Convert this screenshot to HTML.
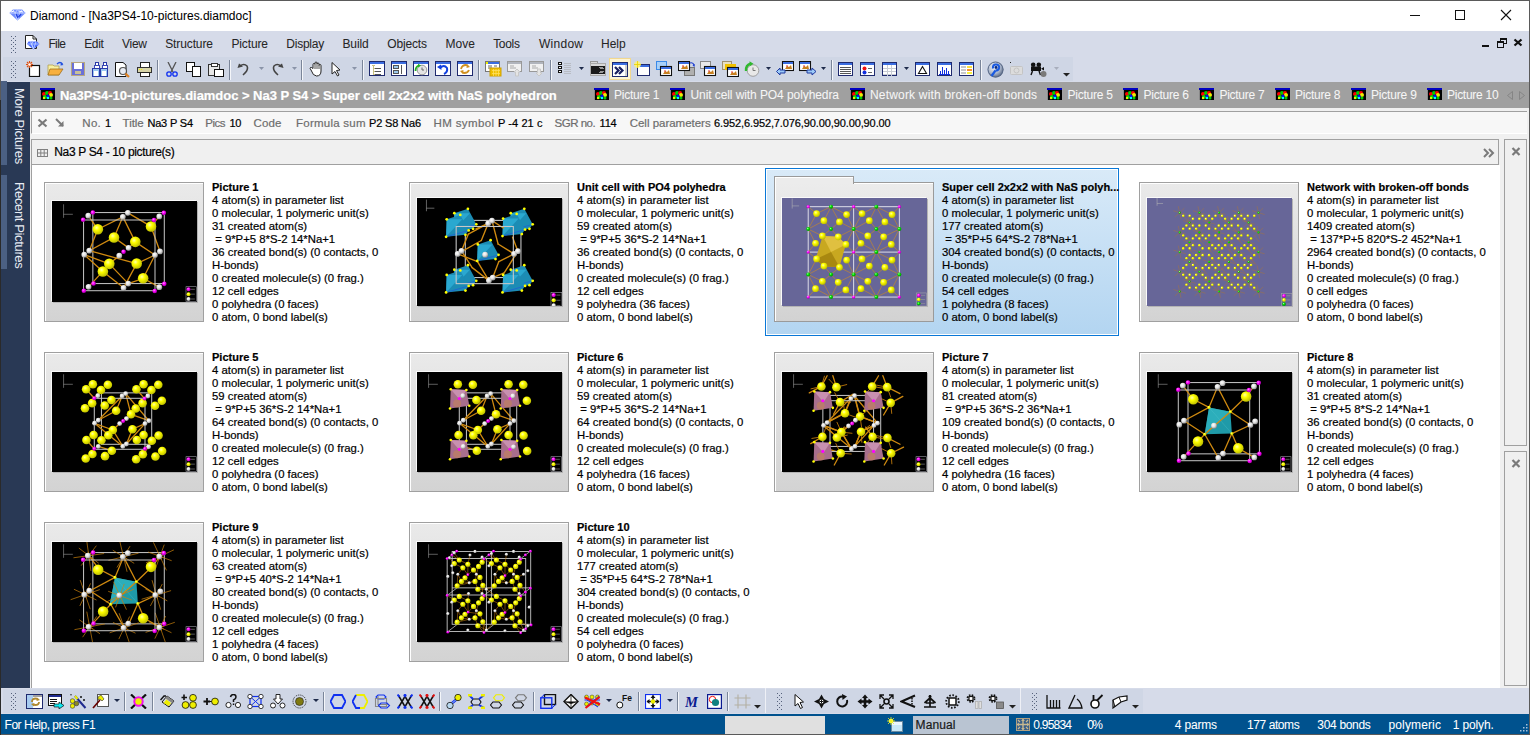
<!DOCTYPE html>
<html><head><meta charset="utf-8"><title>Diamond</title><style>*{margin:0;padding:0;box-sizing:border-box}
html,body{width:1530px;height:735px;overflow:hidden;background:#fff;font-family:"Liberation Sans",sans-serif;position:relative}
.a{position:absolute;display:block}
.t{position:absolute;white-space:pre;line-height:normal;font-family:"Liberation Sans",sans-serif;-webkit-text-stroke:0.2px currentColor}
</style></head><body>
<svg class="a" style="left:0px;top:0px;" width="1" height="1" viewBox="0 0 1 1"><defs>
<radialGradient id="gy" cx="0.38" cy="0.35" r="0.7"><stop offset="0" stop-color="#ffffb0"/><stop offset="0.35" stop-color="#ffff00"/><stop offset="1" stop-color="#b8b800"/></radialGradient>
<radialGradient id="gw" cx="0.38" cy="0.35" r="0.7"><stop offset="0" stop-color="#ffffff"/><stop offset="0.5" stop-color="#e0e0e0"/><stop offset="1" stop-color="#8a8a8a"/></radialGradient>
<radialGradient id="gm" cx="0.38" cy="0.35" r="0.7"><stop offset="0" stop-color="#ff9cff"/><stop offset="0.4" stop-color="#ff00ff"/><stop offset="1" stop-color="#a000a0"/></radialGradient>
<radialGradient id="gg" cx="0.38" cy="0.35" r="0.7"><stop offset="0" stop-color="#a0ffa0"/><stop offset="0.4" stop-color="#00e000"/><stop offset="1" stop-color="#008800"/></radialGradient>
</defs></svg>
<div class="a" style="left:0px;top:0px;width:1530px;height:31px;background:#fff"></div>
<div class="a" style="left:0px;top:31px;width:1530px;height:25px;background:#d6dbe9"></div>
<div class="a" style="left:0px;top:56px;width:1530px;height:26px;background:#d6dbe9"></div>
<div class="a" style="left:3px;top:57px;width:1070px;height:24px;background:#cfd6e5"></div>
<div class="a" style="left:30px;top:82px;width:1500px;height:26px;background:#a0a0a0"></div>
<div class="a" style="left:0px;top:82px;width:30px;height:606px;background:#293955"></div>
<div class="a" style="left:1px;top:81px;width:6px;height:84px;background:#4b6083"></div>
<div class="a" style="left:1px;top:175px;width:6px;height:94px;background:#4b6083"></div>
<div class="a" style="left:30px;top:108px;width:1500px;height:580px;background:#f0f0f0"></div>
<div class="a" style="left:0px;top:688px;width:1530px;height:26px;background:#d6dbe9"></div>
<div class="a" style="left:3px;top:689px;width:762px;height:24px;background:#cfd6e5"></div>
<div class="a" style="left:766px;top:689px;width:254px;height:24px;background:#cfd6e5"></div>
<div class="a" style="left:1021px;top:689px;width:122px;height:24px;background:#cfd6e5"></div>
<div class="a" style="left:0px;top:714px;width:1530px;height:21px;background:#00528e"></div>
<div class="t" style="left:30.00px;top:9.14px;font-size:12px;color:#000;letter-spacing:-0.016px;-webkit-text-stroke:0.05px #000;">Diamond - [Na3PS4-10-pictures.diamdoc]</div>
<svg class="a" style="left:9px;top:9px;" width="17" height="12" viewBox="0 0 17 12"><path d="M4 0.5 H13 L16.5 4 L8.5 11.5 L0.5 4 Z" fill="#6f8cff"/><path d="M4 0.5 L6 4 L8.5 0.5 L11 4 L13 0.5 M0.5 4 H16.5 M6 4 L8.5 11.5 L11 4" fill="none" stroke="#c8d6ff" stroke-width="0.9"/><path d="M2 3 L5 2 M10 2 L14 3" stroke="#fff" stroke-width="1"/><path d="M7 5 L9 9 M12 5 L9.5 8" stroke="#2040e0" stroke-width="1.3"/></svg>
<div class="a" style="left:1410px;top:15px;width:10px;height:1px;background:#111"></div>
<div class="a" style="left:1455px;top:10px;width:10px;height:10px;border:1px solid #111"></div>
<svg class="a" style="left:1500px;top:9px;" width="12" height="12" viewBox="0 0 12 12"><path d="M1 1 L11 11 M11 1 L1 11" stroke="#111" stroke-width="1.1"/></svg>
<div class="a" style="left:1482px;top:45px;width:7px;height:2px;background:#111"></div>
<svg class="a" style="left:1497px;top:38px;" width="10" height="10" viewBox="0 0 10 10"><rect x="3.5" y="0.5" width="6" height="5" fill="none" stroke="#111"/><rect x="3.5" y="0.5" width="6" height="1.5" fill="#111"/><rect x="0.5" y="3.5" width="6" height="6" fill="#d6dbe9" stroke="#111"/><rect x="0.5" y="3.5" width="6" height="1.5" fill="#111"/></svg>
<svg class="a" style="left:1513px;top:38px;" width="10" height="9" viewBox="0 0 10 9"><path d="M1.5 1.5 L8.5 7.5 M8.5 1.5 L1.5 7.5" stroke="#111" stroke-width="2.3"/></svg>
<div class="t" style="left:48.40px;top:37.14px;font-size:12px;color:#262626;letter-spacing:-0.612px;-webkit-text-stroke:0.05px #262626;">File</div>
<div class="t" style="left:84.20px;top:37.14px;font-size:12px;color:#262626;letter-spacing:-0.359px;-webkit-text-stroke:0.05px #262626;">Edit</div>
<div class="t" style="left:122.00px;top:37.14px;font-size:12px;color:#262626;letter-spacing:-0.264px;-webkit-text-stroke:0.05px #262626;">View</div>
<div class="t" style="left:165.20px;top:37.14px;font-size:12px;color:#262626;letter-spacing:-0.111px;-webkit-text-stroke:0.05px #262626;">Structure</div>
<div class="t" style="left:231.40px;top:37.14px;font-size:12px;color:#262626;letter-spacing:-0.125px;-webkit-text-stroke:0.05px #262626;">Picture</div>
<div class="t" style="left:286.30px;top:37.14px;font-size:12px;color:#262626;letter-spacing:-0.241px;-webkit-text-stroke:0.05px #262626;">Display</div>
<div class="t" style="left:342.50px;top:37.14px;font-size:12px;color:#262626;letter-spacing:-0.146px;-webkit-text-stroke:0.05px #262626;">Build</div>
<div class="t" style="left:387.30px;top:37.14px;font-size:12px;color:#262626;letter-spacing:-0.164px;-webkit-text-stroke:0.05px #262626;">Objects</div>
<div class="t" style="left:445.40px;top:37.14px;font-size:12px;color:#262626;letter-spacing:0.085px;-webkit-text-stroke:0.05px #262626;">Move</div>
<div class="t" style="left:493.20px;top:37.14px;font-size:12px;color:#262626;letter-spacing:-0.328px;-webkit-text-stroke:0.05px #262626;">Tools</div>
<div class="t" style="left:539.00px;top:37.14px;font-size:12px;color:#262626;letter-spacing:0.264px;-webkit-text-stroke:0.05px #262626;">Window</div>
<div class="t" style="left:601.00px;top:37.14px;font-size:12px;color:#262626;-webkit-text-stroke:0.05px #262626;">Help</div>
<div class="t" style="left:27px;top:88px;font-size:13px;color:#e8ecf4;transform-origin:0 0;transform:rotate(90deg);letter-spacing:-0.33px;-webkit-text-stroke:0">More Pictures</div>
<div class="t" style="left:27px;top:182px;font-size:13px;color:#e8ecf4;transform-origin:0 0;transform:rotate(90deg);letter-spacing:-0.36px;-webkit-text-stroke:0">Recent Pictures</div>
<div class="t" style="left:60.00px;top:87.73px;font-size:13px;color:#fff;font-weight:bold;letter-spacing:-0.030px;">Na3PS4-10-pictures.diamdoc &gt; Na3 P S4 &gt; Super cell 2x2x2 with NaS polyhedron</div>
<svg class="a" style="left:40px;top:88px;" width="15" height="12" viewBox="0 0 15 12"><rect x="0" y="0" width="15" height="2" fill="#0000c0"/><rect x="0" y="2" width="15" height="10" fill="#000"/><rect x="0" y="2" width="1" height="10" fill="#888"/><circle cx="4" cy="6" r="2" fill="#f00"/><circle cx="7" cy="5" r="2" fill="#0c0"/><circle cx="10" cy="5" r="2" fill="#f00"/><circle cx="11" cy="7" r="2" fill="#ee0"/><circle cx="5" cy="9" r="2" fill="#0d0"/><circle cx="8" cy="8" r="1.6" fill="#00f"/><circle cx="8" cy="10" r="1.3" fill="#0ff"/><circle cx="11" cy="10" r="1.5" fill="#0c0"/><circle cx="4" cy="10" r="1.2" fill="#ee0"/></svg>
<svg class="a" style="left:594px;top:88px;" width="15" height="12" viewBox="0 0 15 12"><rect x="0" y="0" width="15" height="2" fill="#0000c0"/><rect x="0" y="2" width="15" height="10" fill="#000"/><rect x="0" y="2" width="1" height="10" fill="#888"/><circle cx="4" cy="6" r="2" fill="#f00"/><circle cx="7" cy="5" r="2" fill="#0c0"/><circle cx="10" cy="5" r="2" fill="#f00"/><circle cx="11" cy="7" r="2" fill="#ee0"/><circle cx="5" cy="9" r="2" fill="#0d0"/><circle cx="8" cy="8" r="1.6" fill="#00f"/><circle cx="8" cy="10" r="1.3" fill="#0ff"/><circle cx="11" cy="10" r="1.5" fill="#0c0"/><circle cx="4" cy="10" r="1.2" fill="#ee0"/></svg>
<div class="t" style="left:614.00px;top:88.14px;font-size:12px;color:#f6f6f6;letter-spacing:-0.232px;-webkit-text-stroke:0.05px #f6f6f6;">Picture 1</div>
<svg class="a" style="left:670px;top:88px;" width="15" height="12" viewBox="0 0 15 12"><rect x="0" y="0" width="15" height="2" fill="#0000c0"/><rect x="0" y="2" width="15" height="10" fill="#000"/><rect x="0" y="2" width="1" height="10" fill="#888"/><circle cx="4" cy="6" r="2" fill="#f00"/><circle cx="7" cy="5" r="2" fill="#0c0"/><circle cx="10" cy="5" r="2" fill="#f00"/><circle cx="11" cy="7" r="2" fill="#ee0"/><circle cx="5" cy="9" r="2" fill="#0d0"/><circle cx="8" cy="8" r="1.6" fill="#00f"/><circle cx="8" cy="10" r="1.3" fill="#0ff"/><circle cx="11" cy="10" r="1.5" fill="#0c0"/><circle cx="4" cy="10" r="1.2" fill="#ee0"/></svg>
<div class="t" style="left:690.50px;top:88.14px;font-size:12px;color:#f6f6f6;letter-spacing:-0.083px;-webkit-text-stroke:0.05px #f6f6f6;">Unit cell with PO4 polyhedra</div>
<svg class="a" style="left:850px;top:88px;" width="15" height="12" viewBox="0 0 15 12"><rect x="0" y="0" width="15" height="2" fill="#0000c0"/><rect x="0" y="2" width="15" height="10" fill="#000"/><rect x="0" y="2" width="1" height="10" fill="#888"/><circle cx="4" cy="6" r="2" fill="#f00"/><circle cx="7" cy="5" r="2" fill="#0c0"/><circle cx="10" cy="5" r="2" fill="#f00"/><circle cx="11" cy="7" r="2" fill="#ee0"/><circle cx="5" cy="9" r="2" fill="#0d0"/><circle cx="8" cy="8" r="1.6" fill="#00f"/><circle cx="8" cy="10" r="1.3" fill="#0ff"/><circle cx="11" cy="10" r="1.5" fill="#0c0"/><circle cx="4" cy="10" r="1.2" fill="#ee0"/></svg>
<div class="t" style="left:870.00px;top:88.14px;font-size:12px;color:#f6f6f6;letter-spacing:0.184px;-webkit-text-stroke:0.05px #f6f6f6;">Network with broken-off bonds</div>
<svg class="a" style="left:1047px;top:88px;" width="15" height="12" viewBox="0 0 15 12"><rect x="0" y="0" width="15" height="2" fill="#0000c0"/><rect x="0" y="2" width="15" height="10" fill="#000"/><rect x="0" y="2" width="1" height="10" fill="#888"/><circle cx="4" cy="6" r="2" fill="#f00"/><circle cx="7" cy="5" r="2" fill="#0c0"/><circle cx="10" cy="5" r="2" fill="#f00"/><circle cx="11" cy="7" r="2" fill="#ee0"/><circle cx="5" cy="9" r="2" fill="#0d0"/><circle cx="8" cy="8" r="1.6" fill="#00f"/><circle cx="8" cy="10" r="1.3" fill="#0ff"/><circle cx="11" cy="10" r="1.5" fill="#0c0"/><circle cx="4" cy="10" r="1.2" fill="#ee0"/></svg>
<div class="t" style="left:1067.60px;top:88.14px;font-size:12px;color:#f6f6f6;letter-spacing:-0.244px;-webkit-text-stroke:0.05px #f6f6f6;">Picture 5</div>
<svg class="a" style="left:1123px;top:88px;" width="15" height="12" viewBox="0 0 15 12"><rect x="0" y="0" width="15" height="2" fill="#0000c0"/><rect x="0" y="2" width="15" height="10" fill="#000"/><rect x="0" y="2" width="1" height="10" fill="#888"/><circle cx="4" cy="6" r="2" fill="#f00"/><circle cx="7" cy="5" r="2" fill="#0c0"/><circle cx="10" cy="5" r="2" fill="#f00"/><circle cx="11" cy="7" r="2" fill="#ee0"/><circle cx="5" cy="9" r="2" fill="#0d0"/><circle cx="8" cy="8" r="1.6" fill="#00f"/><circle cx="8" cy="10" r="1.3" fill="#0ff"/><circle cx="11" cy="10" r="1.5" fill="#0c0"/><circle cx="4" cy="10" r="1.2" fill="#ee0"/></svg>
<div class="t" style="left:1143.50px;top:88.14px;font-size:12px;color:#f6f6f6;letter-spacing:-0.257px;-webkit-text-stroke:0.05px #f6f6f6;">Picture 6</div>
<svg class="a" style="left:1199px;top:88px;" width="15" height="12" viewBox="0 0 15 12"><rect x="0" y="0" width="15" height="2" fill="#0000c0"/><rect x="0" y="2" width="15" height="10" fill="#000"/><rect x="0" y="2" width="1" height="10" fill="#888"/><circle cx="4" cy="6" r="2" fill="#f00"/><circle cx="7" cy="5" r="2" fill="#0c0"/><circle cx="10" cy="5" r="2" fill="#f00"/><circle cx="11" cy="7" r="2" fill="#ee0"/><circle cx="5" cy="9" r="2" fill="#0d0"/><circle cx="8" cy="8" r="1.6" fill="#00f"/><circle cx="8" cy="10" r="1.3" fill="#0ff"/><circle cx="11" cy="10" r="1.5" fill="#0c0"/><circle cx="4" cy="10" r="1.2" fill="#ee0"/></svg>
<div class="t" style="left:1219.40px;top:88.14px;font-size:12px;color:#f6f6f6;letter-spacing:-0.269px;-webkit-text-stroke:0.05px #f6f6f6;">Picture 7</div>
<svg class="a" style="left:1275px;top:88px;" width="15" height="12" viewBox="0 0 15 12"><rect x="0" y="0" width="15" height="2" fill="#0000c0"/><rect x="0" y="2" width="15" height="10" fill="#000"/><rect x="0" y="2" width="1" height="10" fill="#888"/><circle cx="4" cy="6" r="2" fill="#f00"/><circle cx="7" cy="5" r="2" fill="#0c0"/><circle cx="10" cy="5" r="2" fill="#f00"/><circle cx="11" cy="7" r="2" fill="#ee0"/><circle cx="5" cy="9" r="2" fill="#0d0"/><circle cx="8" cy="8" r="1.6" fill="#00f"/><circle cx="8" cy="10" r="1.3" fill="#0ff"/><circle cx="11" cy="10" r="1.5" fill="#0c0"/><circle cx="4" cy="10" r="1.2" fill="#ee0"/></svg>
<div class="t" style="left:1295.00px;top:88.14px;font-size:12px;color:#f6f6f6;letter-spacing:-0.232px;-webkit-text-stroke:0.05px #f6f6f6;">Picture 8</div>
<svg class="a" style="left:1351px;top:88px;" width="15" height="12" viewBox="0 0 15 12"><rect x="0" y="0" width="15" height="2" fill="#0000c0"/><rect x="0" y="2" width="15" height="10" fill="#000"/><rect x="0" y="2" width="1" height="10" fill="#888"/><circle cx="4" cy="6" r="2" fill="#f00"/><circle cx="7" cy="5" r="2" fill="#0c0"/><circle cx="10" cy="5" r="2" fill="#f00"/><circle cx="11" cy="7" r="2" fill="#ee0"/><circle cx="5" cy="9" r="2" fill="#0d0"/><circle cx="8" cy="8" r="1.6" fill="#00f"/><circle cx="8" cy="10" r="1.3" fill="#0ff"/><circle cx="11" cy="10" r="1.5" fill="#0c0"/><circle cx="4" cy="10" r="1.2" fill="#ee0"/></svg>
<div class="t" style="left:1371.00px;top:88.14px;font-size:12px;color:#f6f6f6;letter-spacing:-0.194px;-webkit-text-stroke:0.05px #f6f6f6;">Picture 9</div>
<svg class="a" style="left:1427px;top:88px;" width="15" height="12" viewBox="0 0 15 12"><rect x="0" y="0" width="15" height="2" fill="#0000c0"/><rect x="0" y="2" width="15" height="10" fill="#000"/><rect x="0" y="2" width="1" height="10" fill="#888"/><circle cx="4" cy="6" r="2" fill="#f00"/><circle cx="7" cy="5" r="2" fill="#0c0"/><circle cx="10" cy="5" r="2" fill="#f00"/><circle cx="11" cy="7" r="2" fill="#ee0"/><circle cx="5" cy="9" r="2" fill="#0d0"/><circle cx="8" cy="8" r="1.6" fill="#00f"/><circle cx="8" cy="10" r="1.3" fill="#0ff"/><circle cx="11" cy="10" r="1.5" fill="#0c0"/><circle cx="4" cy="10" r="1.2" fill="#ee0"/></svg>
<div class="t" style="left:1447.00px;top:88.14px;font-size:12px;color:#f6f6f6;letter-spacing:-0.270px;-webkit-text-stroke:0.05px #f6f6f6;">Picture 10</div>
<svg class="a" style="left:1506px;top:91px;" width="20" height="10" viewBox="0 0 20 10"><path d="M6.5 0.5 L1.5 4.5 L6.5 8.5 Z" fill="none" stroke="#858585"/><path d="M13.5 0.5 L18.5 4.5 L13.5 8.5 Z" fill="none" stroke="#858585"/></svg>
<div class="a" style="left:31px;top:111px;width:1496px;height:23px;background:#f7f7f7;border-top:1px solid #a0a0a0;border-left:1px solid #a0a0a0;border-bottom:1px solid #fff"></div>
<svg class="a" style="left:37px;top:118px;" width="11" height="10" viewBox="0 0 11 10"><path d="M1.5 1.5 L9.5 8.5 M9.5 1.5 L1.5 8.5" stroke="#7a7a7a" stroke-width="2.2"/></svg>
<svg class="a" style="left:55px;top:118px;" width="10" height="10" viewBox="0 0 10 10"><path d="M1 1 L8 8" stroke="#7a7a7a" stroke-width="2"/><path d="M8.5 3 L8.5 8.5 L3 8.5 Z" fill="#7a7a7a"/></svg>
<div class="t" style="left:82.30px;top:116.59px;font-size:11.5px;color:#6d6d6d;letter-spacing:0.302px;">No.</div>
<div class="t" style="left:104.90px;top:117.05px;font-size:11px;color:#000;">1</div>
<div class="t" style="left:122.60px;top:116.59px;font-size:11.5px;color:#6d6d6d;letter-spacing:-0.050px;">Title</div>
<div class="t" style="left:147.40px;top:117.05px;font-size:11px;color:#000;letter-spacing:-0.169px;">Na3 P S4</div>
<div class="t" style="left:205.30px;top:116.59px;font-size:11.5px;color:#6d6d6d;letter-spacing:-0.475px;">Pics</div>
<div class="t" style="left:229.40px;top:117.05px;font-size:11px;color:#000;letter-spacing:-0.235px;">10</div>
<div class="t" style="left:253.50px;top:116.59px;font-size:11.5px;color:#6d6d6d;letter-spacing:0.103px;">Code</div>
<div class="t" style="left:296.00px;top:116.59px;font-size:11.5px;color:#6d6d6d;letter-spacing:0.240px;">Formula sum</div>
<div class="t" style="left:369.00px;top:117.05px;font-size:11px;color:#000;letter-spacing:-0.150px;">P2 S8 Na6</div>
<div class="t" style="left:433.60px;top:116.59px;font-size:11.5px;color:#6d6d6d;letter-spacing:0.362px;">HM symbol</div>
<div class="t" style="left:498.00px;top:117.05px;font-size:11px;color:#000;letter-spacing:0.072px;">P -4 21 c</div>
<div class="t" style="left:554.60px;top:116.59px;font-size:11.5px;color:#6d6d6d;letter-spacing:-0.500px;">SGR no.</div>
<div class="t" style="left:599.60px;top:117.05px;font-size:11px;color:#000;letter-spacing:-0.268px;">114</div>
<div class="t" style="left:629.70px;top:116.59px;font-size:11.5px;color:#6d6d6d;letter-spacing:-0.012px;">Cell parameters</div>
<div class="t" style="left:714.00px;top:117.05px;font-size:11px;color:#000;letter-spacing:-0.110px;">6.952,6.952,7.076,90.00,90.00,90.00</div>
<div class="a" style="left:31px;top:139px;width:1468px;height:26px;background:#f0f0f0;border:1px solid #a0a0a0"></div>
<div class="a" style="left:31px;top:165px;width:1469px;height:523px;background:#fff;border-left:1px solid #a0a0a0"></div>
<svg class="a" style="left:37px;top:149px;" width="11" height="8" viewBox="0 0 11 8"><rect x="0.5" y="0.5" width="10" height="7" fill="none" stroke="#808080"/><path d="M0 4 H11 M3.8 0 V8 M7.2 0 V8" stroke="#808080"/></svg>
<div class="t" style="left:54.30px;top:145.44px;font-size:12px;color:#000;letter-spacing:-0.349px;">Na3 P S4 - 10 picture(s)</div>
<svg class="a" style="left:1483px;top:148px;" width="13" height="10" viewBox="0 0 13 10"><path d="M1 1 L5 5 L1 9 M6 1 L10 5 L6 9" fill="none" stroke="#7a7a7a" stroke-width="2"/></svg>
<div class="a" style="left:1504px;top:139px;width:23px;height:307px;background:#f0f0f0;border:1px solid #a0a0a0"></div>
<div class="a" style="left:1504px;top:451px;width:23px;height:235px;background:#f0f0f0;border:1px solid #a0a0a0"></div>
<svg class="a" style="left:1511px;top:147px;" width="10" height="9" viewBox="0 0 10 9"><path d="M1.5 1 L8.5 8 M8.5 1 L1.5 8" stroke="#7a7a7a" stroke-width="2.2"/></svg>
<svg class="a" style="left:1511px;top:459px;" width="10" height="9" viewBox="0 0 10 9"><path d="M1.5 1 L8.5 8 M8.5 1 L1.5 8" stroke="#7a7a7a" stroke-width="2.2"/></svg>
<div class="t" style="left:4.60px;top:717.64px;font-size:12px;color:#fff;letter-spacing:-0.492px;-webkit-text-stroke:0.05px #fff;">For Help, press F1</div>
<div class="a" style="left:725px;top:716px;width:100px;height:18px;background:#e0e0e0"></div>
<div class="a" style="left:913px;top:716px;width:96px;height:18px;background:#b9c4d2"></div>
<div class="t" style="left:915.50px;top:717.64px;font-size:12px;color:#1a1a1a;letter-spacing:0.129px;">Manual</div>
<div class="t" style="left:1033.30px;top:717.64px;font-size:12px;color:#fff;letter-spacing:-0.779px;-webkit-text-stroke:0.05px #fff;">0.95834</div>
<div class="t" style="left:1087.30px;top:717.64px;font-size:12px;color:#fff;letter-spacing:-1.644px;-webkit-text-stroke:0.05px #fff;">0%</div>
<div class="t" style="left:1174.80px;top:717.64px;font-size:12px;color:#fff;letter-spacing:-0.191px;-webkit-text-stroke:0.05px #fff;">4 parms</div>
<div class="t" style="left:1247.00px;top:717.64px;font-size:12px;color:#fff;letter-spacing:-0.417px;-webkit-text-stroke:0.05px #fff;">177 atoms</div>
<div class="t" style="left:1317.30px;top:717.64px;font-size:12px;color:#fff;letter-spacing:-0.319px;-webkit-text-stroke:0.05px #fff;">304 bonds</div>
<div class="t" style="left:1388.50px;top:717.64px;font-size:12px;color:#fff;letter-spacing:0.132px;-webkit-text-stroke:0.05px #fff;">polymeric</div>
<div class="t" style="left:1452.70px;top:717.64px;font-size:12px;color:#fff;letter-spacing:-0.133px;-webkit-text-stroke:0.05px #fff;">1 polyh.</div>
<div class="a" style="left:0px;top:0px;width:1530px;height:735px;border:1px solid #5a5a5a;background:transparent"></div>
<div class="a" style="left:0px;top:100px;width:1px;height:635px;background:#2a2a2a"></div>
<div class="a" style="left:765px;top:168px;width:354px;height:168px;border:1px solid #0a78d7;box-shadow:inset 0 0 0 1px #fff;background:linear-gradient(#d9eaf8,#b3d5f1)"></div>
<div class="t" style="left:212.00px;top:180.74px;font-size:11px;color:#000;font-weight:bold;">Picture 1</div>
<div class="t" style="left:212.00px;top:193.74px;font-size:11px;color:#000;transform-origin:0 0;transform:scaleX(1.03);">4 atom(s) in parameter list</div>
<div class="t" style="left:212.00px;top:206.74px;font-size:11px;color:#000;transform-origin:0 0;transform:scaleX(1.03);">0 molecular, 1 polymeric unit(s)</div>
<div class="t" style="left:212.00px;top:219.74px;font-size:11px;color:#000;transform-origin:0 0;transform:scaleX(1.03);">31 created atom(s)</div>
<div class="t" style="left:212.00px;top:232.74px;font-size:11px;color:#000;transform-origin:0 0;transform:scaleX(1.03);"> = 9*P+5 8*S-2 14*Na+1</div>
<div class="t" style="left:212.00px;top:245.74px;font-size:11px;color:#000;transform-origin:0 0;transform:scaleX(1.03);">36 created bond(s) (0 contacts, 0</div>
<div class="t" style="left:212.00px;top:258.75px;font-size:11px;color:#000;transform-origin:0 0;transform:scaleX(1.03);">H-bonds)</div>
<div class="t" style="left:212.00px;top:271.75px;font-size:11px;color:#000;transform-origin:0 0;transform:scaleX(1.03);">0 created molecule(s) (0 frag.)</div>
<div class="t" style="left:212.00px;top:284.75px;font-size:11px;color:#000;transform-origin:0 0;transform:scaleX(1.03);">12 cell edges</div>
<div class="t" style="left:212.00px;top:297.75px;font-size:11px;color:#000;transform-origin:0 0;transform:scaleX(1.03);">0 polyhedra (0 faces)</div>
<div class="t" style="left:212.00px;top:310.75px;font-size:11px;color:#000;transform-origin:0 0;transform:scaleX(1.03);">0 atom, 0 bond label(s)</div>
<div class="t" style="left:577.00px;top:180.74px;font-size:11px;color:#000;font-weight:bold;">Unit cell with PO4 polyhedra</div>
<div class="t" style="left:577.00px;top:193.74px;font-size:11px;color:#000;transform-origin:0 0;transform:scaleX(1.03);">4 atom(s) in parameter list</div>
<div class="t" style="left:577.00px;top:206.74px;font-size:11px;color:#000;transform-origin:0 0;transform:scaleX(1.03);">0 molecular, 1 polymeric unit(s)</div>
<div class="t" style="left:577.00px;top:219.74px;font-size:11px;color:#000;transform-origin:0 0;transform:scaleX(1.03);">59 created atom(s)</div>
<div class="t" style="left:577.00px;top:232.74px;font-size:11px;color:#000;transform-origin:0 0;transform:scaleX(1.03);"> = 9*P+5 36*S-2 14*Na+1</div>
<div class="t" style="left:577.00px;top:245.74px;font-size:11px;color:#000;transform-origin:0 0;transform:scaleX(1.03);">36 created bond(s) (0 contacts, 0</div>
<div class="t" style="left:577.00px;top:258.75px;font-size:11px;color:#000;transform-origin:0 0;transform:scaleX(1.03);">H-bonds)</div>
<div class="t" style="left:577.00px;top:271.75px;font-size:11px;color:#000;transform-origin:0 0;transform:scaleX(1.03);">0 created molecule(s) (0 frag.)</div>
<div class="t" style="left:577.00px;top:284.75px;font-size:11px;color:#000;transform-origin:0 0;transform:scaleX(1.03);">12 cell edges</div>
<div class="t" style="left:577.00px;top:297.75px;font-size:11px;color:#000;transform-origin:0 0;transform:scaleX(1.03);">9 polyhedra (36 faces)</div>
<div class="t" style="left:577.00px;top:310.75px;font-size:11px;color:#000;transform-origin:0 0;transform:scaleX(1.03);">0 atom, 0 bond label(s)</div>
<div class="t" style="left:942.00px;top:180.74px;font-size:11px;color:#000;font-weight:bold;">Super cell 2x2x2 with NaS polyh...</div>
<div class="t" style="left:942.00px;top:193.74px;font-size:11px;color:#000;transform-origin:0 0;transform:scaleX(1.03);">4 atom(s) in parameter list</div>
<div class="t" style="left:942.00px;top:206.74px;font-size:11px;color:#000;transform-origin:0 0;transform:scaleX(1.03);">0 molecular, 1 polymeric unit(s)</div>
<div class="t" style="left:942.00px;top:219.74px;font-size:11px;color:#000;transform-origin:0 0;transform:scaleX(1.03);">177 created atom(s)</div>
<div class="t" style="left:942.00px;top:232.74px;font-size:11px;color:#000;transform-origin:0 0;transform:scaleX(1.03);"> = 35*P+5 64*S-2 78*Na+1</div>
<div class="t" style="left:942.00px;top:245.74px;font-size:11px;color:#000;transform-origin:0 0;transform:scaleX(1.03);">304 created bond(s) (0 contacts, 0</div>
<div class="t" style="left:942.00px;top:258.75px;font-size:11px;color:#000;transform-origin:0 0;transform:scaleX(1.03);">H-bonds)</div>
<div class="t" style="left:942.00px;top:271.75px;font-size:11px;color:#000;transform-origin:0 0;transform:scaleX(1.03);">0 created molecule(s) (0 frag.)</div>
<div class="t" style="left:942.00px;top:284.75px;font-size:11px;color:#000;transform-origin:0 0;transform:scaleX(1.03);">54 cell edges</div>
<div class="t" style="left:942.00px;top:297.75px;font-size:11px;color:#000;transform-origin:0 0;transform:scaleX(1.03);">1 polyhedra (8 faces)</div>
<div class="t" style="left:942.00px;top:310.75px;font-size:11px;color:#000;transform-origin:0 0;transform:scaleX(1.03);">0 atom, 0 bond label(s)</div>
<div class="t" style="left:1307.00px;top:180.74px;font-size:11px;color:#000;font-weight:bold;">Network with broken-off bonds</div>
<div class="t" style="left:1307.00px;top:193.74px;font-size:11px;color:#000;transform-origin:0 0;transform:scaleX(1.03);">4 atom(s) in parameter list</div>
<div class="t" style="left:1307.00px;top:206.74px;font-size:11px;color:#000;transform-origin:0 0;transform:scaleX(1.03);">0 molecular, 1 polymeric unit(s)</div>
<div class="t" style="left:1307.00px;top:219.74px;font-size:11px;color:#000;transform-origin:0 0;transform:scaleX(1.03);">1409 created atom(s)</div>
<div class="t" style="left:1307.00px;top:232.74px;font-size:11px;color:#000;transform-origin:0 0;transform:scaleX(1.03);"> = 137*P+5 820*S-2 452*Na+1</div>
<div class="t" style="left:1307.00px;top:245.74px;font-size:11px;color:#000;transform-origin:0 0;transform:scaleX(1.03);">2964 created bond(s) (0 contacts, 0</div>
<div class="t" style="left:1307.00px;top:258.75px;font-size:11px;color:#000;transform-origin:0 0;transform:scaleX(1.03);">H-bonds)</div>
<div class="t" style="left:1307.00px;top:271.75px;font-size:11px;color:#000;transform-origin:0 0;transform:scaleX(1.03);">0 created molecule(s) (0 frag.)</div>
<div class="t" style="left:1307.00px;top:284.75px;font-size:11px;color:#000;transform-origin:0 0;transform:scaleX(1.03);">0 cell edges</div>
<div class="t" style="left:1307.00px;top:297.75px;font-size:11px;color:#000;transform-origin:0 0;transform:scaleX(1.03);">0 polyhedra (0 faces)</div>
<div class="t" style="left:1307.00px;top:310.75px;font-size:11px;color:#000;transform-origin:0 0;transform:scaleX(1.03);">0 atom, 0 bond label(s)</div>
<div class="t" style="left:212.00px;top:350.75px;font-size:11px;color:#000;font-weight:bold;">Picture 5</div>
<div class="t" style="left:212.00px;top:363.75px;font-size:11px;color:#000;transform-origin:0 0;transform:scaleX(1.03);">4 atom(s) in parameter list</div>
<div class="t" style="left:212.00px;top:376.75px;font-size:11px;color:#000;transform-origin:0 0;transform:scaleX(1.03);">0 molecular, 1 polymeric unit(s)</div>
<div class="t" style="left:212.00px;top:389.75px;font-size:11px;color:#000;transform-origin:0 0;transform:scaleX(1.03);">59 created atom(s)</div>
<div class="t" style="left:212.00px;top:402.75px;font-size:11px;color:#000;transform-origin:0 0;transform:scaleX(1.03);"> = 9*P+5 36*S-2 14*Na+1</div>
<div class="t" style="left:212.00px;top:415.75px;font-size:11px;color:#000;transform-origin:0 0;transform:scaleX(1.03);">64 created bond(s) (0 contacts, 0</div>
<div class="t" style="left:212.00px;top:428.75px;font-size:11px;color:#000;transform-origin:0 0;transform:scaleX(1.03);">H-bonds)</div>
<div class="t" style="left:212.00px;top:441.75px;font-size:11px;color:#000;transform-origin:0 0;transform:scaleX(1.03);">0 created molecule(s) (0 frag.)</div>
<div class="t" style="left:212.00px;top:454.75px;font-size:11px;color:#000;transform-origin:0 0;transform:scaleX(1.03);">12 cell edges</div>
<div class="t" style="left:212.00px;top:467.75px;font-size:11px;color:#000;transform-origin:0 0;transform:scaleX(1.03);">0 polyhedra (0 faces)</div>
<div class="t" style="left:212.00px;top:480.75px;font-size:11px;color:#000;transform-origin:0 0;transform:scaleX(1.03);">0 atom, 0 bond label(s)</div>
<div class="t" style="left:577.00px;top:350.75px;font-size:11px;color:#000;font-weight:bold;">Picture 6</div>
<div class="t" style="left:577.00px;top:363.75px;font-size:11px;color:#000;transform-origin:0 0;transform:scaleX(1.03);">4 atom(s) in parameter list</div>
<div class="t" style="left:577.00px;top:376.75px;font-size:11px;color:#000;transform-origin:0 0;transform:scaleX(1.03);">0 molecular, 1 polymeric unit(s)</div>
<div class="t" style="left:577.00px;top:389.75px;font-size:11px;color:#000;transform-origin:0 0;transform:scaleX(1.03);">59 created atom(s)</div>
<div class="t" style="left:577.00px;top:402.75px;font-size:11px;color:#000;transform-origin:0 0;transform:scaleX(1.03);"> = 9*P+5 36*S-2 14*Na+1</div>
<div class="t" style="left:577.00px;top:415.75px;font-size:11px;color:#000;transform-origin:0 0;transform:scaleX(1.03);">64 created bond(s) (0 contacts, 0</div>
<div class="t" style="left:577.00px;top:428.75px;font-size:11px;color:#000;transform-origin:0 0;transform:scaleX(1.03);">H-bonds)</div>
<div class="t" style="left:577.00px;top:441.75px;font-size:11px;color:#000;transform-origin:0 0;transform:scaleX(1.03);">0 created molecule(s) (0 frag.)</div>
<div class="t" style="left:577.00px;top:454.75px;font-size:11px;color:#000;transform-origin:0 0;transform:scaleX(1.03);">12 cell edges</div>
<div class="t" style="left:577.00px;top:467.75px;font-size:11px;color:#000;transform-origin:0 0;transform:scaleX(1.03);">4 polyhedra (16 faces)</div>
<div class="t" style="left:577.00px;top:480.75px;font-size:11px;color:#000;transform-origin:0 0;transform:scaleX(1.03);">0 atom, 0 bond label(s)</div>
<div class="t" style="left:942.00px;top:350.75px;font-size:11px;color:#000;font-weight:bold;">Picture 7</div>
<div class="t" style="left:942.00px;top:363.75px;font-size:11px;color:#000;transform-origin:0 0;transform:scaleX(1.03);">4 atom(s) in parameter list</div>
<div class="t" style="left:942.00px;top:376.75px;font-size:11px;color:#000;transform-origin:0 0;transform:scaleX(1.03);">0 molecular, 1 polymeric unit(s)</div>
<div class="t" style="left:942.00px;top:389.75px;font-size:11px;color:#000;transform-origin:0 0;transform:scaleX(1.03);">81 created atom(s)</div>
<div class="t" style="left:942.00px;top:402.75px;font-size:11px;color:#000;transform-origin:0 0;transform:scaleX(1.03);"> = 9*P+5 36*S-2 36*Na+1</div>
<div class="t" style="left:942.00px;top:415.75px;font-size:11px;color:#000;transform-origin:0 0;transform:scaleX(1.03);">109 created bond(s) (0 contacts, 0</div>
<div class="t" style="left:942.00px;top:428.75px;font-size:11px;color:#000;transform-origin:0 0;transform:scaleX(1.03);">H-bonds)</div>
<div class="t" style="left:942.00px;top:441.75px;font-size:11px;color:#000;transform-origin:0 0;transform:scaleX(1.03);">0 created molecule(s) (0 frag.)</div>
<div class="t" style="left:942.00px;top:454.75px;font-size:11px;color:#000;transform-origin:0 0;transform:scaleX(1.03);">12 cell edges</div>
<div class="t" style="left:942.00px;top:467.75px;font-size:11px;color:#000;transform-origin:0 0;transform:scaleX(1.03);">4 polyhedra (16 faces)</div>
<div class="t" style="left:942.00px;top:480.75px;font-size:11px;color:#000;transform-origin:0 0;transform:scaleX(1.03);">0 atom, 0 bond label(s)</div>
<div class="t" style="left:1307.00px;top:350.75px;font-size:11px;color:#000;font-weight:bold;">Picture 8</div>
<div class="t" style="left:1307.00px;top:363.75px;font-size:11px;color:#000;transform-origin:0 0;transform:scaleX(1.03);">4 atom(s) in parameter list</div>
<div class="t" style="left:1307.00px;top:376.75px;font-size:11px;color:#000;transform-origin:0 0;transform:scaleX(1.03);">0 molecular, 1 polymeric unit(s)</div>
<div class="t" style="left:1307.00px;top:389.75px;font-size:11px;color:#000;transform-origin:0 0;transform:scaleX(1.03);">31 created atom(s)</div>
<div class="t" style="left:1307.00px;top:402.75px;font-size:11px;color:#000;transform-origin:0 0;transform:scaleX(1.03);"> = 9*P+5 8*S-2 14*Na+1</div>
<div class="t" style="left:1307.00px;top:415.75px;font-size:11px;color:#000;transform-origin:0 0;transform:scaleX(1.03);">36 created bond(s) (0 contacts, 0</div>
<div class="t" style="left:1307.00px;top:428.75px;font-size:11px;color:#000;transform-origin:0 0;transform:scaleX(1.03);">H-bonds)</div>
<div class="t" style="left:1307.00px;top:441.75px;font-size:11px;color:#000;transform-origin:0 0;transform:scaleX(1.03);">0 created molecule(s) (0 frag.)</div>
<div class="t" style="left:1307.00px;top:454.75px;font-size:11px;color:#000;transform-origin:0 0;transform:scaleX(1.03);">12 cell edges</div>
<div class="t" style="left:1307.00px;top:467.75px;font-size:11px;color:#000;transform-origin:0 0;transform:scaleX(1.03);">1 polyhedra (4 faces)</div>
<div class="t" style="left:1307.00px;top:480.75px;font-size:11px;color:#000;transform-origin:0 0;transform:scaleX(1.03);">0 atom, 0 bond label(s)</div>
<div class="t" style="left:212.00px;top:520.75px;font-size:11px;color:#000;font-weight:bold;">Picture 9</div>
<div class="t" style="left:212.00px;top:533.75px;font-size:11px;color:#000;transform-origin:0 0;transform:scaleX(1.03);">4 atom(s) in parameter list</div>
<div class="t" style="left:212.00px;top:546.75px;font-size:11px;color:#000;transform-origin:0 0;transform:scaleX(1.03);">0 molecular, 1 polymeric unit(s)</div>
<div class="t" style="left:212.00px;top:559.75px;font-size:11px;color:#000;transform-origin:0 0;transform:scaleX(1.03);">63 created atom(s)</div>
<div class="t" style="left:212.00px;top:572.75px;font-size:11px;color:#000;transform-origin:0 0;transform:scaleX(1.03);"> = 9*P+5 40*S-2 14*Na+1</div>
<div class="t" style="left:212.00px;top:585.75px;font-size:11px;color:#000;transform-origin:0 0;transform:scaleX(1.03);">80 created bond(s) (0 contacts, 0</div>
<div class="t" style="left:212.00px;top:598.75px;font-size:11px;color:#000;transform-origin:0 0;transform:scaleX(1.03);">H-bonds)</div>
<div class="t" style="left:212.00px;top:611.75px;font-size:11px;color:#000;transform-origin:0 0;transform:scaleX(1.03);">0 created molecule(s) (0 frag.)</div>
<div class="t" style="left:212.00px;top:624.75px;font-size:11px;color:#000;transform-origin:0 0;transform:scaleX(1.03);">12 cell edges</div>
<div class="t" style="left:212.00px;top:637.75px;font-size:11px;color:#000;transform-origin:0 0;transform:scaleX(1.03);">1 polyhedra (4 faces)</div>
<div class="t" style="left:212.00px;top:650.75px;font-size:11px;color:#000;transform-origin:0 0;transform:scaleX(1.03);">0 atom, 0 bond label(s)</div>
<div class="t" style="left:577.00px;top:520.75px;font-size:11px;color:#000;font-weight:bold;">Picture 10</div>
<div class="t" style="left:577.00px;top:533.75px;font-size:11px;color:#000;transform-origin:0 0;transform:scaleX(1.03);">4 atom(s) in parameter list</div>
<div class="t" style="left:577.00px;top:546.75px;font-size:11px;color:#000;transform-origin:0 0;transform:scaleX(1.03);">0 molecular, 1 polymeric unit(s)</div>
<div class="t" style="left:577.00px;top:559.75px;font-size:11px;color:#000;transform-origin:0 0;transform:scaleX(1.03);">177 created atom(s)</div>
<div class="t" style="left:577.00px;top:572.75px;font-size:11px;color:#000;transform-origin:0 0;transform:scaleX(1.03);"> = 35*P+5 64*S-2 78*Na+1</div>
<div class="t" style="left:577.00px;top:585.75px;font-size:11px;color:#000;transform-origin:0 0;transform:scaleX(1.03);">304 created bond(s) (0 contacts, 0</div>
<div class="t" style="left:577.00px;top:598.75px;font-size:11px;color:#000;transform-origin:0 0;transform:scaleX(1.03);">H-bonds)</div>
<div class="t" style="left:577.00px;top:611.75px;font-size:11px;color:#000;transform-origin:0 0;transform:scaleX(1.03);">0 created molecule(s) (0 frag.)</div>
<div class="t" style="left:577.00px;top:624.75px;font-size:11px;color:#000;transform-origin:0 0;transform:scaleX(1.03);">54 cell edges</div>
<div class="t" style="left:577.00px;top:637.75px;font-size:11px;color:#000;transform-origin:0 0;transform:scaleX(1.03);">0 polyhedra (0 faces)</div>
<div class="t" style="left:577.00px;top:650.75px;font-size:11px;color:#000;transform-origin:0 0;transform:scaleX(1.03);">0 atom, 0 bond label(s)</div>
<div class="a" style="left:44px;top:182px;width:160px;height:140px;border:1px solid #a0a0a0;box-shadow:inset 1px 1px 0 #fff;background:linear-gradient(#eaeaea,#d3d3d3)"></div>
<div class="a" style="left:409px;top:182px;width:160px;height:140px;border:1px solid #a0a0a0;box-shadow:inset 1px 1px 0 #fff;background:linear-gradient(#eaeaea,#d3d3d3)"></div>
<div class="a" style="left:774px;top:182px;width:160px;height:140px;border:1px solid #9a9a9a;box-shadow:inset 1px 1px 0 #fff;background:linear-gradient(#ececec,#d2d2d2)"></div>
<div class="a" style="left:774px;top:176px;width:80px;height:8px;border:1px solid #9a9a9a;border-bottom:none;box-shadow:inset 1px 1px 0 #fff;background:#ececec"></div>
<div class="a" style="left:1139px;top:182px;width:160px;height:140px;border:1px solid #a0a0a0;box-shadow:inset 1px 1px 0 #fff;background:linear-gradient(#eaeaea,#d3d3d3)"></div>
<div class="a" style="left:44px;top:352px;width:160px;height:140px;border:1px solid #a0a0a0;box-shadow:inset 1px 1px 0 #fff;background:linear-gradient(#eaeaea,#d3d3d3)"></div>
<div class="a" style="left:409px;top:352px;width:160px;height:140px;border:1px solid #a0a0a0;box-shadow:inset 1px 1px 0 #fff;background:linear-gradient(#eaeaea,#d3d3d3)"></div>
<div class="a" style="left:774px;top:352px;width:160px;height:140px;border:1px solid #a0a0a0;box-shadow:inset 1px 1px 0 #fff;background:linear-gradient(#eaeaea,#d3d3d3)"></div>
<div class="a" style="left:1139px;top:352px;width:160px;height:140px;border:1px solid #a0a0a0;box-shadow:inset 1px 1px 0 #fff;background:linear-gradient(#eaeaea,#d3d3d3)"></div>
<div class="a" style="left:44px;top:522px;width:160px;height:140px;border:1px solid #a0a0a0;box-shadow:inset 1px 1px 0 #fff;background:linear-gradient(#eaeaea,#d3d3d3)"></div>
<div class="a" style="left:409px;top:522px;width:160px;height:140px;border:1px solid #a0a0a0;box-shadow:inset 1px 1px 0 #fff;background:linear-gradient(#eaeaea,#d3d3d3)"></div>
<svg class="a" style="left:52px;top:201px;overflow:hidden;box-shadow:-1px -1px 0 #fafafa, 1px 1px 0 #b4b4b4" width="145" height="101" viewBox="14.0 7.0 1015.0 707.0"><rect x="14.0" y="7.0" width="1015.0" height="707.0" fill="#000"/><g stroke="#b8b8b8" stroke-width="3.5"><line x1="95" y1="30.0" x2="95" y2="125.0"/><line x1="95" y1="100" x2="160.0" y2="100"/></g><rect x="300" y="88" width="500" height="497" fill="none" stroke="#c8c8c8" stroke-width="7"/><g stroke="#d08a10" stroke-width="9" stroke-linecap="round"><line x1="268" y1="110" x2="335" y2="205"/><line x1="510" y1="118" x2="335" y2="205"/><line x1="510" y1="118" x2="448" y2="262"/><line x1="545" y1="90" x2="707" y2="185"/><line x1="765" y1="115" x2="707" y2="185"/><line x1="510" y1="118" x2="597" y2="293"/><line x1="275" y1="355" x2="335" y2="205"/><line x1="275" y1="355" x2="448" y2="262"/><line x1="240" y1="383" x2="415" y2="447"/><line x1="240" y1="383" x2="370" y2="500"/><line x1="485" y1="390" x2="415" y2="447"/><line x1="550" y1="335" x2="448" y2="262"/><line x1="550" y1="335" x2="597" y2="293"/><line x1="735" y1="385" x2="597" y2="293"/><line x1="770" y1="360" x2="707" y2="185"/><line x1="735" y1="385" x2="607" y2="445"/><line x1="735" y1="385" x2="652" y2="548"/><line x1="270" y1="608" x2="370" y2="500"/><line x1="515" y1="615" x2="370" y2="500"/><line x1="515" y1="615" x2="607" y2="445"/><line x1="548" y1="585" x2="652" y2="548"/><line x1="765" y1="610" x2="652" y2="548"/><line x1="548" y1="585" x2="415" y2="447"/><line x1="275" y1="355" x2="607" y2="445"/></g><rect x="235" y="140" width="500" height="495" fill="none" stroke="#c8c8c8" stroke-width="7"/><circle cx="335" cy="205" r="37" fill="url(#gy)"/><circle cx="448" cy="262" r="37" fill="url(#gy)"/><circle cx="597" cy="293" r="37" fill="url(#gy)"/><circle cx="707" cy="185" r="37" fill="url(#gy)"/><circle cx="415" cy="447" r="37" fill="url(#gy)"/><circle cx="370" cy="500" r="37" fill="url(#gy)"/><circle cx="607" cy="445" r="37" fill="url(#gy)"/><circle cx="652" cy="548" r="37" fill="url(#gy)"/><circle cx="268" cy="110" r="20" fill="url(#gw)"/><circle cx="545" cy="90" r="20" fill="url(#gw)"/><circle cx="510" cy="118" r="20" fill="url(#gw)"/><circle cx="765" cy="115" r="20" fill="url(#gw)"/><circle cx="275" cy="355" r="20" fill="url(#gw)"/><circle cx="240" cy="383" r="20" fill="url(#gw)"/><circle cx="485" cy="390" r="20" fill="url(#gw)"/><circle cx="550" cy="335" r="20" fill="url(#gw)"/><circle cx="735" cy="385" r="20" fill="url(#gw)"/><circle cx="770" cy="360" r="20" fill="url(#gw)"/><circle cx="270" cy="608" r="20" fill="url(#gw)"/><circle cx="515" cy="615" r="20" fill="url(#gw)"/><circle cx="548" cy="585" r="20" fill="url(#gw)"/><circle cx="765" cy="610" r="20" fill="url(#gw)"/><circle cx="300" cy="88" r="16" fill="url(#gm)"/><circle cx="232" cy="138" r="16" fill="url(#gm)"/><circle cx="797" cy="90" r="16" fill="url(#gm)"/><circle cx="728" cy="140" r="16" fill="url(#gm)"/><circle cx="515" cy="362" r="16" fill="url(#gm)"/><circle cx="305" cy="585" r="16" fill="url(#gm)"/><circle cx="237" cy="635" r="16" fill="url(#gm)"/><circle cx="800" cy="587" r="16" fill="url(#gm)"/><circle cx="733" cy="637" r="16" fill="url(#gm)"/><rect x="952" y="607" width="72" height="104" fill="#000" stroke="#a0a0a8" stroke-width="4"/><circle cx="970" cy="625" r="14" fill="url(#gm)"/><line x1="987" y1="625" x2="1014" y2="625" stroke="#999" stroke-width="4"/><circle cx="970" cy="659" r="14" fill="url(#gy)"/><line x1="987" y1="659" x2="1014" y2="659" stroke="#999" stroke-width="4"/><circle cx="970" cy="693" r="14" fill="url(#gw)"/><line x1="987" y1="693" x2="1014" y2="693" stroke="#999" stroke-width="4"/></svg>
<svg class="a" style="left:1147px;top:372px;overflow:hidden;box-shadow:-1px -1px 0 #fafafa, 1px 1px 0 #b4b4b4" width="145" height="100" viewBox="21.0 14.0 1015.0 700.0"><rect x="21.0" y="14.0" width="1015.0" height="700.0" fill="#000"/><g stroke="#b8b8b8" stroke-width="3.5"><line x1="100" y1="30.0" x2="100" y2="125.0"/><line x1="100" y1="100" x2="165.0" y2="100"/></g><rect x="308" y="88" width="500" height="499" fill="none" stroke="#c8c8c8" stroke-width="7"/><polygon points="455,262 605,292 615,445 425,450" fill="#1f9aa8"/><polygon points="455,262 605,292 425,450" fill="#30b3bf" opacity="0.8"/><g stroke="#60d0d8" stroke-width="3" opacity="0.6"><line x1="455" y1="262" x2="615" y2="445"/></g><g stroke="#d08a10" stroke-width="9" stroke-linecap="round"><line x1="455" y1="262" x2="345" y2="205"/><line x1="455" y1="262" x2="515" y2="118"/><line x1="605" y1="292" x2="715" y2="185"/><line x1="605" y1="292" x2="515" y2="118"/><line x1="425" y1="450" x2="280" y2="355"/><line x1="425" y1="450" x2="378" y2="500"/><line x1="615" y1="445" x2="745" y2="385"/><line x1="615" y1="445" x2="660" y2="548"/><line x1="455" y1="262" x2="280" y2="355"/><line x1="605" y1="292" x2="745" y2="385"/><line x1="425" y1="450" x2="520" y2="615"/><line x1="615" y1="445" x2="553" y2="585"/><line x1="425" y1="450" x2="605" y2="292"/><line x1="345" y1="205" x2="272" y2="110"/><line x1="715" y1="185" x2="770" y2="115"/><line x1="378" y1="500" x2="278" y2="608"/><line x1="660" y1="548" x2="772" y2="612"/></g><rect x="240" y="140" width="500" height="495" fill="none" stroke="#c8c8c8" stroke-width="7"/><circle cx="345" cy="205" r="37" fill="url(#gy)"/><circle cx="715" cy="185" r="37" fill="url(#gy)"/><circle cx="378" cy="500" r="37" fill="url(#gy)"/><circle cx="660" cy="548" r="37" fill="url(#gy)"/><circle cx="455" cy="262" r="11" fill="url(#gy)"/><circle cx="605" cy="292" r="11" fill="url(#gy)"/><circle cx="425" cy="450" r="11" fill="url(#gy)"/><circle cx="615" cy="445" r="11" fill="url(#gy)"/><circle cx="272" cy="110" r="20" fill="url(#gw)"/><circle cx="550" cy="92" r="20" fill="url(#gw)"/><circle cx="515" cy="118" r="20" fill="url(#gw)"/><circle cx="770" cy="115" r="20" fill="url(#gw)"/><circle cx="280" cy="355" r="20" fill="url(#gw)"/><circle cx="247" cy="383" r="20" fill="url(#gw)"/><circle cx="490" cy="390" r="20" fill="url(#gw)"/><circle cx="745" cy="385" r="20" fill="url(#gw)"/><circle cx="778" cy="360" r="20" fill="url(#gw)"/><circle cx="278" cy="608" r="20" fill="url(#gw)"/><circle cx="520" cy="615" r="20" fill="url(#gw)"/><circle cx="553" cy="585" r="20" fill="url(#gw)"/><circle cx="772" cy="612" r="20" fill="url(#gw)"/><circle cx="308" cy="88" r="16" fill="url(#gm)"/><circle cx="240" cy="138" r="16" fill="url(#gm)"/><circle cx="803" cy="90" r="16" fill="url(#gm)"/><circle cx="735" cy="140" r="16" fill="url(#gm)"/><circle cx="312" cy="585" r="16" fill="url(#gm)"/><circle cx="245" cy="635" r="16" fill="url(#gm)"/><circle cx="808" cy="587" r="16" fill="url(#gm)"/><circle cx="740" cy="637" r="16" fill="url(#gm)"/><rect x="957" y="607" width="72" height="104" fill="#000" stroke="#a0a0a8" stroke-width="4"/><circle cx="975" cy="625" r="14" fill="url(#gm)"/><line x1="992" y1="625" x2="1019" y2="625" stroke="#999" stroke-width="4"/><circle cx="975" cy="659" r="14" fill="url(#gy)"/><line x1="992" y1="659" x2="1019" y2="659" stroke="#999" stroke-width="4"/><circle cx="975" cy="693" r="14" fill="url(#gw)"/><line x1="992" y1="693" x2="1019" y2="693" stroke="#999" stroke-width="4"/></svg>
<svg class="a" style="left:52px;top:542px;overflow:hidden;box-shadow:-1px -1px 0 #fafafa, 1px 1px 0 #b4b4b4" width="145" height="100" viewBox="14.0 14.0 1015.0 700.0"><rect x="14.0" y="14.0" width="1015.0" height="700.0" fill="#000"/><g stroke="#b8b8b8" stroke-width="3.5"><line x1="95" y1="30.0" x2="95" y2="125.0"/><line x1="95" y1="100" x2="160.0" y2="100"/></g><rect x="300" y="88" width="500" height="499" fill="none" stroke="#c8c8c8" stroke-width="7"/><polygon points="455,262 605,292 615,445 418,450" fill="#1f9aa8"/><polygon points="455,262 605,292 418,450" fill="#30b3bf" opacity="0.8"/><g stroke="#60d0d8" stroke-width="3" opacity="0.6"><line x1="455" y1="262" x2="615" y2="445"/></g><g stroke="#d08a10" stroke-width="9" stroke-linecap="round"><line x1="455" y1="262" x2="345" y2="205"/><line x1="455" y1="262" x2="515" y2="118"/><line x1="605" y1="292" x2="715" y2="185"/><line x1="605" y1="292" x2="515" y2="118"/><line x1="425" y1="450" x2="280" y2="355"/><line x1="425" y1="450" x2="378" y2="500"/><line x1="615" y1="445" x2="745" y2="385"/><line x1="615" y1="445" x2="660" y2="548"/><line x1="455" y1="262" x2="280" y2="355"/><line x1="605" y1="292" x2="745" y2="385"/><line x1="425" y1="450" x2="520" y2="615"/><line x1="615" y1="445" x2="553" y2="585"/><line x1="425" y1="450" x2="605" y2="292"/><line x1="345" y1="205" x2="272" y2="110"/><line x1="715" y1="185" x2="770" y2="115"/><line x1="378" y1="500" x2="278" y2="608"/><line x1="660" y1="548" x2="772" y2="612"/></g><g stroke="#c8800c" stroke-width="5" stroke-linecap="round"><line x1="252" y1="94" x2="339" y2="161"/><line x1="268" y1="85" x2="286" y2="214"/><line x1="287" y1="90" x2="220" y2="177"/><line x1="296" y1="106" x2="167" y2="124"/><line x1="291" y1="125" x2="204" y2="58"/><line x1="275" y1="134" x2="257" y2="5"/><line x1="256" y1="129" x2="323" y2="42"/><line x1="247" y1="113" x2="376" y2="95"/><line x1="493" y1="104" x2="587" y2="162"/><line x1="509" y1="93" x2="539" y2="220"/><line x1="528" y1="96" x2="470" y2="190"/><line x1="539" y1="112" x2="412" y2="142"/><line x1="536" y1="131" x2="442" y2="73"/><line x1="520" y1="142" x2="490" y2="15"/><line x1="501" y1="139" x2="559" y2="45"/><line x1="490" y1="123" x2="617" y2="93"/><line x1="746" y1="106" x2="849" y2="144"/><line x1="759" y1="92" x2="814" y2="210"/><line x1="778" y1="91" x2="740" y2="194"/><line x1="792" y1="104" x2="674" y2="159"/><line x1="793" y1="123" x2="690" y2="85"/><line x1="780" y1="137" x2="725" y2="19"/><line x1="761" y1="138" x2="799" y2="35"/><line x1="747" y1="125" x2="865" y2="70"/><line x1="224" y1="372" x2="323" y2="419"/><line x1="238" y1="359" x2="281" y2="482"/><line x1="257" y1="360" x2="210" y2="459"/><line x1="270" y1="374" x2="147" y2="417"/><line x1="269" y1="393" x2="170" y2="346"/><line x1="255" y1="406" x2="212" y2="283"/><line x1="236" y1="405" x2="283" y2="306"/><line x1="223" y1="391" x2="346" y2="348"/><line x1="723" y1="373" x2="819" y2="425"/><line x1="737" y1="361" x2="774" y2="485"/><line x1="756" y1="363" x2="704" y2="459"/><line x1="768" y1="377" x2="644" y2="414"/><line x1="766" y1="396" x2="670" y2="344"/><line x1="752" y1="408" x2="715" y2="284"/><line x1="733" y1="406" x2="785" y2="310"/><line x1="721" y1="392" x2="845" y2="355"/><line x1="257" y1="593" x2="348" y2="655"/><line x1="273" y1="583" x2="297" y2="711"/><line x1="292" y1="587" x2="230" y2="678"/><line x1="302" y1="603" x2="174" y2="627"/><line x1="298" y1="622" x2="207" y2="560"/><line x1="282" y1="632" x2="258" y2="504"/><line x1="263" y1="628" x2="325" y2="537"/><line x1="253" y1="612" x2="381" y2="588"/><line x1="497" y1="604" x2="596" y2="651"/><line x1="511" y1="591" x2="554" y2="714"/><line x1="530" y1="592" x2="483" y2="691"/><line x1="543" y1="606" x2="420" y2="649"/><line x1="542" y1="625" x2="443" y2="578"/><line x1="528" y1="638" x2="485" y2="515"/><line x1="509" y1="637" x2="556" y2="538"/><line x1="496" y1="623" x2="619" y2="580"/><line x1="749" y1="601" x2="848" y2="648"/><line x1="763" y1="588" x2="806" y2="711"/><line x1="782" y1="589" x2="735" y2="688"/><line x1="795" y1="603" x2="672" y2="646"/><line x1="794" y1="622" x2="695" y2="575"/><line x1="780" y1="635" x2="737" y2="512"/><line x1="761" y1="634" x2="808" y2="535"/><line x1="748" y1="620" x2="871" y2="577"/><line x1="466" y1="381" x2="569" y2="419"/><line x1="479" y1="367" x2="534" y2="485"/><line x1="498" y1="366" x2="460" y2="469"/><line x1="512" y1="379" x2="394" y2="434"/><line x1="513" y1="398" x2="410" y2="360"/><line x1="500" y1="412" x2="445" y2="294"/><line x1="481" y1="413" x2="519" y2="310"/><line x1="467" y1="400" x2="585" y2="345"/></g><rect x="235" y="140" width="500" height="495" fill="none" stroke="#c8c8c8" stroke-width="7"/><circle cx="337" cy="208" r="37" fill="url(#gy)"/><circle cx="707" cy="188" r="37" fill="url(#gy)"/><circle cx="372" cy="500" r="37" fill="url(#gy)"/><circle cx="652" cy="548" r="37" fill="url(#gy)"/><circle cx="455" cy="262" r="11" fill="url(#gy)"/><circle cx="605" cy="292" r="11" fill="url(#gy)"/><circle cx="425" cy="450" r="11" fill="url(#gy)"/><circle cx="615" cy="445" r="11" fill="url(#gy)"/><circle cx="265" cy="110" r="20" fill="url(#gw)"/><circle cx="545" cy="92" r="20" fill="url(#gw)"/><circle cx="510" cy="118" r="20" fill="url(#gw)"/><circle cx="765" cy="115" r="20" fill="url(#gw)"/><circle cx="275" cy="355" r="20" fill="url(#gw)"/><circle cx="240" cy="383" r="20" fill="url(#gw)"/><circle cx="485" cy="388" r="20" fill="url(#gw)"/><circle cx="737" cy="385" r="20" fill="url(#gw)"/><circle cx="772" cy="360" r="20" fill="url(#gw)"/><circle cx="270" cy="608" r="20" fill="url(#gw)"/><circle cx="515" cy="615" r="20" fill="url(#gw)"/><circle cx="548" cy="585" r="20" fill="url(#gw)"/><circle cx="765" cy="612" r="20" fill="url(#gw)"/><circle cx="302" cy="88" r="16" fill="url(#gm)"/><circle cx="232" cy="138" r="16" fill="url(#gm)"/><circle cx="797" cy="92" r="16" fill="url(#gm)"/><circle cx="728" cy="140" r="16" fill="url(#gm)"/><circle cx="305" cy="585" r="16" fill="url(#gm)"/><circle cx="237" cy="635" r="16" fill="url(#gm)"/><circle cx="800" cy="587" r="16" fill="url(#gm)"/><circle cx="733" cy="637" r="16" fill="url(#gm)"/><rect x="952" y="607" width="72" height="104" fill="#000" stroke="#a0a0a8" stroke-width="4"/><circle cx="970" cy="625" r="14" fill="url(#gm)"/><line x1="987" y1="625" x2="1014" y2="625" stroke="#999" stroke-width="4"/><circle cx="970" cy="659" r="14" fill="url(#gy)"/><line x1="987" y1="659" x2="1014" y2="659" stroke="#999" stroke-width="4"/><circle cx="970" cy="693" r="14" fill="url(#gw)"/><line x1="987" y1="693" x2="1014" y2="693" stroke="#999" stroke-width="4"/></svg>
<svg class="a" style="left:52px;top:372px;overflow:hidden;box-shadow:-1px -1px 0 #fafafa, 1px 1px 0 #b4b4b4" width="145" height="100" viewBox="14.0 14.0 1015.0 700.0"><rect x="14.0" y="14.0" width="1015.0" height="700.0" fill="#000"/><g stroke="#b8b8b8" stroke-width="3.5"><line x1="95" y1="30.0" x2="95" y2="125.0"/><line x1="95" y1="100" x2="160.0" y2="100"/></g><rect x="360" y="160" width="352" height="360" fill="none" stroke="#c8c8c8" stroke-width="7"/><g stroke="#d08a10" stroke-width="9" stroke-linecap="round"><line x1="505" y1="182" x2="463" y2="285"/><line x1="530" y1="165" x2="567" y2="310"/><line x1="338" y1="352" x2="463" y2="285"/><line x1="312" y1="373" x2="440" y2="420"/><line x1="488" y1="375" x2="440" y2="420"/><line x1="535" y1="340" x2="567" y2="310"/><line x1="665" y1="375" x2="577" y2="415"/><line x1="692" y1="355" x2="567" y2="310"/><line x1="510" y1="535" x2="440" y2="420"/><line x1="535" y1="518" x2="577" y2="415"/><line x1="338" y1="535" x2="433" y2="565"/><line x1="690" y1="538" x2="650" y2="590"/><line x1="310" y1="198" x2="357" y2="140"/><line x1="310" y1="198" x2="253" y2="135"/><line x1="310" y1="198" x2="295" y2="232"/><line x1="662" y1="200" x2="710" y2="140"/><line x1="662" y1="200" x2="605" y2="135"/><line x1="662" y1="200" x2="648" y2="232"/><line x1="310" y1="552" x2="255" y2="490"/><line x1="310" y1="552" x2="297" y2="588"/><line x1="665" y1="552" x2="713" y2="495"/><line x1="665" y1="552" x2="650" y2="590"/><line x1="505" y1="182" x2="338" y2="352"/><line x1="530" y1="165" x2="692" y2="355"/><line x1="312" y1="373" x2="510" y2="535"/><line x1="665" y1="375" x2="535" y2="518"/></g><rect x="310" y="198" width="355" height="357" fill="none" stroke="#c8c8c8" stroke-width="7"/><circle cx="300" cy="100" r="30" fill="url(#gy)"/><circle cx="405" cy="103" r="30" fill="url(#gy)"/><circle cx="253" cy="135" r="30" fill="url(#gy)"/><circle cx="357" cy="140" r="30" fill="url(#gy)"/><circle cx="295" cy="232" r="30" fill="url(#gy)"/><circle cx="383" cy="248" r="30" fill="url(#gy)"/><circle cx="245" cy="268" r="30" fill="url(#gy)"/><circle cx="430" cy="210" r="30" fill="url(#gy)"/><circle cx="655" cy="100" r="30" fill="url(#gy)"/><circle cx="758" cy="103" r="30" fill="url(#gy)"/><circle cx="605" cy="135" r="30" fill="url(#gy)"/><circle cx="710" cy="140" r="30" fill="url(#gy)"/><circle cx="783" cy="215" r="30" fill="url(#gy)"/><circle cx="648" cy="232" r="30" fill="url(#gy)"/><circle cx="735" cy="250" r="30" fill="url(#gy)"/><circle cx="600" cy="270" r="30" fill="url(#gy)"/><circle cx="463" cy="285" r="30" fill="url(#gy)"/><circle cx="567" cy="310" r="30" fill="url(#gy)"/><circle cx="440" cy="420" r="30" fill="url(#gy)"/><circle cx="577" cy="415" r="30" fill="url(#gy)"/><circle cx="305" cy="455" r="30" fill="url(#gy)"/><circle cx="255" cy="490" r="30" fill="url(#gy)"/><circle cx="408" cy="457" r="30" fill="url(#gy)"/><circle cx="360" cy="492" r="30" fill="url(#gy)"/><circle cx="433" cy="565" r="30" fill="url(#gy)"/><circle cx="297" cy="588" r="30" fill="url(#gy)"/><circle cx="385" cy="603" r="30" fill="url(#gy)"/><circle cx="250" cy="620" r="30" fill="url(#gy)"/><circle cx="655" cy="455" r="30" fill="url(#gy)"/><circle cx="760" cy="458" r="30" fill="url(#gy)"/><circle cx="608" cy="490" r="30" fill="url(#gy)"/><circle cx="713" cy="495" r="30" fill="url(#gy)"/><circle cx="785" cy="567" r="30" fill="url(#gy)"/><circle cx="650" cy="590" r="30" fill="url(#gy)"/><circle cx="738" cy="605" r="30" fill="url(#gy)"/><circle cx="603" cy="625" r="30" fill="url(#gy)"/><circle cx="335" cy="180" r="17" fill="url(#gw)"/><circle cx="505" cy="182" r="17" fill="url(#gw)"/><circle cx="530" cy="165" r="17" fill="url(#gw)"/><circle cx="685" cy="182" r="17" fill="url(#gw)"/><circle cx="312" cy="373" r="17" fill="url(#gw)"/><circle cx="338" cy="352" r="17" fill="url(#gw)"/><circle cx="488" cy="375" r="17" fill="url(#gw)"/><circle cx="535" cy="340" r="17" fill="url(#gw)"/><circle cx="665" cy="375" r="17" fill="url(#gw)"/><circle cx="692" cy="355" r="17" fill="url(#gw)"/><circle cx="338" cy="535" r="17" fill="url(#gw)"/><circle cx="510" cy="535" r="17" fill="url(#gw)"/><circle cx="535" cy="518" r="17" fill="url(#gw)"/><circle cx="690" cy="538" r="17" fill="url(#gw)"/><circle cx="310" cy="198" r="14" fill="url(#gm)"/><circle cx="662" cy="200" r="14" fill="url(#gm)"/><circle cx="512" cy="357" r="14" fill="url(#gm)"/><circle cx="310" cy="552" r="14" fill="url(#gm)"/><circle cx="665" cy="552" r="14" fill="url(#gm)"/><rect x="952" y="607" width="72" height="104" fill="#000" stroke="#a0a0a8" stroke-width="4"/><circle cx="970" cy="625" r="14" fill="url(#gm)"/><line x1="987" y1="625" x2="1014" y2="625" stroke="#999" stroke-width="4"/><circle cx="970" cy="659" r="14" fill="url(#gy)"/><line x1="987" y1="659" x2="1014" y2="659" stroke="#999" stroke-width="4"/><circle cx="970" cy="693" r="14" fill="url(#gw)"/><line x1="987" y1="693" x2="1014" y2="693" stroke="#999" stroke-width="4"/></svg>
<svg class="a" style="left:417px;top:372px;overflow:hidden;box-shadow:-1px -1px 0 #fafafa, 1px 1px 0 #b4b4b4" width="145" height="100" viewBox="14.0 14.0 1015.0 700.0"><rect x="14.0" y="14.0" width="1015.0" height="700.0" fill="#000"/><g stroke="#b8b8b8" stroke-width="3.5"><line x1="95" y1="30.0" x2="95" y2="125.0"/><line x1="95" y1="100" x2="160.0" y2="100"/></g><rect x="360" y="160" width="352" height="360" fill="none" stroke="#c8c8c8" stroke-width="7"/><g stroke="#d08a10" stroke-width="9" stroke-linecap="round"><line x1="505" y1="182" x2="463" y2="285"/><line x1="530" y1="165" x2="567" y2="310"/><line x1="338" y1="352" x2="463" y2="285"/><line x1="312" y1="373" x2="440" y2="420"/><line x1="488" y1="375" x2="440" y2="420"/><line x1="535" y1="340" x2="567" y2="310"/><line x1="665" y1="375" x2="577" y2="415"/><line x1="692" y1="355" x2="567" y2="310"/><line x1="510" y1="535" x2="440" y2="420"/><line x1="535" y1="518" x2="577" y2="415"/><line x1="338" y1="535" x2="433" y2="565"/><line x1="690" y1="538" x2="650" y2="590"/><line x1="310" y1="198" x2="357" y2="140"/><line x1="310" y1="198" x2="253" y2="135"/><line x1="310" y1="198" x2="295" y2="232"/><line x1="662" y1="200" x2="710" y2="140"/><line x1="662" y1="200" x2="605" y2="135"/><line x1="662" y1="200" x2="648" y2="232"/><line x1="310" y1="552" x2="255" y2="490"/><line x1="310" y1="552" x2="297" y2="588"/><line x1="665" y1="552" x2="713" y2="495"/><line x1="665" y1="552" x2="650" y2="590"/><line x1="505" y1="182" x2="338" y2="352"/><line x1="530" y1="165" x2="692" y2="355"/><line x1="312" y1="373" x2="510" y2="535"/><line x1="665" y1="375" x2="535" y2="518"/></g><rect x="310" y="198" width="355" height="357" fill="none" stroke="#c8c8c8" stroke-width="7"/><polygon points="250,135 360,140 380,250 245,270" fill="#a86e8c"/><polygon points="250,135 360,140 315,210" fill="#c890b0"/><circle cx="295" cy="235" r="28" fill="#c08060" opacity="0.7"/><circle cx="250" cy="135" r="9" fill="#ffff00"/><circle cx="360" cy="140" r="9" fill="#ffff00"/><circle cx="380" cy="250" r="9" fill="#ffff00"/><circle cx="245" cy="270" r="9" fill="#ffff00"/><circle cx="310" cy="200" r="11" fill="#ff00ff"/><polygon points="605,135 715,140 735,250 600,270" fill="#a86e8c"/><polygon points="605,135 715,140 670,210" fill="#c890b0"/><circle cx="650" cy="235" r="28" fill="#c08060" opacity="0.7"/><circle cx="605" cy="135" r="9" fill="#ffff00"/><circle cx="715" cy="140" r="9" fill="#ffff00"/><circle cx="735" cy="250" r="9" fill="#ffff00"/><circle cx="600" cy="270" r="9" fill="#ffff00"/><circle cx="665" cy="200" r="11" fill="#ff00ff"/><polygon points="250,490 360,495 380,605 245,625" fill="#a86e8c"/><polygon points="250,490 360,495 315,565" fill="#c890b0"/><circle cx="295" cy="590" r="28" fill="#c08060" opacity="0.7"/><circle cx="250" cy="490" r="9" fill="#ffff00"/><circle cx="360" cy="495" r="9" fill="#ffff00"/><circle cx="380" cy="605" r="9" fill="#ffff00"/><circle cx="245" cy="625" r="9" fill="#ffff00"/><circle cx="310" cy="555" r="11" fill="#ff00ff"/><polygon points="605,490 715,495 735,605 600,625" fill="#a86e8c"/><polygon points="605,490 715,495 670,565" fill="#c890b0"/><circle cx="650" cy="590" r="28" fill="#c08060" opacity="0.7"/><circle cx="605" cy="490" r="9" fill="#ffff00"/><circle cx="715" cy="495" r="9" fill="#ffff00"/><circle cx="735" cy="605" r="9" fill="#ffff00"/><circle cx="600" cy="625" r="9" fill="#ffff00"/><circle cx="665" cy="555" r="11" fill="#ff00ff"/><circle cx="300" cy="100" r="30" fill="url(#gy)"/><circle cx="405" cy="103" r="30" fill="url(#gy)"/><circle cx="430" cy="210" r="30" fill="url(#gy)"/><circle cx="655" cy="100" r="30" fill="url(#gy)"/><circle cx="758" cy="103" r="30" fill="url(#gy)"/><circle cx="783" cy="215" r="30" fill="url(#gy)"/><circle cx="463" cy="285" r="30" fill="url(#gy)"/><circle cx="567" cy="310" r="30" fill="url(#gy)"/><circle cx="440" cy="420" r="30" fill="url(#gy)"/><circle cx="577" cy="415" r="30" fill="url(#gy)"/><circle cx="305" cy="455" r="30" fill="url(#gy)"/><circle cx="408" cy="457" r="30" fill="url(#gy)"/><circle cx="433" cy="565" r="30" fill="url(#gy)"/><circle cx="655" cy="455" r="30" fill="url(#gy)"/><circle cx="760" cy="458" r="30" fill="url(#gy)"/><circle cx="785" cy="567" r="30" fill="url(#gy)"/><circle cx="335" cy="180" r="17" fill="url(#gw)"/><circle cx="505" cy="182" r="17" fill="url(#gw)"/><circle cx="530" cy="165" r="17" fill="url(#gw)"/><circle cx="685" cy="182" r="17" fill="url(#gw)"/><circle cx="312" cy="373" r="17" fill="url(#gw)"/><circle cx="338" cy="352" r="17" fill="url(#gw)"/><circle cx="488" cy="375" r="17" fill="url(#gw)"/><circle cx="535" cy="340" r="17" fill="url(#gw)"/><circle cx="665" cy="375" r="17" fill="url(#gw)"/><circle cx="692" cy="355" r="17" fill="url(#gw)"/><circle cx="338" cy="535" r="17" fill="url(#gw)"/><circle cx="510" cy="535" r="17" fill="url(#gw)"/><circle cx="535" cy="518" r="17" fill="url(#gw)"/><circle cx="690" cy="538" r="17" fill="url(#gw)"/><circle cx="512" cy="357" r="14" fill="url(#gm)"/><rect x="952" y="607" width="72" height="104" fill="#000" stroke="#a0a0a8" stroke-width="4"/><circle cx="970" cy="625" r="14" fill="url(#gm)"/><line x1="987" y1="625" x2="1014" y2="625" stroke="#999" stroke-width="4"/><circle cx="970" cy="659" r="14" fill="url(#gy)"/><line x1="987" y1="659" x2="1014" y2="659" stroke="#999" stroke-width="4"/><circle cx="970" cy="693" r="14" fill="url(#gw)"/><line x1="987" y1="693" x2="1014" y2="693" stroke="#999" stroke-width="4"/></svg>
<svg class="a" style="left:782px;top:372px;overflow:hidden;box-shadow:-1px -1px 0 #fafafa, 1px 1px 0 #b4b4b4" width="145" height="100" viewBox="14.0 14.0 1015.0 700.0"><rect x="14.0" y="14.0" width="1015.0" height="700.0" fill="#000"/><g stroke="#b8b8b8" stroke-width="3.5"><line x1="95" y1="30.0" x2="95" y2="125.0"/><line x1="95" y1="100" x2="160.0" y2="100"/></g><rect x="350" y="178" width="355" height="357" fill="none" stroke="#c8c8c8" stroke-width="7"/><g stroke="#d08a10" stroke-width="9" stroke-linecap="round"><line x1="495" y1="197" x2="453" y2="300"/><line x1="520" y1="180" x2="557" y2="325"/><line x1="328" y1="367" x2="453" y2="300"/><line x1="302" y1="388" x2="430" y2="435"/><line x1="478" y1="390" x2="430" y2="435"/><line x1="525" y1="355" x2="557" y2="325"/><line x1="655" y1="390" x2="567" y2="430"/><line x1="682" y1="370" x2="557" y2="325"/><line x1="500" y1="550" x2="430" y2="435"/><line x1="525" y1="533" x2="567" y2="430"/><line x1="328" y1="550" x2="423" y2="580"/><line x1="680" y1="553" x2="640" y2="605"/><line x1="300" y1="213" x2="347" y2="155"/><line x1="300" y1="213" x2="243" y2="150"/><line x1="300" y1="213" x2="285" y2="247"/><line x1="652" y1="215" x2="700" y2="155"/><line x1="652" y1="215" x2="595" y2="150"/><line x1="652" y1="215" x2="638" y2="247"/><line x1="300" y1="567" x2="245" y2="505"/><line x1="300" y1="567" x2="287" y2="603"/><line x1="655" y1="567" x2="703" y2="510"/><line x1="655" y1="567" x2="640" y2="605"/><line x1="495" y1="197" x2="328" y2="367"/><line x1="520" y1="180" x2="682" y2="370"/><line x1="302" y1="388" x2="500" y2="550"/><line x1="655" y1="390" x2="525" y2="533"/></g><g stroke="#c8800c" stroke-width="6" stroke-linecap="round"><line x1="290" y1="115" x2="217" y2="132"/><line x1="290" y1="115" x2="311" y2="43"/><line x1="395" y1="120" x2="343" y2="65"/><line x1="395" y1="120" x2="467" y2="102"/><line x1="420" y1="225" x2="383" y2="159"/><line x1="420" y1="225" x2="494" y2="226"/><line x1="645" y1="115" x2="718" y2="127"/><line x1="645" y1="115" x2="596" y2="172"/><line x1="750" y1="120" x2="775" y2="190"/><line x1="750" y1="120" x2="676" y2="106"/><line x1="775" y1="230" x2="782" y2="304"/><line x1="775" y1="230" x2="706" y2="199"/><line x1="455" y1="303" x2="442" y2="228"/><line x1="455" y1="303" x2="525" y2="329"/><line x1="560" y1="325" x2="618" y2="277"/><line x1="560" y1="325" x2="571" y2="399"/><line x1="430" y1="435" x2="399" y2="366"/><line x1="430" y1="435" x2="504" y2="443"/><line x1="567" y1="432" x2="628" y2="388"/><line x1="567" y1="432" x2="573" y2="506"/><line x1="297" y1="467" x2="223" y2="479"/><line x1="297" y1="467" x2="323" y2="396"/><line x1="398" y1="472" x2="347" y2="416"/><line x1="398" y1="472" x2="471" y2="456"/><line x1="425" y1="583" x2="391" y2="515"/><line x1="425" y1="583" x2="499" y2="588"/><line x1="648" y1="467" x2="721" y2="481"/><line x1="648" y1="467" x2="598" y2="523"/><line x1="752" y1="475" x2="776" y2="545"/><line x1="752" y1="475" x2="678" y2="460"/><line x1="778" y1="583" x2="783" y2="657"/><line x1="778" y1="583" x2="710" y2="550"/></g><g stroke="#d08a10" stroke-width="9" stroke-linecap="round"><line x1="497" y1="200" x2="455" y2="303"/><line x1="522" y1="180" x2="560" y2="325"/><line x1="330" y1="368" x2="455" y2="303"/><line x1="305" y1="388" x2="430" y2="435"/><line x1="480" y1="392" x2="430" y2="435"/><line x1="528" y1="352" x2="560" y2="325"/><line x1="658" y1="388" x2="567" y2="432"/><line x1="682" y1="372" x2="560" y2="325"/><line x1="500" y1="553" x2="430" y2="435"/><line x1="525" y1="535" x2="567" y2="432"/><line x1="290" y1="115" x2="330" y2="40"/><line x1="395" y1="120" x2="370" y2="40"/><line x1="645" y1="115" x2="690" y2="40"/><line x1="750" y1="120" x2="720" y2="40"/><line x1="290" y1="115" x2="205" y2="160"/><line x1="750" y1="120" x2="840" y2="165"/><line x1="775" y1="230" x2="860" y2="185"/><line x1="775" y1="230" x2="725" y2="315"/><line x1="420" y1="225" x2="510" y2="170"/><line x1="420" y1="225" x2="375" y2="310"/><line x1="297" y1="467" x2="215" y2="515"/><line x1="398" y1="472" x2="450" y2="400"/><line x1="425" y1="583" x2="380" y2="665"/><line x1="752" y1="475" x2="840" y2="520"/><line x1="778" y1="583" x2="865" y2="540"/><line x1="778" y1="583" x2="730" y2="665"/><line x1="648" y1="467" x2="600" y2="400"/></g><rect x="300" y="215" width="355" height="355" fill="none" stroke="#c8c8c8" stroke-width="7"/><polygon points="240,150 350,155 370,265 235,285" fill="#a86e8c"/><polygon points="240,150 350,155 305,225" fill="#c890b0"/><circle cx="285" cy="250" r="28" fill="#c08060" opacity="0.7"/><circle cx="240" cy="150" r="9" fill="#ffff00"/><circle cx="350" cy="155" r="9" fill="#ffff00"/><circle cx="370" cy="265" r="9" fill="#ffff00"/><circle cx="235" cy="285" r="9" fill="#ffff00"/><circle cx="300" cy="215" r="11" fill="#ff00ff"/><polygon points="595,150 705,155 725,265 590,285" fill="#a86e8c"/><polygon points="595,150 705,155 660,225" fill="#c890b0"/><circle cx="640" cy="250" r="28" fill="#c08060" opacity="0.7"/><circle cx="595" cy="150" r="9" fill="#ffff00"/><circle cx="705" cy="155" r="9" fill="#ffff00"/><circle cx="725" cy="265" r="9" fill="#ffff00"/><circle cx="590" cy="285" r="9" fill="#ffff00"/><circle cx="655" cy="215" r="11" fill="#ff00ff"/><polygon points="240,505 350,510 370,620 235,640" fill="#a86e8c"/><polygon points="240,505 350,510 305,580" fill="#c890b0"/><circle cx="285" cy="605" r="28" fill="#c08060" opacity="0.7"/><circle cx="240" cy="505" r="9" fill="#ffff00"/><circle cx="350" cy="510" r="9" fill="#ffff00"/><circle cx="370" cy="620" r="9" fill="#ffff00"/><circle cx="235" cy="640" r="9" fill="#ffff00"/><circle cx="300" cy="570" r="11" fill="#ff00ff"/><polygon points="595,505 705,510 725,620 590,640" fill="#a86e8c"/><polygon points="595,505 705,510 660,580" fill="#c890b0"/><circle cx="640" cy="605" r="28" fill="#c08060" opacity="0.7"/><circle cx="595" cy="505" r="9" fill="#ffff00"/><circle cx="705" cy="510" r="9" fill="#ffff00"/><circle cx="725" cy="620" r="9" fill="#ffff00"/><circle cx="590" cy="640" r="9" fill="#ffff00"/><circle cx="655" cy="570" r="11" fill="#ff00ff"/><circle cx="290" cy="115" r="30" fill="url(#gy)"/><circle cx="395" cy="120" r="30" fill="url(#gy)"/><circle cx="420" cy="225" r="30" fill="url(#gy)"/><circle cx="645" cy="115" r="30" fill="url(#gy)"/><circle cx="750" cy="120" r="30" fill="url(#gy)"/><circle cx="775" cy="230" r="30" fill="url(#gy)"/><circle cx="455" cy="303" r="30" fill="url(#gy)"/><circle cx="560" cy="325" r="30" fill="url(#gy)"/><circle cx="430" cy="435" r="30" fill="url(#gy)"/><circle cx="567" cy="432" r="30" fill="url(#gy)"/><circle cx="297" cy="467" r="30" fill="url(#gy)"/><circle cx="398" cy="472" r="30" fill="url(#gy)"/><circle cx="425" cy="583" r="30" fill="url(#gy)"/><circle cx="648" cy="467" r="30" fill="url(#gy)"/><circle cx="752" cy="475" r="30" fill="url(#gy)"/><circle cx="778" cy="583" r="30" fill="url(#gy)"/><circle cx="497" cy="200" r="17" fill="url(#gw)"/><circle cx="522" cy="180" r="17" fill="url(#gw)"/><circle cx="305" cy="388" r="17" fill="url(#gw)"/><circle cx="330" cy="368" r="17" fill="url(#gw)"/><circle cx="480" cy="392" r="17" fill="url(#gw)"/><circle cx="528" cy="352" r="17" fill="url(#gw)"/><circle cx="658" cy="388" r="17" fill="url(#gw)"/><circle cx="682" cy="372" r="17" fill="url(#gw)"/><circle cx="500" cy="553" r="17" fill="url(#gw)"/><circle cx="525" cy="535" r="17" fill="url(#gw)"/><circle cx="505" cy="375" r="14" fill="url(#gm)"/><rect x="952" y="607" width="72" height="104" fill="#000" stroke="#a0a0a8" stroke-width="4"/><circle cx="970" cy="625" r="14" fill="url(#gm)"/><line x1="987" y1="625" x2="1014" y2="625" stroke="#999" stroke-width="4"/><circle cx="970" cy="659" r="14" fill="url(#gy)"/><line x1="987" y1="659" x2="1014" y2="659" stroke="#999" stroke-width="4"/><circle cx="970" cy="693" r="14" fill="url(#gw)"/><line x1="987" y1="693" x2="1014" y2="693" stroke="#999" stroke-width="4"/></svg>
<svg class="a" style="left:417px;top:542px;overflow:hidden;box-shadow:-1px -1px 0 #fafafa, 1px 1px 0 #b4b4b4" width="145" height="100" viewBox="14.0 14.0 1015.0 700.0"><rect x="14.0" y="14.0" width="1015.0" height="700.0" fill="#000"/><g stroke="#b8b8b8" stroke-width="3.5"><line x1="95" y1="30.0" x2="95" y2="125.0"/><line x1="95" y1="100" x2="160.0" y2="100"/></g><rect x="260" y="80" width="550" height="510" fill="none" stroke="#d0d0d0" stroke-width="6"/><line x1="535" y1="80" x2="535" y2="590" stroke="#d0d0d0" stroke-width="6"/><line x1="260" y1="335" x2="810" y2="335" stroke="#d0d0d0" stroke-width="6"/><rect x="225" y="130" width="550" height="510" fill="none" stroke="#d0d0d0" stroke-width="6"/><line x1="500" y1="130" x2="500" y2="640" stroke="#d0d0d0" stroke-width="6"/><line x1="225" y1="385" x2="775" y2="385" stroke="#d0d0d0" stroke-width="6"/><line x1="225" y1="130" x2="293" y2="78" stroke="#d0d0d0" stroke-width="5"/><line x1="225" y1="388" x2="293" y2="336" stroke="#d0d0d0" stroke-width="5"/><line x1="225" y1="645" x2="293" y2="593" stroke="#d0d0d0" stroke-width="5"/><line x1="483" y1="130" x2="551" y2="78" stroke="#d0d0d0" stroke-width="5"/><line x1="483" y1="388" x2="551" y2="336" stroke="#d0d0d0" stroke-width="5"/><line x1="483" y1="645" x2="551" y2="593" stroke="#d0d0d0" stroke-width="5"/><line x1="740" y1="130" x2="808" y2="78" stroke="#d0d0d0" stroke-width="5"/><line x1="740" y1="388" x2="808" y2="336" stroke="#d0d0d0" stroke-width="5"/><line x1="740" y1="645" x2="808" y2="593" stroke="#d0d0d0" stroke-width="5"/><g stroke="#c07810" stroke-width="4" stroke-linecap="round"><line x1="310" y1="140" x2="275" y2="90"/><line x1="310" y1="140" x2="258" y2="105"/><line x1="275" y1="165" x2="258" y2="180"/><line x1="275" y1="165" x2="240" y2="125"/><line x1="370" y1="170" x2="385" y2="105"/><line x1="370" y1="170" x2="370" y2="243"/><line x1="335" y1="195" x2="300" y2="240"/><line x1="335" y1="195" x2="370" y2="243"/><line x1="470" y1="155" x2="483" y2="133"/><line x1="470" y1="155" x2="470" y2="120"/><line x1="445" y1="185" x2="430" y2="240"/><line x1="445" y1="185" x2="483" y2="133"/><line x1="410" y1="210" x2="430" y2="240"/><line x1="410" y1="210" x2="370" y2="243"/><line x1="350" y1="265" x2="370" y2="243"/><line x1="350" y1="265" x2="380" y2="300"/><line x1="455" y1="262" x2="430" y2="240"/><line x1="455" y1="262" x2="380" y2="300"/><line x1="420" y1="290" x2="380" y2="300"/><line x1="420" y1="290" x2="430" y2="240"/><line x1="325" y1="290" x2="300" y2="240"/><line x1="325" y1="290" x2="380" y2="300"/><line x1="295" y1="320" x2="300" y2="240"/><line x1="295" y1="320" x2="380" y2="300"/><line x1="475" y1="318" x2="500" y2="345"/><line x1="475" y1="318" x2="470" y2="375"/><line x1="440" y1="345" x2="470" y2="375"/><line x1="440" y1="345" x2="500" y2="345"/><line x1="310" y1="395" x2="258" y2="435"/><line x1="310" y1="395" x2="375" y2="375"/><line x1="275" y1="420" x2="258" y2="435"/><line x1="275" y1="420" x2="225" y2="388"/><line x1="370" y1="425" x2="375" y2="375"/><line x1="370" y1="425" x2="372" y2="505"/><line x1="335" y1="450" x2="300" y2="495"/><line x1="335" y1="450" x2="372" y2="505"/><line x1="470" y1="410" x2="483" y2="390"/><line x1="470" y1="410" x2="470" y2="375"/><line x1="445" y1="440" x2="430" y2="495"/><line x1="445" y1="440" x2="483" y2="390"/><line x1="410" y1="465" x2="430" y2="495"/><line x1="410" y1="465" x2="372" y2="505"/><line x1="350" y1="520" x2="372" y2="505"/><line x1="350" y1="520" x2="380" y2="555"/><line x1="455" y1="517" x2="430" y2="495"/><line x1="455" y1="517" x2="372" y2="505"/><line x1="420" y1="545" x2="380" y2="555"/><line x1="420" y1="545" x2="430" y2="495"/><line x1="325" y1="545" x2="300" y2="495"/><line x1="325" y1="545" x2="380" y2="555"/><line x1="295" y1="575" x2="300" y2="495"/><line x1="295" y1="575" x2="380" y2="555"/><line x1="475" y1="573" x2="500" y2="630"/><line x1="475" y1="573" x2="483" y2="648"/><line x1="440" y1="600" x2="483" y2="648"/><line x1="440" y1="600" x2="500" y2="630"/><line x1="570" y1="140" x2="535" y2="95"/><line x1="570" y1="140" x2="517" y2="105"/><line x1="535" y1="165" x2="518" y2="180"/><line x1="535" y1="165" x2="483" y2="133"/><line x1="630" y1="170" x2="640" y2="100"/><line x1="630" y1="170" x2="630" y2="250"/><line x1="595" y1="195" x2="560" y2="240"/><line x1="595" y1="195" x2="630" y2="250"/><line x1="730" y1="155" x2="740" y2="135"/><line x1="730" y1="155" x2="730" y2="120"/><line x1="705" y1="185" x2="690" y2="240"/><line x1="705" y1="185" x2="740" y2="135"/><line x1="670" y1="210" x2="690" y2="240"/><line x1="670" y1="210" x2="630" y2="250"/><line x1="610" y1="265" x2="630" y2="250"/><line x1="610" y1="265" x2="640" y2="300"/><line x1="715" y1="262" x2="690" y2="240"/><line x1="715" y1="262" x2="760" y2="240"/><line x1="680" y1="290" x2="640" y2="300"/><line x1="680" y1="290" x2="690" y2="240"/><line x1="585" y1="290" x2="560" y2="240"/><line x1="585" y1="290" x2="640" y2="300"/><line x1="555" y1="320" x2="500" y2="345"/><line x1="555" y1="320" x2="560" y2="240"/><line x1="735" y1="318" x2="730" y2="375"/><line x1="735" y1="318" x2="773" y2="365"/><line x1="700" y1="345" x2="730" y2="375"/><line x1="700" y1="345" x2="740" y2="392"/><line x1="570" y1="395" x2="518" y2="435"/><line x1="570" y1="395" x2="500" y2="345"/><line x1="535" y1="420" x2="518" y2="435"/><line x1="535" y1="420" x2="483" y2="390"/><line x1="630" y1="425" x2="630" y2="508"/><line x1="630" y1="425" x2="690" y2="495"/><line x1="595" y1="450" x2="560" y2="495"/><line x1="595" y1="450" x2="630" y2="508"/><line x1="730" y1="410" x2="740" y2="392"/><line x1="730" y1="410" x2="730" y2="375"/><line x1="705" y1="440" x2="690" y2="495"/><line x1="705" y1="440" x2="740" y2="392"/><line x1="670" y1="465" x2="690" y2="495"/><line x1="670" y1="465" x2="630" y2="508"/><line x1="610" y1="520" x2="630" y2="508"/><line x1="610" y1="520" x2="640" y2="555"/><line x1="715" y1="517" x2="690" y2="495"/><line x1="715" y1="517" x2="640" y2="555"/><line x1="680" y1="545" x2="640" y2="555"/><line x1="680" y1="545" x2="690" y2="495"/><line x1="585" y1="545" x2="560" y2="495"/><line x1="585" y1="545" x2="640" y2="555"/><line x1="555" y1="575" x2="500" y2="630"/><line x1="555" y1="575" x2="560" y2="495"/><line x1="735" y1="573" x2="790" y2="600"/><line x1="735" y1="573" x2="760" y2="630"/><line x1="700" y1="600" x2="740" y2="650"/><line x1="700" y1="600" x2="760" y2="630"/><line x1="310" y1="140" x2="370" y2="170"/><line x1="275" y1="165" x2="335" y2="195"/><line x1="370" y1="170" x2="410" y2="210"/><line x1="410" y1="210" x2="455" y2="262"/><line x1="455" y1="262" x2="475" y2="318"/><line x1="420" y1="290" x2="440" y2="345"/><line x1="310" y1="395" x2="370" y2="425"/><line x1="275" y1="420" x2="335" y2="450"/><line x1="370" y1="425" x2="410" y2="465"/><line x1="410" y1="465" x2="455" y2="517"/><line x1="455" y1="517" x2="475" y2="573"/><line x1="420" y1="545" x2="440" y2="600"/><line x1="570" y1="140" x2="630" y2="170"/><line x1="535" y1="165" x2="595" y2="195"/><line x1="630" y1="170" x2="670" y2="210"/><line x1="670" y1="210" x2="715" y2="262"/><line x1="715" y1="262" x2="735" y2="318"/><line x1="680" y1="290" x2="700" y2="345"/><line x1="570" y1="395" x2="630" y2="425"/><line x1="535" y1="420" x2="595" y2="450"/><line x1="630" y1="425" x2="670" y2="465"/><line x1="670" y1="465" x2="715" y2="517"/><line x1="715" y1="517" x2="735" y2="573"/><line x1="680" y1="545" x2="700" y2="600"/></g><circle cx="310" cy="140" r="18" fill="url(#gy)"/><circle cx="275" cy="165" r="18" fill="url(#gy)"/><circle cx="370" cy="170" r="18" fill="url(#gy)"/><circle cx="335" cy="195" r="18" fill="url(#gy)"/><circle cx="470" cy="155" r="18" fill="url(#gy)"/><circle cx="445" cy="185" r="18" fill="url(#gy)"/><circle cx="410" cy="210" r="18" fill="url(#gy)"/><circle cx="350" cy="265" r="18" fill="url(#gy)"/><circle cx="455" cy="262" r="18" fill="url(#gy)"/><circle cx="420" cy="290" r="18" fill="url(#gy)"/><circle cx="325" cy="290" r="18" fill="url(#gy)"/><circle cx="295" cy="320" r="18" fill="url(#gy)"/><circle cx="475" cy="318" r="18" fill="url(#gy)"/><circle cx="440" cy="345" r="18" fill="url(#gy)"/><circle cx="310" cy="395" r="18" fill="url(#gy)"/><circle cx="275" cy="420" r="18" fill="url(#gy)"/><circle cx="370" cy="425" r="18" fill="url(#gy)"/><circle cx="335" cy="450" r="18" fill="url(#gy)"/><circle cx="470" cy="410" r="18" fill="url(#gy)"/><circle cx="445" cy="440" r="18" fill="url(#gy)"/><circle cx="410" cy="465" r="18" fill="url(#gy)"/><circle cx="350" cy="520" r="18" fill="url(#gy)"/><circle cx="455" cy="517" r="18" fill="url(#gy)"/><circle cx="420" cy="545" r="18" fill="url(#gy)"/><circle cx="325" cy="545" r="18" fill="url(#gy)"/><circle cx="295" cy="575" r="18" fill="url(#gy)"/><circle cx="475" cy="573" r="18" fill="url(#gy)"/><circle cx="440" cy="600" r="18" fill="url(#gy)"/><circle cx="570" cy="140" r="18" fill="url(#gy)"/><circle cx="535" cy="165" r="18" fill="url(#gy)"/><circle cx="630" cy="170" r="18" fill="url(#gy)"/><circle cx="595" cy="195" r="18" fill="url(#gy)"/><circle cx="730" cy="155" r="18" fill="url(#gy)"/><circle cx="705" cy="185" r="18" fill="url(#gy)"/><circle cx="670" cy="210" r="18" fill="url(#gy)"/><circle cx="610" cy="265" r="18" fill="url(#gy)"/><circle cx="715" cy="262" r="18" fill="url(#gy)"/><circle cx="680" cy="290" r="18" fill="url(#gy)"/><circle cx="585" cy="290" r="18" fill="url(#gy)"/><circle cx="555" cy="320" r="18" fill="url(#gy)"/><circle cx="735" cy="318" r="18" fill="url(#gy)"/><circle cx="700" cy="345" r="18" fill="url(#gy)"/><circle cx="570" cy="395" r="18" fill="url(#gy)"/><circle cx="535" cy="420" r="18" fill="url(#gy)"/><circle cx="630" cy="425" r="18" fill="url(#gy)"/><circle cx="595" cy="450" r="18" fill="url(#gy)"/><circle cx="730" cy="410" r="18" fill="url(#gy)"/><circle cx="705" cy="440" r="18" fill="url(#gy)"/><circle cx="670" cy="465" r="18" fill="url(#gy)"/><circle cx="610" cy="520" r="18" fill="url(#gy)"/><circle cx="715" cy="517" r="18" fill="url(#gy)"/><circle cx="680" cy="545" r="18" fill="url(#gy)"/><circle cx="585" cy="545" r="18" fill="url(#gy)"/><circle cx="555" cy="575" r="18" fill="url(#gy)"/><circle cx="735" cy="573" r="18" fill="url(#gy)"/><circle cx="700" cy="600" r="18" fill="url(#gy)"/><circle cx="275" cy="90" r="11" fill="url(#gw)"/><circle cx="420" cy="80" r="11" fill="url(#gw)"/><circle cx="240" cy="125" r="11" fill="url(#gw)"/><circle cx="385" cy="105" r="11" fill="url(#gw)"/><circle cx="230" cy="255" r="11" fill="url(#gw)"/><circle cx="265" cy="230" r="11" fill="url(#gw)"/><circle cx="375" cy="375" r="11" fill="url(#gw)"/><circle cx="500" cy="345" r="11" fill="url(#gw)"/><circle cx="230" cy="515" r="11" fill="url(#gw)"/><circle cx="370" cy="630" r="11" fill="url(#gw)"/><circle cx="500" cy="630" r="11" fill="url(#gw)"/><circle cx="630" cy="635" r="11" fill="url(#gw)"/><circle cx="760" cy="630" r="11" fill="url(#gw)"/><circle cx="790" cy="600" r="11" fill="url(#gw)"/><circle cx="800" cy="470" r="11" fill="url(#gw)"/><circle cx="760" cy="240" r="11" fill="url(#gw)"/><circle cx="790" cy="215" r="11" fill="url(#gw)"/><circle cx="640" cy="100" r="11" fill="url(#gw)"/><circle cx="535" cy="95" r="11" fill="url(#gw)"/><circle cx="690" cy="80" r="11" fill="url(#gw)"/><circle cx="258" cy="180" r="11" fill="url(#gw)"/><circle cx="258" cy="435" r="11" fill="url(#gw)"/><circle cx="518" cy="180" r="11" fill="url(#gw)"/><circle cx="518" cy="435" r="11" fill="url(#gw)"/><circle cx="300" cy="240" r="11" fill="url(#gw)"/><circle cx="300" cy="495" r="11" fill="url(#gw)"/><circle cx="560" cy="240" r="11" fill="url(#gw)"/><circle cx="560" cy="495" r="11" fill="url(#gw)"/><circle cx="380" cy="300" r="11" fill="url(#gw)"/><circle cx="380" cy="555" r="11" fill="url(#gw)"/><circle cx="640" cy="300" r="11" fill="url(#gw)"/><circle cx="640" cy="555" r="11" fill="url(#gw)"/><circle cx="430" cy="240" r="11" fill="url(#gw)"/><circle cx="430" cy="495" r="11" fill="url(#gw)"/><circle cx="690" cy="240" r="11" fill="url(#gw)"/><circle cx="690" cy="495" r="11" fill="url(#gw)"/><circle cx="470" cy="120" r="11" fill="url(#gw)"/><circle cx="470" cy="375" r="11" fill="url(#gw)"/><circle cx="730" cy="120" r="11" fill="url(#gw)"/><circle cx="730" cy="375" r="11" fill="url(#gw)"/><circle cx="292" cy="78" r="10" fill="url(#gm)"/><circle cx="550" cy="78" r="10" fill="url(#gm)"/><circle cx="808" cy="78" r="10" fill="url(#gm)"/><circle cx="258" cy="105" r="10" fill="url(#gm)"/><circle cx="517" cy="105" r="10" fill="url(#gm)"/><circle cx="773" cy="105" r="10" fill="url(#gm)"/><circle cx="225" cy="130" r="10" fill="url(#gm)"/><circle cx="483" cy="133" r="10" fill="url(#gm)"/><circle cx="740" cy="135" r="10" fill="url(#gm)"/><circle cx="225" cy="388" r="10" fill="url(#gm)"/><circle cx="483" cy="390" r="10" fill="url(#gm)"/><circle cx="740" cy="392" r="10" fill="url(#gm)"/><circle cx="808" cy="338" r="10" fill="url(#gm)"/><circle cx="773" cy="365" r="10" fill="url(#gm)"/><circle cx="230" cy="645" r="10" fill="url(#gm)"/><circle cx="483" cy="648" r="10" fill="url(#gm)"/><circle cx="740" cy="650" r="10" fill="url(#gm)"/><circle cx="813" cy="595" r="10" fill="url(#gm)"/><circle cx="775" cy="622" r="10" fill="url(#gm)"/><circle cx="370" cy="243" r="10" fill="url(#gm)"/><circle cx="630" cy="250" r="10" fill="url(#gm)"/><circle cx="372" cy="505" r="10" fill="url(#gm)"/><circle cx="630" cy="508" r="10" fill="url(#gm)"/><rect x="952" y="607" width="72" height="104" fill="#000" stroke="#a0a0a8" stroke-width="4"/><circle cx="970" cy="625" r="14" fill="url(#gm)"/><line x1="987" y1="625" x2="1014" y2="625" stroke="#999" stroke-width="4"/><circle cx="970" cy="659" r="14" fill="url(#gy)"/><line x1="987" y1="659" x2="1014" y2="659" stroke="#999" stroke-width="4"/><circle cx="970" cy="693" r="14" fill="url(#gw)"/><line x1="987" y1="693" x2="1014" y2="693" stroke="#999" stroke-width="4"/></svg>
<svg class="a" style="left:417px;top:198px;overflow:hidden;box-shadow:-1px -1px 0 #fafafa, 1px 1px 0 #b4b4b4" width="145" height="108" viewBox="13.1 13.1 951.2 708.5"><rect x="13.1" y="13.1" width="951.2" height="708.5" fill="#000"/><g stroke="#b8b8b8" stroke-width="3.5"><line x1="75" y1="24.0" x2="75" y2="100.0"/><line x1="75" y1="80" x2="127.0" y2="80"/></g><rect x="330" y="160" width="365" height="375" fill="none" stroke="#c8c8c8" stroke-width="7"/><polygon points="258,113 347,84 402,186 381,215 254,228" fill="#1c8cb4"/><polygon points="258,113 360,113 254,228" fill="#2aa8d0"/><line x1="254" y1="228" x2="402" y2="186" stroke="#2050e0" stroke-width="4"/><circle cx="258" cy="113" r="9" fill="#ffff00"/><circle cx="347" cy="84" r="9" fill="#ffff00"/><circle cx="402" cy="186" r="9" fill="#ffff00"/><circle cx="254" cy="228" r="9" fill="#ffff00"/><circle cx="381" cy="215" r="9" fill="#ffff00"/><polygon points="628,113 717,84 772,186 751,215 624,228" fill="#1c8cb4"/><polygon points="628,113 730,113 624,228" fill="#2aa8d0"/><line x1="624" y1="228" x2="772" y2="186" stroke="#2050e0" stroke-width="4"/><circle cx="628" cy="113" r="9" fill="#ffff00"/><circle cx="717" cy="84" r="9" fill="#ffff00"/><circle cx="772" cy="186" r="9" fill="#ffff00"/><circle cx="624" cy="228" r="9" fill="#ffff00"/><circle cx="751" cy="215" r="9" fill="#ffff00"/><polygon points="208,153 297,124 352,226 331,255 204,268" fill="#1c8cb4"/><polygon points="208,153 310,153 204,268" fill="#2aa8d0"/><line x1="204" y1="268" x2="352" y2="226" stroke="#2050e0" stroke-width="4"/><circle cx="208" cy="153" r="9" fill="#ffff00"/><circle cx="297" cy="124" r="9" fill="#ffff00"/><circle cx="352" cy="226" r="9" fill="#ffff00"/><circle cx="204" cy="268" r="9" fill="#ffff00"/><circle cx="331" cy="255" r="9" fill="#ffff00"/><polygon points="578,148 667,118 722,220 701,250 574,263" fill="#1c8cb4"/><polygon points="578,148 680,148 574,263" fill="#2aa8d0"/><line x1="574" y1="263" x2="722" y2="220" stroke="#2050e0" stroke-width="4"/><circle cx="578" cy="148" r="9" fill="#ffff00"/><circle cx="667" cy="118" r="9" fill="#ffff00"/><circle cx="722" cy="220" r="9" fill="#ffff00"/><circle cx="574" cy="263" r="9" fill="#ffff00"/><circle cx="701" cy="250" r="9" fill="#ffff00"/><g stroke="#d08a10" stroke-width="9" stroke-linecap="round"><line x1="480" y1="180" x2="350" y2="250"/><line x1="480" y1="180" x2="435" y2="292"/><line x1="505" y1="162" x2="545" y2="315"/><line x1="280" y1="380" x2="435" y2="292"/><line x1="280" y1="380" x2="410" y2="430"/><line x1="650" y1="380" x2="545" y2="315"/><line x1="650" y1="380" x2="550" y2="430"/><line x1="485" y1="555" x2="410" y2="430"/><line x1="510" y1="535" x2="550" y2="430"/><line x1="305" y1="360" x2="350" y2="250"/><line x1="675" y1="362" x2="640" y2="270"/><line x1="305" y1="360" x2="375" y2="470"/><line x1="675" y1="362" x2="585" y2="505"/><line x1="480" y1="180" x2="400" y2="215"/><line x1="505" y1="162" x2="580" y2="210"/><line x1="485" y1="555" x2="375" y2="470"/><line x1="510" y1="535" x2="585" y2="505"/></g><polygon points="412,318 496,290 548,386 528,414 408,426" fill="#1c8cb4"/><polygon points="412,318 508,318 408,426" fill="#2aa8d0"/><line x1="408" y1="426" x2="548" y2="386" stroke="#2050e0" stroke-width="4"/><circle cx="412" cy="318" r="9" fill="#ffff00"/><circle cx="496" cy="290" r="9" fill="#ffff00"/><circle cx="548" cy="386" r="9" fill="#ffff00"/><circle cx="408" cy="426" r="9" fill="#ffff00"/><circle cx="528" cy="414" r="9" fill="#ffff00"/><polygon points="258,483 347,454 402,556 381,585 254,598" fill="#1c8cb4"/><polygon points="258,483 360,483 254,598" fill="#2aa8d0"/><line x1="254" y1="598" x2="402" y2="556" stroke="#2050e0" stroke-width="4"/><circle cx="258" cy="483" r="9" fill="#ffff00"/><circle cx="347" cy="454" r="9" fill="#ffff00"/><circle cx="402" cy="556" r="9" fill="#ffff00"/><circle cx="254" cy="598" r="9" fill="#ffff00"/><circle cx="381" cy="585" r="9" fill="#ffff00"/><polygon points="628,483 717,454 772,556 751,585 624,598" fill="#1c8cb4"/><polygon points="628,483 730,483 624,598" fill="#2aa8d0"/><line x1="624" y1="598" x2="772" y2="556" stroke="#2050e0" stroke-width="4"/><circle cx="628" cy="483" r="9" fill="#ffff00"/><circle cx="717" cy="454" r="9" fill="#ffff00"/><circle cx="772" cy="556" r="9" fill="#ffff00"/><circle cx="624" cy="598" r="9" fill="#ffff00"/><circle cx="751" cy="585" r="9" fill="#ffff00"/><polygon points="208,518 297,488 352,590 331,620 204,633" fill="#1c8cb4"/><polygon points="208,518 310,518 204,633" fill="#2aa8d0"/><line x1="204" y1="633" x2="352" y2="590" stroke="#2050e0" stroke-width="4"/><circle cx="208" cy="518" r="9" fill="#ffff00"/><circle cx="297" cy="488" r="9" fill="#ffff00"/><circle cx="352" cy="590" r="9" fill="#ffff00"/><circle cx="204" cy="633" r="9" fill="#ffff00"/><circle cx="331" cy="620" r="9" fill="#ffff00"/><polygon points="578,518 667,488 722,590 701,620 574,633" fill="#1c8cb4"/><polygon points="578,518 680,518 574,633" fill="#2aa8d0"/><line x1="574" y1="633" x2="722" y2="590" stroke="#2050e0" stroke-width="4"/><circle cx="578" cy="518" r="9" fill="#ffff00"/><circle cx="667" cy="488" r="9" fill="#ffff00"/><circle cx="722" cy="590" r="9" fill="#ffff00"/><circle cx="574" cy="633" r="9" fill="#ffff00"/><circle cx="701" cy="620" r="9" fill="#ffff00"/><rect x="270" y="200" width="375" height="375" fill="none" stroke="#c8c8c8" stroke-width="7"/><circle cx="480" cy="180" r="19" fill="url(#gw)"/><circle cx="505" cy="162" r="19" fill="url(#gw)"/><circle cx="280" cy="380" r="19" fill="url(#gw)"/><circle cx="305" cy="360" r="19" fill="url(#gw)"/><circle cx="460" cy="385" r="19" fill="url(#gw)"/><circle cx="650" cy="380" r="19" fill="url(#gw)"/><circle cx="675" cy="362" r="19" fill="url(#gw)"/><circle cx="485" cy="555" r="19" fill="url(#gw)"/><circle cx="510" cy="535" r="19" fill="url(#gw)"/><rect x="892" y="632" width="72" height="104" fill="#000" stroke="#a0a0a8" stroke-width="4"/><circle cx="910" cy="650" r="14" fill="url(#gm)"/><line x1="927" y1="650" x2="954" y2="650" stroke="#999" stroke-width="4"/><circle cx="910" cy="684" r="14" fill="url(#gy)"/><line x1="927" y1="684" x2="954" y2="684" stroke="#999" stroke-width="4"/><circle cx="910" cy="718" r="14" fill="url(#gw)"/><line x1="927" y1="718" x2="954" y2="718" stroke="#999" stroke-width="4"/></svg>
<svg class="a" style="left:782px;top:198px;overflow:hidden;box-shadow:-1px -1px 0 #fafafa, 1px 1px 0 #b4b4b4" width="145" height="108" viewBox="13.1 13.1 951.2 708.5"><rect x="13.1" y="13.1" width="951.2" height="708.5" fill="#676698"/><g stroke="#b8b8b8" stroke-width="3.5"><line x1="80" y1="16.0" x2="80" y2="82.5"/><line x1="80" y1="65" x2="125.5" y2="65"/></g><line x1="185" y1="70" x2="185" y2="663" stroke="#e8e8f0" stroke-width="6"/><line x1="483" y1="70" x2="483" y2="663" stroke="#e8e8f0" stroke-width="6"/><line x1="783" y1="70" x2="783" y2="663" stroke="#e8e8f0" stroke-width="6"/><line x1="185" y1="70" x2="783" y2="70" stroke="#e8e8f0" stroke-width="6"/><line x1="185" y1="368" x2="783" y2="368" stroke="#e8e8f0" stroke-width="6"/><line x1="185" y1="663" x2="783" y2="663" stroke="#e8e8f0" stroke-width="6"/><g stroke="#b8843a" stroke-width="5" stroke-linecap="round"><line x1="335" y1="70" x2="240" y2="115"/><line x1="335" y1="70" x2="437" y2="122"/><line x1="335" y1="70" x2="288" y2="162"/><line x1="335" y1="70" x2="390" y2="170"/><line x1="632" y1="70" x2="538" y2="115"/><line x1="632" y1="70" x2="735" y2="122"/><line x1="632" y1="70" x2="586" y2="162"/><line x1="632" y1="70" x2="688" y2="170"/><line x1="185" y1="217" x2="240" y2="115"/><line x1="185" y1="217" x2="288" y2="162"/><line x1="185" y1="217" x2="278" y2="262"/><line x1="185" y1="217" x2="233" y2="310"/><line x1="335" y1="217" x2="288" y2="162"/><line x1="335" y1="217" x2="390" y2="170"/><line x1="335" y1="217" x2="278" y2="262"/><line x1="335" y1="217" x2="382" y2="268"/><line x1="483" y1="217" x2="437" y2="122"/><line x1="483" y1="217" x2="390" y2="170"/><line x1="483" y1="217" x2="382" y2="268"/><line x1="483" y1="217" x2="432" y2="318"/><line x1="483" y1="217" x2="538" y2="115"/><line x1="483" y1="217" x2="586" y2="162"/><line x1="483" y1="217" x2="576" y2="262"/><line x1="483" y1="217" x2="531" y2="310"/><line x1="632" y1="217" x2="586" y2="162"/><line x1="632" y1="217" x2="688" y2="170"/><line x1="632" y1="217" x2="576" y2="262"/><line x1="632" y1="217" x2="680" y2="268"/><line x1="783" y1="217" x2="735" y2="122"/><line x1="783" y1="217" x2="688" y2="170"/><line x1="783" y1="217" x2="680" y2="268"/><line x1="783" y1="217" x2="730" y2="318"/><line x1="185" y1="515" x2="240" y2="413"/><line x1="185" y1="515" x2="288" y2="460"/><line x1="185" y1="515" x2="278" y2="560"/><line x1="185" y1="515" x2="233" y2="608"/><line x1="335" y1="515" x2="288" y2="460"/><line x1="335" y1="515" x2="390" y2="468"/><line x1="335" y1="515" x2="278" y2="560"/><line x1="335" y1="515" x2="382" y2="566"/><line x1="483" y1="515" x2="437" y2="420"/><line x1="483" y1="515" x2="390" y2="468"/><line x1="483" y1="515" x2="382" y2="566"/><line x1="483" y1="515" x2="432" y2="616"/><line x1="483" y1="515" x2="538" y2="413"/><line x1="483" y1="515" x2="586" y2="460"/><line x1="483" y1="515" x2="576" y2="560"/><line x1="483" y1="515" x2="531" y2="608"/><line x1="632" y1="515" x2="586" y2="460"/><line x1="632" y1="515" x2="688" y2="468"/><line x1="632" y1="515" x2="576" y2="560"/><line x1="632" y1="515" x2="680" y2="566"/><line x1="783" y1="515" x2="735" y2="420"/><line x1="783" y1="515" x2="688" y2="468"/><line x1="783" y1="515" x2="680" y2="566"/><line x1="783" y1="515" x2="730" y2="616"/><line x1="632" y1="368" x2="576" y2="262"/><line x1="632" y1="368" x2="680" y2="268"/><line x1="632" y1="368" x2="531" y2="310"/><line x1="632" y1="368" x2="730" y2="318"/><line x1="632" y1="368" x2="538" y2="413"/><line x1="632" y1="368" x2="735" y2="420"/><line x1="632" y1="368" x2="586" y2="460"/><line x1="632" y1="368" x2="688" y2="468"/><line x1="335" y1="663" x2="278" y2="560"/><line x1="335" y1="663" x2="382" y2="566"/><line x1="335" y1="663" x2="233" y2="608"/><line x1="335" y1="663" x2="432" y2="616"/><line x1="632" y1="663" x2="576" y2="560"/><line x1="632" y1="663" x2="680" y2="566"/><line x1="632" y1="663" x2="531" y2="608"/><line x1="632" y1="663" x2="730" y2="616"/><line x1="185" y1="70" x2="240" y2="115"/><line x1="185" y1="368" x2="233" y2="310"/><line x1="185" y1="368" x2="240" y2="413"/><line x1="185" y1="663" x2="233" y2="608"/><line x1="483" y1="70" x2="437" y2="122"/><line x1="483" y1="70" x2="538" y2="115"/><line x1="483" y1="368" x2="432" y2="318"/><line x1="483" y1="368" x2="437" y2="420"/><line x1="483" y1="368" x2="531" y2="310"/><line x1="483" y1="368" x2="538" y2="413"/><line x1="483" y1="663" x2="432" y2="616"/><line x1="483" y1="663" x2="531" y2="608"/><line x1="783" y1="70" x2="735" y2="122"/><line x1="783" y1="368" x2="730" y2="318"/><line x1="783" y1="368" x2="735" y2="420"/><line x1="783" y1="663" x2="730" y2="616"/></g><polygon points="280,262 382,268 432,318 390,465 288,462 233,415" fill="#c8a820"/><polygon points="280,262 382,268 432,318 335,368" fill="#e0c040"/><polygon points="233,415 335,368 390,465 288,462" fill="#a88810"/><circle cx="240" cy="115" r="22" fill="url(#gy)"/><circle cx="437" cy="122" r="22" fill="url(#gy)"/><circle cx="288" cy="162" r="22" fill="url(#gy)"/><circle cx="390" cy="170" r="22" fill="url(#gy)"/><circle cx="278" cy="262" r="22" fill="url(#gy)"/><circle cx="382" cy="268" r="22" fill="url(#gy)"/><circle cx="233" cy="310" r="22" fill="url(#gy)"/><circle cx="432" cy="318" r="22" fill="url(#gy)"/><circle cx="240" cy="413" r="22" fill="url(#gy)"/><circle cx="437" cy="420" r="22" fill="url(#gy)"/><circle cx="288" cy="460" r="22" fill="url(#gy)"/><circle cx="390" cy="468" r="22" fill="url(#gy)"/><circle cx="278" cy="560" r="22" fill="url(#gy)"/><circle cx="382" cy="566" r="22" fill="url(#gy)"/><circle cx="233" cy="608" r="22" fill="url(#gy)"/><circle cx="432" cy="616" r="22" fill="url(#gy)"/><circle cx="538" cy="115" r="22" fill="url(#gy)"/><circle cx="735" cy="122" r="22" fill="url(#gy)"/><circle cx="586" cy="162" r="22" fill="url(#gy)"/><circle cx="688" cy="170" r="22" fill="url(#gy)"/><circle cx="576" cy="262" r="22" fill="url(#gy)"/><circle cx="680" cy="268" r="22" fill="url(#gy)"/><circle cx="531" cy="310" r="22" fill="url(#gy)"/><circle cx="730" cy="318" r="22" fill="url(#gy)"/><circle cx="538" cy="413" r="22" fill="url(#gy)"/><circle cx="735" cy="420" r="22" fill="url(#gy)"/><circle cx="586" cy="460" r="22" fill="url(#gy)"/><circle cx="688" cy="468" r="22" fill="url(#gy)"/><circle cx="576" cy="560" r="22" fill="url(#gy)"/><circle cx="680" cy="566" r="22" fill="url(#gy)"/><circle cx="531" cy="608" r="22" fill="url(#gy)"/><circle cx="730" cy="616" r="22" fill="url(#gy)"/><circle cx="335" cy="70" r="13" fill="url(#gg)"/><circle cx="632" cy="70" r="13" fill="url(#gg)"/><circle cx="185" cy="217" r="13" fill="url(#gg)"/><circle cx="335" cy="217" r="13" fill="url(#gg)"/><circle cx="483" cy="217" r="13" fill="url(#gg)"/><circle cx="632" cy="217" r="13" fill="url(#gg)"/><circle cx="783" cy="217" r="13" fill="url(#gg)"/><circle cx="185" cy="515" r="13" fill="url(#gg)"/><circle cx="335" cy="515" r="13" fill="url(#gg)"/><circle cx="483" cy="515" r="13" fill="url(#gg)"/><circle cx="632" cy="515" r="13" fill="url(#gg)"/><circle cx="783" cy="515" r="13" fill="url(#gg)"/><circle cx="632" cy="368" r="13" fill="url(#gg)"/><circle cx="335" cy="663" r="13" fill="url(#gg)"/><circle cx="632" cy="663" r="13" fill="url(#gg)"/><circle cx="185" cy="70" r="11" fill="url(#gm)"/><circle cx="185" cy="368" r="11" fill="url(#gm)"/><circle cx="185" cy="663" r="11" fill="url(#gm)"/><circle cx="483" cy="70" r="11" fill="url(#gm)"/><circle cx="483" cy="368" r="11" fill="url(#gm)"/><circle cx="483" cy="663" r="11" fill="url(#gm)"/><circle cx="783" cy="70" r="11" fill="url(#gm)"/><circle cx="783" cy="368" r="11" fill="url(#gm)"/><circle cx="783" cy="663" r="11" fill="url(#gm)"/><rect x="894" y="636" width="68" height="86" fill="#676698" stroke="#a0a0a8" stroke-width="4"/><circle cx="910" cy="652" r="12" fill="url(#gm)"/><line x1="925" y1="652" x2="952" y2="652" stroke="#999" stroke-width="4"/><circle cx="910" cy="679" r="12" fill="url(#gy)"/><line x1="925" y1="679" x2="952" y2="679" stroke="#999" stroke-width="4"/><circle cx="910" cy="706" r="12" fill="url(#gg)"/><line x1="925" y1="706" x2="952" y2="706" stroke="#999" stroke-width="4"/></svg>
<svg class="a" style="left:1147px;top:198px;overflow:hidden;box-shadow:-1px -1px 0 #fafafa, 1px 1px 0 #b4b4b4" width="145" height="108" viewBox="19.5 19.5 942.5 702.0"><rect x="19.5" y="19.5" width="942.5" height="702.0" fill="#676698"/><g stroke="#b8b8b8" stroke-width="3.5"><line x1="85" y1="13.0" x2="85" y2="70.0"/><line x1="85" y1="55" x2="124.0" y2="55"/></g><g stroke="#9a7050" stroke-width="4" stroke-linecap="round"><line x1="232" y1="115" x2="270" y2="126"/><line x1="232" y1="115" x2="240" y2="154"/><line x1="232" y1="115" x2="202" y2="142"/><line x1="232" y1="115" x2="193" y2="103"/><line x1="232" y1="115" x2="223" y2="75"/><line x1="232" y1="115" x2="261" y2="87"/><line x1="360" y1="115" x2="398" y2="126"/><line x1="360" y1="115" x2="368" y2="154"/><line x1="360" y1="115" x2="330" y2="142"/><line x1="360" y1="115" x2="321" y2="103"/><line x1="360" y1="115" x2="351" y2="75"/><line x1="360" y1="115" x2="389" y2="87"/><line x1="488" y1="115" x2="526" y2="126"/><line x1="488" y1="115" x2="496" y2="154"/><line x1="488" y1="115" x2="458" y2="142"/><line x1="488" y1="115" x2="449" y2="103"/><line x1="488" y1="115" x2="479" y2="75"/><line x1="488" y1="115" x2="517" y2="87"/><line x1="616" y1="115" x2="654" y2="126"/><line x1="616" y1="115" x2="624" y2="154"/><line x1="616" y1="115" x2="586" y2="142"/><line x1="616" y1="115" x2="577" y2="103"/><line x1="616" y1="115" x2="607" y2="75"/><line x1="616" y1="115" x2="645" y2="87"/><line x1="744" y1="115" x2="782" y2="126"/><line x1="744" y1="115" x2="752" y2="154"/><line x1="744" y1="115" x2="714" y2="142"/><line x1="744" y1="115" x2="705" y2="103"/><line x1="744" y1="115" x2="735" y2="75"/><line x1="744" y1="115" x2="773" y2="87"/><line x1="296" y1="179" x2="334" y2="190"/><line x1="296" y1="179" x2="304" y2="218"/><line x1="296" y1="179" x2="266" y2="206"/><line x1="296" y1="179" x2="257" y2="167"/><line x1="296" y1="179" x2="287" y2="139"/><line x1="296" y1="179" x2="325" y2="151"/><line x1="424" y1="179" x2="462" y2="190"/><line x1="424" y1="179" x2="432" y2="218"/><line x1="424" y1="179" x2="394" y2="206"/><line x1="424" y1="179" x2="385" y2="167"/><line x1="424" y1="179" x2="415" y2="139"/><line x1="424" y1="179" x2="453" y2="151"/><line x1="552" y1="179" x2="590" y2="190"/><line x1="552" y1="179" x2="560" y2="218"/><line x1="552" y1="179" x2="522" y2="206"/><line x1="552" y1="179" x2="513" y2="167"/><line x1="552" y1="179" x2="543" y2="139"/><line x1="552" y1="179" x2="581" y2="151"/><line x1="680" y1="179" x2="718" y2="190"/><line x1="680" y1="179" x2="688" y2="218"/><line x1="680" y1="179" x2="650" y2="206"/><line x1="680" y1="179" x2="641" y2="167"/><line x1="680" y1="179" x2="671" y2="139"/><line x1="680" y1="179" x2="709" y2="151"/><line x1="232" y1="243" x2="270" y2="254"/><line x1="232" y1="243" x2="240" y2="282"/><line x1="232" y1="243" x2="202" y2="270"/><line x1="232" y1="243" x2="193" y2="231"/><line x1="232" y1="243" x2="223" y2="203"/><line x1="232" y1="243" x2="261" y2="215"/><line x1="360" y1="243" x2="398" y2="254"/><line x1="360" y1="243" x2="368" y2="282"/><line x1="360" y1="243" x2="330" y2="270"/><line x1="360" y1="243" x2="321" y2="231"/><line x1="360" y1="243" x2="351" y2="203"/><line x1="360" y1="243" x2="389" y2="215"/><line x1="488" y1="243" x2="526" y2="254"/><line x1="488" y1="243" x2="496" y2="282"/><line x1="488" y1="243" x2="458" y2="270"/><line x1="488" y1="243" x2="449" y2="231"/><line x1="488" y1="243" x2="479" y2="203"/><line x1="488" y1="243" x2="517" y2="215"/><line x1="616" y1="243" x2="654" y2="254"/><line x1="616" y1="243" x2="624" y2="282"/><line x1="616" y1="243" x2="586" y2="270"/><line x1="616" y1="243" x2="577" y2="231"/><line x1="616" y1="243" x2="607" y2="203"/><line x1="616" y1="243" x2="645" y2="215"/><line x1="744" y1="243" x2="782" y2="254"/><line x1="744" y1="243" x2="752" y2="282"/><line x1="744" y1="243" x2="714" y2="270"/><line x1="744" y1="243" x2="705" y2="231"/><line x1="744" y1="243" x2="735" y2="203"/><line x1="744" y1="243" x2="773" y2="215"/><line x1="296" y1="307" x2="334" y2="318"/><line x1="296" y1="307" x2="304" y2="346"/><line x1="296" y1="307" x2="266" y2="334"/><line x1="296" y1="307" x2="257" y2="295"/><line x1="296" y1="307" x2="287" y2="267"/><line x1="296" y1="307" x2="325" y2="279"/><line x1="424" y1="307" x2="462" y2="318"/><line x1="424" y1="307" x2="432" y2="346"/><line x1="424" y1="307" x2="394" y2="334"/><line x1="424" y1="307" x2="385" y2="295"/><line x1="424" y1="307" x2="415" y2="267"/><line x1="424" y1="307" x2="453" y2="279"/><line x1="552" y1="307" x2="590" y2="318"/><line x1="552" y1="307" x2="560" y2="346"/><line x1="552" y1="307" x2="522" y2="334"/><line x1="552" y1="307" x2="513" y2="295"/><line x1="552" y1="307" x2="543" y2="267"/><line x1="552" y1="307" x2="581" y2="279"/><line x1="680" y1="307" x2="718" y2="318"/><line x1="680" y1="307" x2="688" y2="346"/><line x1="680" y1="307" x2="650" y2="334"/><line x1="680" y1="307" x2="641" y2="295"/><line x1="680" y1="307" x2="671" y2="267"/><line x1="680" y1="307" x2="709" y2="279"/><line x1="232" y1="371" x2="270" y2="382"/><line x1="232" y1="371" x2="240" y2="410"/><line x1="232" y1="371" x2="202" y2="398"/><line x1="232" y1="371" x2="193" y2="359"/><line x1="232" y1="371" x2="223" y2="331"/><line x1="232" y1="371" x2="261" y2="343"/><line x1="360" y1="371" x2="398" y2="382"/><line x1="360" y1="371" x2="368" y2="410"/><line x1="360" y1="371" x2="330" y2="398"/><line x1="360" y1="371" x2="321" y2="359"/><line x1="360" y1="371" x2="351" y2="331"/><line x1="360" y1="371" x2="389" y2="343"/><line x1="488" y1="371" x2="526" y2="382"/><line x1="488" y1="371" x2="496" y2="410"/><line x1="488" y1="371" x2="458" y2="398"/><line x1="488" y1="371" x2="449" y2="359"/><line x1="488" y1="371" x2="479" y2="331"/><line x1="488" y1="371" x2="517" y2="343"/><line x1="616" y1="371" x2="654" y2="382"/><line x1="616" y1="371" x2="624" y2="410"/><line x1="616" y1="371" x2="586" y2="398"/><line x1="616" y1="371" x2="577" y2="359"/><line x1="616" y1="371" x2="607" y2="331"/><line x1="616" y1="371" x2="645" y2="343"/><line x1="744" y1="371" x2="782" y2="382"/><line x1="744" y1="371" x2="752" y2="410"/><line x1="744" y1="371" x2="714" y2="398"/><line x1="744" y1="371" x2="705" y2="359"/><line x1="744" y1="371" x2="735" y2="331"/><line x1="744" y1="371" x2="773" y2="343"/><line x1="296" y1="435" x2="334" y2="446"/><line x1="296" y1="435" x2="304" y2="474"/><line x1="296" y1="435" x2="266" y2="462"/><line x1="296" y1="435" x2="257" y2="423"/><line x1="296" y1="435" x2="287" y2="395"/><line x1="296" y1="435" x2="325" y2="407"/><line x1="424" y1="435" x2="462" y2="446"/><line x1="424" y1="435" x2="432" y2="474"/><line x1="424" y1="435" x2="394" y2="462"/><line x1="424" y1="435" x2="385" y2="423"/><line x1="424" y1="435" x2="415" y2="395"/><line x1="424" y1="435" x2="453" y2="407"/><line x1="552" y1="435" x2="590" y2="446"/><line x1="552" y1="435" x2="560" y2="474"/><line x1="552" y1="435" x2="522" y2="462"/><line x1="552" y1="435" x2="513" y2="423"/><line x1="552" y1="435" x2="543" y2="395"/><line x1="552" y1="435" x2="581" y2="407"/><line x1="680" y1="435" x2="718" y2="446"/><line x1="680" y1="435" x2="688" y2="474"/><line x1="680" y1="435" x2="650" y2="462"/><line x1="680" y1="435" x2="641" y2="423"/><line x1="680" y1="435" x2="671" y2="395"/><line x1="680" y1="435" x2="709" y2="407"/><line x1="232" y1="499" x2="270" y2="510"/><line x1="232" y1="499" x2="240" y2="538"/><line x1="232" y1="499" x2="202" y2="526"/><line x1="232" y1="499" x2="193" y2="487"/><line x1="232" y1="499" x2="223" y2="459"/><line x1="232" y1="499" x2="261" y2="471"/><line x1="360" y1="499" x2="398" y2="510"/><line x1="360" y1="499" x2="368" y2="538"/><line x1="360" y1="499" x2="330" y2="526"/><line x1="360" y1="499" x2="321" y2="487"/><line x1="360" y1="499" x2="351" y2="459"/><line x1="360" y1="499" x2="389" y2="471"/><line x1="488" y1="499" x2="526" y2="510"/><line x1="488" y1="499" x2="496" y2="538"/><line x1="488" y1="499" x2="458" y2="526"/><line x1="488" y1="499" x2="449" y2="487"/><line x1="488" y1="499" x2="479" y2="459"/><line x1="488" y1="499" x2="517" y2="471"/><line x1="616" y1="499" x2="654" y2="510"/><line x1="616" y1="499" x2="624" y2="538"/><line x1="616" y1="499" x2="586" y2="526"/><line x1="616" y1="499" x2="577" y2="487"/><line x1="616" y1="499" x2="607" y2="459"/><line x1="616" y1="499" x2="645" y2="471"/><line x1="744" y1="499" x2="782" y2="510"/><line x1="744" y1="499" x2="752" y2="538"/><line x1="744" y1="499" x2="714" y2="526"/><line x1="744" y1="499" x2="705" y2="487"/><line x1="744" y1="499" x2="735" y2="459"/><line x1="744" y1="499" x2="773" y2="471"/><line x1="296" y1="563" x2="334" y2="574"/><line x1="296" y1="563" x2="304" y2="602"/><line x1="296" y1="563" x2="266" y2="590"/><line x1="296" y1="563" x2="257" y2="551"/><line x1="296" y1="563" x2="287" y2="523"/><line x1="296" y1="563" x2="325" y2="535"/><line x1="424" y1="563" x2="462" y2="574"/><line x1="424" y1="563" x2="432" y2="602"/><line x1="424" y1="563" x2="394" y2="590"/><line x1="424" y1="563" x2="385" y2="551"/><line x1="424" y1="563" x2="415" y2="523"/><line x1="424" y1="563" x2="453" y2="535"/><line x1="552" y1="563" x2="590" y2="574"/><line x1="552" y1="563" x2="560" y2="602"/><line x1="552" y1="563" x2="522" y2="590"/><line x1="552" y1="563" x2="513" y2="551"/><line x1="552" y1="563" x2="543" y2="523"/><line x1="552" y1="563" x2="581" y2="535"/><line x1="680" y1="563" x2="718" y2="574"/><line x1="680" y1="563" x2="688" y2="602"/><line x1="680" y1="563" x2="650" y2="590"/><line x1="680" y1="563" x2="641" y2="551"/><line x1="680" y1="563" x2="671" y2="523"/><line x1="680" y1="563" x2="709" y2="535"/><line x1="232" y1="627" x2="270" y2="638"/><line x1="232" y1="627" x2="240" y2="666"/><line x1="232" y1="627" x2="202" y2="654"/><line x1="232" y1="627" x2="193" y2="615"/><line x1="232" y1="627" x2="223" y2="587"/><line x1="232" y1="627" x2="261" y2="599"/><line x1="360" y1="627" x2="398" y2="638"/><line x1="360" y1="627" x2="368" y2="666"/><line x1="360" y1="627" x2="330" y2="654"/><line x1="360" y1="627" x2="321" y2="615"/><line x1="360" y1="627" x2="351" y2="587"/><line x1="360" y1="627" x2="389" y2="599"/><line x1="488" y1="627" x2="526" y2="638"/><line x1="488" y1="627" x2="496" y2="666"/><line x1="488" y1="627" x2="458" y2="654"/><line x1="488" y1="627" x2="449" y2="615"/><line x1="488" y1="627" x2="479" y2="587"/><line x1="488" y1="627" x2="517" y2="599"/><line x1="616" y1="627" x2="654" y2="638"/><line x1="616" y1="627" x2="624" y2="666"/><line x1="616" y1="627" x2="586" y2="654"/><line x1="616" y1="627" x2="577" y2="615"/><line x1="616" y1="627" x2="607" y2="587"/><line x1="616" y1="627" x2="645" y2="599"/><line x1="744" y1="627" x2="782" y2="638"/><line x1="744" y1="627" x2="752" y2="666"/><line x1="744" y1="627" x2="714" y2="654"/><line x1="744" y1="627" x2="705" y2="615"/><line x1="744" y1="627" x2="735" y2="587"/><line x1="744" y1="627" x2="773" y2="599"/><line x1="255" y1="135" x2="285" y2="175"/><line x1="381" y1="135" x2="411" y2="175"/><line x1="507" y1="135" x2="537" y2="175"/><line x1="633" y1="135" x2="663" y2="175"/><line x1="276" y1="155" x2="306" y2="195"/><line x1="402" y1="155" x2="432" y2="195"/><line x1="528" y1="155" x2="558" y2="195"/><line x1="654" y1="155" x2="684" y2="195"/><line x1="318" y1="199" x2="348" y2="239"/><line x1="444" y1="199" x2="474" y2="239"/><line x1="570" y1="199" x2="600" y2="239"/><line x1="696" y1="199" x2="726" y2="239"/><line x1="339" y1="219" x2="369" y2="259"/><line x1="465" y1="219" x2="495" y2="259"/><line x1="591" y1="219" x2="621" y2="259"/><line x1="717" y1="219" x2="747" y2="259"/><line x1="339" y1="263" x2="369" y2="303"/><line x1="465" y1="263" x2="495" y2="303"/><line x1="591" y1="263" x2="621" y2="303"/><line x1="717" y1="263" x2="747" y2="303"/><line x1="360" y1="283" x2="390" y2="323"/><line x1="486" y1="283" x2="516" y2="323"/><line x1="612" y1="283" x2="642" y2="323"/><line x1="276" y1="327" x2="306" y2="367"/><line x1="402" y1="327" x2="432" y2="367"/><line x1="528" y1="327" x2="558" y2="367"/><line x1="654" y1="327" x2="684" y2="367"/><line x1="297" y1="347" x2="327" y2="387"/><line x1="423" y1="347" x2="453" y2="387"/><line x1="549" y1="347" x2="579" y2="387"/><line x1="675" y1="347" x2="705" y2="387"/><line x1="297" y1="391" x2="327" y2="431"/><line x1="423" y1="391" x2="453" y2="431"/><line x1="549" y1="391" x2="579" y2="431"/><line x1="675" y1="391" x2="705" y2="431"/><line x1="318" y1="411" x2="348" y2="451"/><line x1="444" y1="411" x2="474" y2="451"/><line x1="570" y1="411" x2="600" y2="451"/><line x1="696" y1="411" x2="726" y2="451"/><line x1="360" y1="455" x2="390" y2="495"/><line x1="486" y1="455" x2="516" y2="495"/><line x1="612" y1="455" x2="642" y2="495"/><line x1="255" y1="475" x2="285" y2="515"/><line x1="381" y1="475" x2="411" y2="515"/><line x1="507" y1="475" x2="537" y2="515"/><line x1="633" y1="475" x2="663" y2="515"/><line x1="255" y1="519" x2="285" y2="559"/><line x1="381" y1="519" x2="411" y2="559"/><line x1="507" y1="519" x2="537" y2="559"/><line x1="633" y1="519" x2="663" y2="559"/><line x1="276" y1="539" x2="306" y2="579"/><line x1="402" y1="539" x2="432" y2="579"/><line x1="528" y1="539" x2="558" y2="579"/><line x1="654" y1="539" x2="684" y2="579"/><line x1="318" y1="583" x2="348" y2="623"/><line x1="444" y1="583" x2="474" y2="623"/><line x1="570" y1="583" x2="600" y2="623"/><line x1="696" y1="583" x2="726" y2="623"/><line x1="339" y1="603" x2="369" y2="643"/><line x1="465" y1="603" x2="495" y2="643"/><line x1="591" y1="603" x2="621" y2="643"/><line x1="717" y1="603" x2="747" y2="643"/></g><circle cx="255" cy="135" r="8.5" fill="url(#gy)"/><circle cx="297" cy="135" r="8.5" fill="url(#gy)"/><circle cx="381" cy="135" r="8.5" fill="url(#gy)"/><circle cx="423" cy="135" r="8.5" fill="url(#gy)"/><circle cx="465" cy="135" r="8.5" fill="url(#gy)"/><circle cx="507" cy="135" r="8.5" fill="url(#gy)"/><circle cx="591" cy="135" r="8.5" fill="url(#gy)"/><circle cx="633" cy="135" r="8.5" fill="url(#gy)"/><circle cx="675" cy="135" r="8.5" fill="url(#gy)"/><circle cx="717" cy="135" r="8.5" fill="url(#gy)"/><circle cx="318" cy="155" r="8.5" fill="url(#gy)"/><circle cx="360" cy="155" r="8.5" fill="url(#gy)"/><circle cx="402" cy="155" r="8.5" fill="url(#gy)"/><circle cx="444" cy="155" r="8.5" fill="url(#gy)"/><circle cx="528" cy="155" r="8.5" fill="url(#gy)"/><circle cx="570" cy="155" r="8.5" fill="url(#gy)"/><circle cx="612" cy="155" r="8.5" fill="url(#gy)"/><circle cx="654" cy="155" r="8.5" fill="url(#gy)"/><circle cx="276" cy="199" r="8.5" fill="url(#gy)"/><circle cx="318" cy="199" r="8.5" fill="url(#gy)"/><circle cx="360" cy="199" r="8.5" fill="url(#gy)"/><circle cx="402" cy="199" r="8.5" fill="url(#gy)"/><circle cx="486" cy="199" r="8.5" fill="url(#gy)"/><circle cx="528" cy="199" r="8.5" fill="url(#gy)"/><circle cx="570" cy="199" r="8.5" fill="url(#gy)"/><circle cx="612" cy="199" r="8.5" fill="url(#gy)"/><circle cx="696" cy="199" r="8.5" fill="url(#gy)"/><circle cx="255" cy="219" r="8.5" fill="url(#gy)"/><circle cx="297" cy="219" r="8.5" fill="url(#gy)"/><circle cx="339" cy="219" r="8.5" fill="url(#gy)"/><circle cx="423" cy="219" r="8.5" fill="url(#gy)"/><circle cx="465" cy="219" r="8.5" fill="url(#gy)"/><circle cx="507" cy="219" r="8.5" fill="url(#gy)"/><circle cx="549" cy="219" r="8.5" fill="url(#gy)"/><circle cx="633" cy="219" r="8.5" fill="url(#gy)"/><circle cx="675" cy="219" r="8.5" fill="url(#gy)"/><circle cx="717" cy="219" r="8.5" fill="url(#gy)"/><circle cx="255" cy="263" r="8.5" fill="url(#gy)"/><circle cx="339" cy="263" r="8.5" fill="url(#gy)"/><circle cx="381" cy="263" r="8.5" fill="url(#gy)"/><circle cx="423" cy="263" r="8.5" fill="url(#gy)"/><circle cx="465" cy="263" r="8.5" fill="url(#gy)"/><circle cx="549" cy="263" r="8.5" fill="url(#gy)"/><circle cx="591" cy="263" r="8.5" fill="url(#gy)"/><circle cx="633" cy="263" r="8.5" fill="url(#gy)"/><circle cx="675" cy="263" r="8.5" fill="url(#gy)"/><circle cx="276" cy="283" r="8.5" fill="url(#gy)"/><circle cx="318" cy="283" r="8.5" fill="url(#gy)"/><circle cx="360" cy="283" r="8.5" fill="url(#gy)"/><circle cx="402" cy="283" r="8.5" fill="url(#gy)"/><circle cx="486" cy="283" r="8.5" fill="url(#gy)"/><circle cx="528" cy="283" r="8.5" fill="url(#gy)"/><circle cx="570" cy="283" r="8.5" fill="url(#gy)"/><circle cx="612" cy="283" r="8.5" fill="url(#gy)"/><circle cx="696" cy="283" r="8.5" fill="url(#gy)"/><circle cx="276" cy="327" r="8.5" fill="url(#gy)"/><circle cx="318" cy="327" r="8.5" fill="url(#gy)"/><circle cx="360" cy="327" r="8.5" fill="url(#gy)"/><circle cx="444" cy="327" r="8.5" fill="url(#gy)"/><circle cx="486" cy="327" r="8.5" fill="url(#gy)"/><circle cx="528" cy="327" r="8.5" fill="url(#gy)"/><circle cx="570" cy="327" r="8.5" fill="url(#gy)"/><circle cx="654" cy="327" r="8.5" fill="url(#gy)"/><circle cx="696" cy="327" r="8.5" fill="url(#gy)"/><circle cx="255" cy="347" r="8.5" fill="url(#gy)"/><circle cx="297" cy="347" r="8.5" fill="url(#gy)"/><circle cx="381" cy="347" r="8.5" fill="url(#gy)"/><circle cx="423" cy="347" r="8.5" fill="url(#gy)"/><circle cx="465" cy="347" r="8.5" fill="url(#gy)"/><circle cx="507" cy="347" r="8.5" fill="url(#gy)"/><circle cx="591" cy="347" r="8.5" fill="url(#gy)"/><circle cx="633" cy="347" r="8.5" fill="url(#gy)"/><circle cx="675" cy="347" r="8.5" fill="url(#gy)"/><circle cx="717" cy="347" r="8.5" fill="url(#gy)"/><circle cx="297" cy="391" r="8.5" fill="url(#gy)"/><circle cx="339" cy="391" r="8.5" fill="url(#gy)"/><circle cx="381" cy="391" r="8.5" fill="url(#gy)"/><circle cx="423" cy="391" r="8.5" fill="url(#gy)"/><circle cx="507" cy="391" r="8.5" fill="url(#gy)"/><circle cx="549" cy="391" r="8.5" fill="url(#gy)"/><circle cx="591" cy="391" r="8.5" fill="url(#gy)"/><circle cx="633" cy="391" r="8.5" fill="url(#gy)"/><circle cx="717" cy="391" r="8.5" fill="url(#gy)"/><circle cx="276" cy="411" r="8.5" fill="url(#gy)"/><circle cx="318" cy="411" r="8.5" fill="url(#gy)"/><circle cx="360" cy="411" r="8.5" fill="url(#gy)"/><circle cx="444" cy="411" r="8.5" fill="url(#gy)"/><circle cx="486" cy="411" r="8.5" fill="url(#gy)"/><circle cx="528" cy="411" r="8.5" fill="url(#gy)"/><circle cx="570" cy="411" r="8.5" fill="url(#gy)"/><circle cx="654" cy="411" r="8.5" fill="url(#gy)"/><circle cx="696" cy="411" r="8.5" fill="url(#gy)"/><circle cx="276" cy="455" r="8.5" fill="url(#gy)"/><circle cx="318" cy="455" r="8.5" fill="url(#gy)"/><circle cx="402" cy="455" r="8.5" fill="url(#gy)"/><circle cx="444" cy="455" r="8.5" fill="url(#gy)"/><circle cx="486" cy="455" r="8.5" fill="url(#gy)"/><circle cx="528" cy="455" r="8.5" fill="url(#gy)"/><circle cx="612" cy="455" r="8.5" fill="url(#gy)"/><circle cx="654" cy="455" r="8.5" fill="url(#gy)"/><circle cx="696" cy="455" r="8.5" fill="url(#gy)"/><circle cx="255" cy="475" r="8.5" fill="url(#gy)"/><circle cx="339" cy="475" r="8.5" fill="url(#gy)"/><circle cx="381" cy="475" r="8.5" fill="url(#gy)"/><circle cx="423" cy="475" r="8.5" fill="url(#gy)"/><circle cx="465" cy="475" r="8.5" fill="url(#gy)"/><circle cx="549" cy="475" r="8.5" fill="url(#gy)"/><circle cx="591" cy="475" r="8.5" fill="url(#gy)"/><circle cx="633" cy="475" r="8.5" fill="url(#gy)"/><circle cx="675" cy="475" r="8.5" fill="url(#gy)"/><circle cx="255" cy="519" r="8.5" fill="url(#gy)"/><circle cx="297" cy="519" r="8.5" fill="url(#gy)"/><circle cx="339" cy="519" r="8.5" fill="url(#gy)"/><circle cx="381" cy="519" r="8.5" fill="url(#gy)"/><circle cx="465" cy="519" r="8.5" fill="url(#gy)"/><circle cx="507" cy="519" r="8.5" fill="url(#gy)"/><circle cx="549" cy="519" r="8.5" fill="url(#gy)"/><circle cx="591" cy="519" r="8.5" fill="url(#gy)"/><circle cx="675" cy="519" r="8.5" fill="url(#gy)"/><circle cx="717" cy="519" r="8.5" fill="url(#gy)"/><circle cx="276" cy="539" r="8.5" fill="url(#gy)"/><circle cx="318" cy="539" r="8.5" fill="url(#gy)"/><circle cx="402" cy="539" r="8.5" fill="url(#gy)"/><circle cx="444" cy="539" r="8.5" fill="url(#gy)"/><circle cx="486" cy="539" r="8.5" fill="url(#gy)"/><circle cx="528" cy="539" r="8.5" fill="url(#gy)"/><circle cx="612" cy="539" r="8.5" fill="url(#gy)"/><circle cx="654" cy="539" r="8.5" fill="url(#gy)"/><circle cx="696" cy="539" r="8.5" fill="url(#gy)"/><circle cx="276" cy="583" r="8.5" fill="url(#gy)"/><circle cx="360" cy="583" r="8.5" fill="url(#gy)"/><circle cx="402" cy="583" r="8.5" fill="url(#gy)"/><circle cx="444" cy="583" r="8.5" fill="url(#gy)"/><circle cx="486" cy="583" r="8.5" fill="url(#gy)"/><circle cx="570" cy="583" r="8.5" fill="url(#gy)"/><circle cx="612" cy="583" r="8.5" fill="url(#gy)"/><circle cx="654" cy="583" r="8.5" fill="url(#gy)"/><circle cx="696" cy="583" r="8.5" fill="url(#gy)"/><circle cx="297" cy="603" r="8.5" fill="url(#gy)"/><circle cx="339" cy="603" r="8.5" fill="url(#gy)"/><circle cx="381" cy="603" r="8.5" fill="url(#gy)"/><circle cx="423" cy="603" r="8.5" fill="url(#gy)"/><circle cx="507" cy="603" r="8.5" fill="url(#gy)"/><circle cx="549" cy="603" r="8.5" fill="url(#gy)"/><circle cx="591" cy="603" r="8.5" fill="url(#gy)"/><circle cx="633" cy="603" r="8.5" fill="url(#gy)"/><circle cx="717" cy="603" r="8.5" fill="url(#gy)"/><circle cx="232" cy="115" r="7" fill="url(#gg)"/><circle cx="360" cy="115" r="7" fill="url(#gg)"/><circle cx="488" cy="115" r="7" fill="url(#gg)"/><circle cx="616" cy="115" r="7" fill="url(#gg)"/><circle cx="744" cy="115" r="7" fill="url(#gg)"/><circle cx="296" cy="179" r="7" fill="url(#gg)"/><circle cx="424" cy="179" r="7" fill="url(#gg)"/><circle cx="552" cy="179" r="7" fill="url(#gg)"/><circle cx="680" cy="179" r="7" fill="url(#gg)"/><circle cx="232" cy="243" r="7" fill="url(#gg)"/><circle cx="360" cy="243" r="7" fill="url(#gg)"/><circle cx="488" cy="243" r="7" fill="url(#gg)"/><circle cx="616" cy="243" r="7" fill="url(#gg)"/><circle cx="744" cy="243" r="7" fill="url(#gg)"/><circle cx="296" cy="307" r="7" fill="url(#gg)"/><circle cx="424" cy="307" r="7" fill="url(#gg)"/><circle cx="552" cy="307" r="7" fill="url(#gg)"/><circle cx="680" cy="307" r="7" fill="url(#gg)"/><circle cx="232" cy="371" r="7" fill="url(#gg)"/><circle cx="360" cy="371" r="7" fill="url(#gg)"/><circle cx="488" cy="371" r="7" fill="url(#gg)"/><circle cx="616" cy="371" r="7" fill="url(#gg)"/><circle cx="744" cy="371" r="7" fill="url(#gg)"/><circle cx="296" cy="435" r="7" fill="url(#gg)"/><circle cx="424" cy="435" r="7" fill="url(#gg)"/><circle cx="552" cy="435" r="7" fill="url(#gg)"/><circle cx="680" cy="435" r="7" fill="url(#gg)"/><circle cx="232" cy="499" r="7" fill="url(#gg)"/><circle cx="360" cy="499" r="7" fill="url(#gg)"/><circle cx="488" cy="499" r="7" fill="url(#gg)"/><circle cx="616" cy="499" r="7" fill="url(#gg)"/><circle cx="744" cy="499" r="7" fill="url(#gg)"/><circle cx="296" cy="563" r="7" fill="url(#gg)"/><circle cx="424" cy="563" r="7" fill="url(#gg)"/><circle cx="552" cy="563" r="7" fill="url(#gg)"/><circle cx="680" cy="563" r="7" fill="url(#gg)"/><circle cx="232" cy="627" r="7" fill="url(#gg)"/><circle cx="360" cy="627" r="7" fill="url(#gg)"/><circle cx="488" cy="627" r="7" fill="url(#gg)"/><circle cx="616" cy="627" r="7" fill="url(#gg)"/><circle cx="744" cy="627" r="7" fill="url(#gg)"/><rect x="894" y="639" width="68" height="86" fill="#676698" stroke="#a0a0a8" stroke-width="4"/><circle cx="910" cy="655" r="12" fill="url(#gm)"/><line x1="925" y1="655" x2="952" y2="655" stroke="#999" stroke-width="4"/><circle cx="910" cy="682" r="12" fill="url(#gy)"/><line x1="925" y1="682" x2="952" y2="682" stroke="#999" stroke-width="4"/><circle cx="910" cy="709" r="12" fill="url(#gg)"/><line x1="925" y1="709" x2="952" y2="709" stroke="#999" stroke-width="4"/></svg>
<svg class="a" style="left:0;top:0" width="1530" height="735" shape-rendering="crispEdges"><rect x="11" y="61" width="1" height="1" fill="#56627c"/><rect x="15" y="61" width="1" height="1" fill="#56627c"/><rect x="13" y="63" width="1" height="1" fill="#56627c"/><rect x="11" y="65" width="1" height="1" fill="#56627c"/><rect x="15" y="65" width="1" height="1" fill="#56627c"/><rect x="13" y="67" width="1" height="1" fill="#56627c"/><rect x="11" y="69" width="1" height="1" fill="#56627c"/><rect x="15" y="69" width="1" height="1" fill="#56627c"/><rect x="13" y="71" width="1" height="1" fill="#56627c"/><rect x="11" y="73" width="1" height="1" fill="#56627c"/><rect x="15" y="73" width="1" height="1" fill="#56627c"/><rect x="13" y="75" width="1" height="1" fill="#56627c"/><rect x="11" y="77" width="1" height="1" fill="#56627c"/><rect x="15" y="77" width="1" height="1" fill="#56627c"/></svg><svg class="a" style="left:0;top:0" width="1530" height="735" shape-rendering="crispEdges"><rect x="11" y="36" width="1" height="1" fill="#56627c"/><rect x="15" y="36" width="1" height="1" fill="#56627c"/><rect x="13" y="38" width="1" height="1" fill="#56627c"/><rect x="11" y="40" width="1" height="1" fill="#56627c"/><rect x="15" y="40" width="1" height="1" fill="#56627c"/><rect x="13" y="42" width="1" height="1" fill="#56627c"/><rect x="11" y="44" width="1" height="1" fill="#56627c"/><rect x="15" y="44" width="1" height="1" fill="#56627c"/><rect x="13" y="46" width="1" height="1" fill="#56627c"/><rect x="11" y="48" width="1" height="1" fill="#56627c"/><rect x="15" y="48" width="1" height="1" fill="#56627c"/><rect x="13" y="50" width="1" height="1" fill="#56627c"/><rect x="11" y="52" width="1" height="1" fill="#56627c"/><rect x="15" y="52" width="1" height="1" fill="#56627c"/></svg><svg class="a" style="left:25px;top:35px" width="15" height="15" viewBox="0 0 15 15"><path d="M0.5 0.5 H8 L11.5 4 V13.5 H0.5 Z" fill="#fff" stroke="#222"/><path d="M8 0.5 V4 H11.5" fill="none" stroke="#222"/><path d="M3.5 6.5 H12 L14.5 9 L8.5 14.5 L2 9 Z" fill="#4a6cff"/><path d="M2.5 9 H14 M5.5 6.5 L8.5 14 M11 6.5 L8.5 14 M8.3 6.5 L6.5 9 L8.5 14" fill="none" stroke="#c8d8ff" stroke-width="0.8"/></svg><svg class="a" style="left:26px;top:61px" width="15" height="16" viewBox="0 0 15 16"><rect x="3.5" y="4.5" width="10" height="11" fill="#fff" stroke="#111" stroke-width="1.2"/><g stroke="#e05010" stroke-width="1.1"><line x1="3.5" y1="0" x2="3.5" y2="7"/><line x1="0" y1="3.5" x2="7" y2="3.5"/><line x1="1" y1="1" x2="6" y2="6"/><line x1="6" y1="1" x2="1" y2="6"/></g><circle cx="3.5" cy="3.5" r="1.3" fill="#fff"/></svg><svg class="a" style="left:47px;top:61px" width="18" height="16" viewBox="0 0 18 16"><path d="M1 4 H6 L7 5 H12 V14 H1 Z" fill="#f8f0a0" stroke="#b0a050" stroke-width="0.8"/><path d="M3 8 H16 L12 14 H1 Z" fill="#f8b040" stroke="#a07020" stroke-width="0.8"/><path d="M10 3 Q13 0 15.5 3" fill="none" stroke="#2050e0" stroke-width="1.3"/><path d="M14 1.5 L16.5 4 L13.5 4.5 Z" fill="#2050e0"/></svg><svg class="a" style="left:71px;top:62px" width="14" height="14" viewBox="0 0 14 14" shape-rendering="crispEdges"><rect x="0" y="0" width="14" height="14" fill="#b8a880"/><rect x="1" y="1" width="12" height="12" fill="#6a70d8"/><rect x="3" y="1" width="8" height="6" fill="#fff"/><rect x="4" y="9" width="6" height="3" fill="#c8c098"/></svg><svg class="a" style="left:92px;top:62px" width="16" height="15" viewBox="0 0 16 15" shape-rendering="crispEdges"><rect x="3.5" y="0.5" width="3" height="3" fill="#fff" stroke="#2a3aa8"/><rect x="2.5" y="3.5" width="5" height="3" fill="#fff" stroke="#3848b8"/><rect x="0.5" y="6.5" width="7" height="8" fill="#9cc8f0" stroke="#2a3aa8"/><rect x="1.5" y="8.5" width="4" height="5" fill="#fff"/><rect x="11.5" y="0.5" width="3" height="3" fill="#fff" stroke="#2a3aa8"/><rect x="10.5" y="3.5" width="5" height="3" fill="#fff" stroke="#3848b8"/><rect x="8.5" y="6.5" width="7" height="8" fill="#9cc8f0" stroke="#2a3aa8"/><rect x="9.5" y="8.5" width="4" height="5" fill="#fff"/></svg><svg class="a" style="left:115px;top:62px" width="16" height="16" viewBox="0 0 16 16"><path d="M0.5 0.5 H8 L11 3 V14.5 H0.5 Z" fill="#fff" stroke="#111"/><circle cx="8" cy="9" r="3.5" fill="#e8ecf4" stroke="#555" stroke-width="1.2"/><path d="M10.5 11.5 L14 15" stroke="#e08020" stroke-width="2.2"/></svg><svg class="a" style="left:137px;top:62px" width="15" height="15" viewBox="0 0 15 15" shape-rendering="crispEdges"><rect x="3" y="0" width="9" height="5" fill="#fff" stroke="#222"/><rect x="0.5" y="5.5" width="14" height="5" fill="#d8d4a8" stroke="#333"/><rect x="2" y="7" width="1" height="1" fill="#ee0"/><rect x="4" y="7" width="1" height="1" fill="#ee0"/><rect x="3" y="10" width="9" height="4.5" fill="#fff" stroke="#222"/></svg><div class="a" style="left:157px;top:60px;width:1px;height:20px;background:#7a8599"></div><div class="a" style="left:158px;top:60px;width:1px;height:20px;background:#f4f6fa"></div><svg class="a" style="left:165px;top:62px" width="14" height="15" viewBox="0 0 14 15"><path d="M3 0 L8 10 M11 0 L6 10" stroke="#555" stroke-width="1.3"/><circle cx="4" cy="12" r="2.2" fill="none" stroke="#1030f0" stroke-width="1.3"/><circle cx="10" cy="12" r="2.2" fill="none" stroke="#1030f0" stroke-width="1.3"/></svg><svg class="a" style="left:186px;top:62px" width="15" height="15" viewBox="0 0 15 15" shape-rendering="crispEdges"><rect x="0.5" y="0.5" width="8" height="9" fill="#fff" stroke="#111" stroke-width="1.2"/><rect x="6.5" y="4.5" width="8" height="10" fill="#fff" stroke="#111" stroke-width="1.4"/></svg><svg class="a" style="left:208px;top:62px" width="16" height="15" viewBox="0 0 16 15" shape-rendering="crispEdges"><rect x="0.5" y="2.5" width="11" height="11" fill="#e8e8e8" stroke="#333"/><rect x="3" y="1" width="6" height="3" fill="#fff" stroke="#333"/><rect x="6.5" y="7.5" width="9" height="7" fill="#fff" stroke="#111" stroke-width="1.2"/></svg><div class="a" style="left:229px;top:60px;width:1px;height:20px;background:#7a8599"></div><div class="a" style="left:230px;top:60px;width:1px;height:20px;background:#f4f6fa"></div><svg class="a" style="left:237px;top:62px" width="14" height="14" viewBox="0 0 14 14"><path d="M3 4 Q7 1 10 4 Q12 8 6 13" fill="none" stroke="#444" stroke-width="1.6"/><path d="M0.5 6 L2 1.5 L6 4.5 Z" fill="#444"/></svg><svg class="a" style="left:259px;top:67px" width="6" height="4" viewBox="0 0 6 4"><path d="M0 0 H5 L2.5 3 Z" fill="#8a94a8"/></svg><svg class="a" style="left:270px;top:62px" width="14" height="14" viewBox="0 0 14 14"><path d="M11 4 Q7 1 4 4 Q2 8 8 13" fill="none" stroke="#444" stroke-width="1.6"/><path d="M13.5 6 L12 1.5 L8 4.5 Z" fill="#444"/></svg><svg class="a" style="left:292px;top:67px" width="6" height="4" viewBox="0 0 6 4"><path d="M0 0 H5 L2.5 3 Z" fill="#8a94a8"/></svg><div class="a" style="left:301px;top:60px;width:1px;height:20px;background:#7a8599"></div><div class="a" style="left:302px;top:60px;width:1px;height:20px;background:#f4f6fa"></div><svg class="a" style="left:308px;top:61px" width="16" height="16" viewBox="0 0 16 16"><path d="M3 9 Q1.5 7.5 2.5 6.5 Q3.5 6 5 7.5 V3.5 Q5 2.5 6 2.5 Q7 2.5 7 3.5 V2 Q7 1 8 1 Q9 1 9 2 V3 Q9 2 10 2 Q11 2 11 3 V4.5 Q11 3.5 12 3.5 Q13 3.5 13 4.5 V10 Q13 15 8.5 15 Q5 15 3 9 Z" fill="#fff" stroke="#222" stroke-width="1"/><path d="M7 4 V8 M9 3 V8 M11 4.5 V8" stroke="#222" stroke-width="0.8"/></svg><svg class="a" style="left:331px;top:62px" width="10" height="15" viewBox="0 0 10 15"><path d="M1 0.5 L1 12 L4 9.5 L6.5 14 L8 13 L5.5 8.5 L9 8 Z" fill="#fff" stroke="#222" stroke-width="1"/></svg><svg class="a" style="left:352px;top:67px" width="6" height="4" viewBox="0 0 6 4"><path d="M0 0 H5 L2.5 3 Z" fill="#8a94a8"/></svg><div class="a" style="left:362px;top:60px;width:1px;height:20px;background:#7a8599"></div><div class="a" style="left:363px;top:60px;width:1px;height:20px;background:#f4f6fa"></div><svg class="a" style="left:369px;top:61px" width="16" height="15" viewBox="0 0 16 15" shape-rendering="crispEdges"><rect x="0.5" y="0.5" width="15" height="14" fill="#fff" stroke="#1f2a6e"/><rect x="1" y="1" width="14" height="2" fill="#3b6de0"/><path d="M3 4 H6 M4 4 V13 M4 7 H12 M4 10 H12 M4 13 H12" stroke="#c8c080" stroke-width="1"/><path d="M6 7 H12 M6 10 H12 M6 13 H12" stroke="#555" stroke-width="1"/></svg><svg class="a" style="left:391px;top:61px" width="16" height="15" viewBox="0 0 16 15" shape-rendering="crispEdges"><rect x="0.5" y="0.5" width="15" height="14" fill="#fff" stroke="#1f2a6e"/><rect x="1" y="1" width="14" height="2" fill="#3b6de0"/><rect x="2.5" y="4.5" width="5" height="3" fill="#9cc8ec" stroke="#555"/><rect x="2.5" y="9.5" width="5" height="3" fill="#9cc8ec" stroke="#555"/><rect x="10" y="4" width="1" height="9" fill="#555"/></svg><svg class="a" style="left:413px;top:61px" width="16" height="15" viewBox="0 0 16 15"><rect x="0.5" y="0.5" width="15" height="14" fill="#fff" stroke="#1f2a6e"/><rect x="1" y="1" width="14" height="2" fill="#3b6de0"/><circle cx="9" cy="9" r="4.8" fill="#e4e4e4" stroke="#999"/><path d="M9 6.5 V9 H11" stroke="#666" fill="none"/><path d="M2.5 10 Q2.5 5.5 6 4.5" fill="none" stroke="#20b020" stroke-width="1.8"/><path d="M5 2.8 L8 4.6 L5.2 6.6 Z" fill="#20b020"/></svg><svg class="a" style="left:435px;top:61px" width="16" height="15" viewBox="0 0 16 15"><rect x="0.5" y="0.5" width="15" height="14" fill="#fff" stroke="#1f2a6e"/><rect x="1" y="1" width="14" height="2" fill="#3b6de0"/><path d="M5 7 Q9 3 12 7 Q13 11 9 13" fill="none" stroke="#1040e0" stroke-width="2"/><path d="M2 6 L6 3.5 L6.5 9 Z" fill="#1040e0"/></svg><svg class="a" style="left:457px;top:61px" width="16" height="15" viewBox="0 0 16 15"><rect x="0.5" y="0.5" width="15" height="14" fill="#fff" stroke="#1f2a6e"/><rect x="1" y="1" width="14" height="2" fill="#3b6de0"/><path d="M4 8 Q5 4 9 4 L11 5 M12 9 Q11 12 7 12 L5 11" fill="none" stroke="#d09020" stroke-width="1.8"/><path d="M10 3 L13 6 L9.5 7 Z M6 13 L3 10 L6.5 9 Z" fill="#d09020"/></svg><div class="a" style="left:478px;top:60px;width:1px;height:20px;background:#7a8599"></div><div class="a" style="left:479px;top:60px;width:1px;height:20px;background:#f4f6fa"></div><svg class="a" style="left:485px;top:61px" width="17" height="16" viewBox="0 0 17 16"><rect x="0.5" y="0.5" width="14" height="10" fill="#fff" stroke="#777"/><rect x="1" y="1" width="13" height="2" fill="#3b6de0"/><path d="M3 5 H7 M3 7 H7 M9 5 H12" stroke="#666"/><rect x="1" y="1" width="2" height="2" fill="#ee0"/><rect x="5" y="7" width="11" height="8" fill="#f0c000" stroke="#d0a000"/><path d="M7 9.5 H15 M7 12.5 H15 M8.5 8 V15 M11 8 V15 M13.5 8 V15" stroke="#ffe060" stroke-width="0.8"/></svg><svg class="a" style="left:507px;top:61px" width="16" height="16" viewBox="0 0 16 16"><rect x="0.5" y="0.5" width="14" height="10" fill="#f0f0f0" stroke="#999"/><rect x="1" y="1" width="13" height="2" fill="#b0b4bc"/><path d="M3 5 H7 M3 7 H9" stroke="#aaa"/><path d="M10 8 L13 11 H11.5 V15 H8.5 V11 H7 Z" fill="#e4e4e4" stroke="#c8c8c8"/></svg><svg class="a" style="left:529px;top:61px" width="16" height="16" viewBox="0 0 16 16"><rect x="0.5" y="0.5" width="14" height="10" fill="#f0f0f0" stroke="#999"/><rect x="1" y="1" width="13" height="2" fill="#b0b4bc"/><path d="M3 5 H7 M3 7 H9" stroke="#aaa"/><path d="M10 15 L13 12 H11.5 V8 H8.5 V12 H7 Z" fill="#e4e4e4" stroke="#c8c8c8"/></svg><div class="a" style="left:550px;top:60px;width:1px;height:20px;background:#7a8599"></div><div class="a" style="left:551px;top:60px;width:1px;height:20px;background:#f4f6fa"></div><svg class="a" style="left:558px;top:61px" width="14" height="14" viewBox="0 0 14 14" shape-rendering="crispEdges"><rect x="0.5" y="1.5" width="3" height="2" fill="#fff" stroke="#111"/><rect x="0.5" y="5.5" width="3" height="2" fill="#fff" stroke="#111"/><rect x="0.5" y="9.5" width="3" height="2" fill="#fff" stroke="#111"/><path d="M6 2 H13 M6 4 H13 M6 6 H13 M6 8 H13 M6 10 H13 M6 12 H13" stroke="#b8bcc4"/></svg><svg class="a" style="left:579px;top:67px" width="6" height="4" viewBox="0 0 6 4"><path d="M0 0 H5 L2.5 3 Z" fill="#1e2a4a"/></svg><svg class="a" style="left:590px;top:61px" width="17" height="16" viewBox="0 0 17 16" shape-rendering="crispEdges"><rect x="0" y="0" width="7" height="3" fill="#d8d8d8" stroke="#999"/><rect x="0.5" y="2.5" width="15" height="12" fill="#d8d8d8" stroke="#aaa"/><rect x="1" y="5" width="14" height="8" fill="#1a1a1a"/><path d="M9.5 6 L11.5 8 M13.5 8 L11.5 6 M9.5 12 L11.5 10 M13.5 10 L11.5 12" stroke="#999"/></svg><div class="a" style="left:609px;top:58px;width:22px;height:22px;background:#fdf4d4;border:1px solid #f2d890"></div><svg class="a" style="left:612px;top:62px" width="16" height="15" viewBox="0 0 16 15" shape-rendering="crispEdges"><rect x="0.5" y="0.5" width="15" height="14" fill="#fff" stroke="#1f2a6e"/><rect x="1" y="1" width="14" height="2" fill="#3b6de0"/><rect x="13" y="3" width="2" height="11" fill="#d0d0d0"/></svg><svg class="a" style="left:612px;top:62px" width="16" height="15" viewBox="0 0 16 15"><path d="M3 5 L6.5 8.5 L3 12 M7 5 L10.5 8.5 L7 12" fill="none" stroke="#1a2060" stroke-width="2.2"/></svg><svg class="a" style="left:634px;top:61px" width="17" height="16" viewBox="0 0 17 16"><rect x="3.5" y="3.5" width="12" height="11" fill="#fff" stroke="#1f2a6e"/><rect x="4" y="4" width="11" height="2" fill="#3b6de0"/><circle cx="3.5" cy="3.5" r="3.2" fill="#f8f080"/><g stroke="#e8d000" stroke-width="0.8"><line x1="0" y1="3.5" x2="7" y2="3.5"/><line x1="3.5" y1="0" x2="3.5" y2="7"/></g></svg><svg class="a" style="left:656px;top:61px" width="17" height="16" viewBox="0 0 17 16"><rect x="0.5" y="0.5" width="10" height="8" fill="#a8d0f8" stroke="#3b8ae8"/><rect x="4.5" y="5.5" width="11" height="9" fill="#fff" stroke="#111" stroke-width="1.1"/><rect x="5" y="6" width="10" height="2" fill="#3b6de0"/><path d="M7 13 L9 10 L11 11 L13 9 L14 13 Z" fill="#c88020"/><circle cx="9" cy="10" r="0.8" fill="#e02020"/></svg><svg class="a" style="left:678px;top:61px" width="18" height="16" viewBox="0 0 18 16"><rect x="6.5" y="6.5" width="10" height="8" fill="#b0b0b0" stroke="#777"/><rect x="0.5" y="0.5" width="11" height="9" fill="#fff" stroke="#111" stroke-width="1.1"/><rect x="1" y="1" width="10" height="2" fill="#3b6de0"/><path d="M3 8 L5 5 L7 6 L9 4 L10 8 Z" fill="#c88020"/><circle cx="5" cy="5" r="0.8" fill="#e02020"/><path d="M12 2 Q15 1 16 4" fill="none" stroke="#2040d0" stroke-width="1.2"/><path d="M14.5 4.5 L17 3 L16.5 6 Z" fill="#2040d0"/></svg><svg class="a" style="left:700px;top:61px" width="17" height="16" viewBox="0 0 17 16"><rect x="0.5" y="0.5" width="10" height="7" fill="#e8e8e8" stroke="#888"/><rect x="4.5" y="5.5" width="11" height="9" fill="#fff" stroke="#111" stroke-width="1.1"/><rect x="5" y="6" width="10" height="2" fill="#3b6de0"/><path d="M7 13 L9 10 L11 11 L13 9 L14 13 Z" fill="#c88020"/><circle cx="9" cy="10" r="0.8" fill="#e02020"/></svg><svg class="a" style="left:722px;top:61px" width="17" height="16" viewBox="0 0 17 16"><rect x="0.5" y="0.5" width="9" height="8" fill="#e8e0c0" stroke="#a09070"/><rect x="3" y="3" width="11" height="6" fill="#f0c000"/><rect x="5.5" y="6.5" width="11" height="9" fill="#fff" stroke="#111" stroke-width="1.1"/><rect x="6" y="7" width="10" height="2" fill="#3b6de0"/><path d="M8 14 L10 11 L12 12 L14 10 L15 14 Z" fill="#c88020"/><circle cx="10" cy="11" r="0.8" fill="#e02020"/></svg><svg class="a" style="left:744px;top:61px" width="16" height="16" viewBox="0 0 16 16"><circle cx="9" cy="9.5" r="5.8" fill="#e8e8e8" stroke="#a0a0a0"/><path d="M9 6.5 V9.5 H11.5" stroke="#777" fill="none"/><path d="M2 10 Q1.5 4 7 2.5" fill="none" stroke="#30b830" stroke-width="2.4"/><path d="M5.5 0.2 L9.5 2.8 L5.8 5.2 Z" fill="#30b830"/></svg><svg class="a" style="left:766px;top:67px" width="6" height="4" viewBox="0 0 6 4"><path d="M0 0 H5 L2.5 3 Z" fill="#1e2a4a"/></svg><svg class="a" style="left:776px;top:61px" width="18" height="16" viewBox="0 0 18 16"><rect x="6.5" y="0.5" width="11" height="9" fill="#fff" stroke="#111" stroke-width="1.1"/><rect x="7" y="1" width="10" height="2" fill="#3b6de0"/><path d="M9 8 L11 5 L13 6 L15 4 L16 8 Z" fill="#c88020"/><circle cx="11" cy="5" r="0.8" fill="#e02020"/><path d="M0.5 10.5 L4 7 V9 H9 V12 H4 V14 Z" fill="#9ccaf8" stroke="#1f3aa0"/></svg><svg class="a" style="left:799px;top:61px" width="18" height="16" viewBox="0 0 18 16"><rect x="0.5" y="0.5" width="11" height="9" fill="#fff" stroke="#111" stroke-width="1.1"/><rect x="1" y="1" width="10" height="2" fill="#3b6de0"/><path d="M3 8 L5 5 L7 6 L9 4 L10 8 Z" fill="#c88020"/><circle cx="5" cy="5" r="0.8" fill="#e02020"/><path d="M17 10.5 L13 7 V9 H8 V12 H13 V14 Z" fill="#9ccaf8" stroke="#1f3aa0"/></svg><svg class="a" style="left:821px;top:67px" width="6" height="4" viewBox="0 0 6 4"><path d="M0 0 H5 L2.5 3 Z" fill="#1e2a4a"/></svg><div class="a" style="left:831px;top:60px;width:1px;height:20px;background:#7a8599"></div><div class="a" style="left:832px;top:60px;width:1px;height:20px;background:#f4f6fa"></div><svg class="a" style="left:838px;top:62px" width="16" height="15" viewBox="0 0 16 15" shape-rendering="crispEdges"><rect x="0.5" y="0.5" width="14" height="13" fill="#fff" stroke="#1f2a6e"/><rect x="1" y="1" width="13" height="2" fill="#3b6de0"/><path d="M2 5 H13 M2 7 H13 M2 9 H13 M2 11 H13" stroke="#555"/></svg><svg class="a" style="left:860px;top:62px" width="16" height="15" viewBox="0 0 16 15"><rect x="0.5" y="0.5" width="14" height="13" fill="#fff" stroke="#1f2a6e"/><rect x="1" y="1" width="13" height="2" fill="#3b6de0"/><circle cx="4.5" cy="6.5" r="2" fill="#f01010"/><circle cx="4.5" cy="10.5" r="2" fill="#1030e0"/><path d="M8 6.5 H12 M8 10.5 H12" stroke="#666" stroke-width="1.2"/></svg><svg class="a" style="left:882px;top:62px" width="16" height="15" viewBox="0 0 16 15" shape-rendering="crispEdges"><rect x="0.5" y="0.5" width="14" height="13" fill="#fff" stroke="#1f2a6e"/><rect x="1" y="1" width="13" height="2" fill="#3b6de0"/><path d="M1 6 H14 M1 9 H14 M1 12 H14 M5 3 V14 M9 3 V14" stroke="#c8ccd4"/></svg><svg class="a" style="left:904px;top:67px" width="6" height="4" viewBox="0 0 6 4"><path d="M0 0 H5 L2.5 3 Z" fill="#1e2a4a"/></svg><svg class="a" style="left:915px;top:62px" width="16" height="15" viewBox="0 0 16 15"><rect x="0.5" y="0.5" width="14" height="13" fill="#fff" stroke="#1f2a6e"/><rect x="1" y="1" width="13" height="2" fill="#3b6de0"/><path d="M7.5 4.5 L3.5 11.5 H11.5 Z" fill="none" stroke="#111" stroke-width="1.1"/></svg><svg class="a" style="left:937px;top:62px" width="16" height="15" viewBox="0 0 16 15" shape-rendering="crispEdges"><rect x="0.5" y="0.5" width="14" height="13" fill="#fff" stroke="#1f2a6e"/><rect x="1" y="1" width="13" height="2" fill="#3b6de0"/><path d="M2 12.5 H13" stroke="#1030e0"/><path d="M3.5 12 V9 M5.5 12 V5 M7.5 12 V8 M9.5 12 V6 M11.5 12 V9" stroke="#1030e0" stroke-width="1"/></svg><svg class="a" style="left:959px;top:62px" width="16" height="15" viewBox="0 0 16 15" shape-rendering="crispEdges"><rect x="0.5" y="0.5" width="14" height="13" fill="#fff" stroke="#1f2a6e"/><rect x="1" y="1" width="13" height="2" fill="#3b6de0"/><rect x="2" y="4" width="5" height="2" fill="#c8c8c8"/><rect x="2" y="7" width="5" height="2" fill="#c8c8c8"/><rect x="2" y="10" width="5" height="2" fill="#c8c8c8"/><rect x="8" y="4" width="5" height="2" fill="#f8e040"/><rect x="8" y="7" width="5" height="2" fill="#f89030"/><rect x="8" y="10" width="5" height="2" fill="#f8f040"/></svg><div class="a" style="left:980px;top:60px;width:1px;height:20px;background:#7a8599"></div><div class="a" style="left:981px;top:60px;width:1px;height:20px;background:#f4f6fa"></div><svg class="a" style="left:987px;top:61px" width="17" height="17" viewBox="0 0 17 17"><defs><radialGradient id="hg" cx="0.4" cy="0.35" r="0.7"><stop offset="0" stop-color="#f4f6fa"/><stop offset="0.6" stop-color="#a8b4c8"/><stop offset="1" stop-color="#4a5a78"/></radialGradient></defs><circle cx="8.5" cy="8.5" r="8" fill="url(#hg)"/><circle cx="8.5" cy="8.5" r="7.5" fill="none" stroke="#5a6a88" stroke-width="1"/><path d="M6 7.5 Q5.5 3.5 9 3.5 Q12.5 3.5 12 7 Q11.5 9.5 8.5 9.5" fill="none" stroke="#1a5ae0" stroke-width="2.2"/><path d="M8.5 9.5 L4.5 15" stroke="#1a5ae0" stroke-width="2.2"/><circle cx="9" cy="6.5" r="1.4" fill="#0a2a80"/></svg><svg class="a" style="left:1010px;top:62px" width="14" height="14" viewBox="0 0 14 14"><rect x="0.5" y="4.5" width="12" height="8" rx="1" fill="#dcdcdc" stroke="#c4c4c4"/><circle cx="6.5" cy="8.5" r="2.5" fill="none" stroke="#c4c4c4"/><rect x="0" y="0" width="1" height="1" fill="#222"/></svg><svg class="a" style="left:1030px;top:62px" width="18" height="16" viewBox="0 0 18 16"><circle cx="3.2" cy="2.8" r="2.3" fill="#111"/><circle cx="8.8" cy="2.8" r="2.3" fill="#111"/><rect x="1" y="4.5" width="10" height="4.5" fill="#111"/><path d="M11 6.8 L14 5 V8.6 Z" fill="#111"/><path d="M2.5 9 L1 13 M9 9 L10.5 13" stroke="#111" stroke-width="1.4"/><circle cx="13.5" cy="12" r="3" fill="#7a7a7a"/></svg><svg class="a" style="left:1054px;top:67px" width="6" height="4" viewBox="0 0 6 4"><path d="M0 0 H5 L2.5 3 Z" fill="#a8aebc"/></svg><svg class="a" style="left:1063px;top:72px" width="8" height="5" viewBox="0 0 8 5"><path d="M0 1 H7 L3.5 4.5 Z" fill="#222"/></svg>
<svg class="a" style="left:0;top:0" width="1530" height="735" shape-rendering="crispEdges"><rect x="11" y="693" width="1" height="1" fill="#56627c"/><rect x="15" y="693" width="1" height="1" fill="#56627c"/><rect x="13" y="695" width="1" height="1" fill="#56627c"/><rect x="11" y="697" width="1" height="1" fill="#56627c"/><rect x="15" y="697" width="1" height="1" fill="#56627c"/><rect x="13" y="699" width="1" height="1" fill="#56627c"/><rect x="11" y="701" width="1" height="1" fill="#56627c"/><rect x="15" y="701" width="1" height="1" fill="#56627c"/><rect x="13" y="703" width="1" height="1" fill="#56627c"/><rect x="11" y="705" width="1" height="1" fill="#56627c"/><rect x="15" y="705" width="1" height="1" fill="#56627c"/><rect x="13" y="707" width="1" height="1" fill="#56627c"/><rect x="11" y="709" width="1" height="1" fill="#56627c"/><rect x="15" y="709" width="1" height="1" fill="#56627c"/></svg><svg class="a" style="left:26px;top:694px" width="17" height="15" viewBox="0 0 17 15"><rect x="0.5" y="0.5" width="16" height="14" fill="#fff" stroke="#1f2a6e"/><rect x="1" y="1" width="6" height="13" fill="#a8ccf0"/><rect x="7" y="1" width="9" height="2" fill="#a0a0a0"/><path d="M6 8 Q6 4.5 10 4.5 L12 5.5 M13 8 Q13 11 9 11 L7 10.5" fill="none" stroke="#b08a30" stroke-width="1.8"/><path d="M11 3.5 L14 6 L10.5 7 Z M8 12.5 L5 10 L8.5 9 Z" fill="#b08a30"/></svg><svg class="a" style="left:48px;top:694px" width="17" height="15" viewBox="0 0 17 15"><rect x="0.5" y="0.5" width="13" height="11" fill="#fff" stroke="#111"/><rect x="1" y="1" width="12" height="2" fill="#1f2a8e"/><path d="M2 5.5 H9 M2 7.5 H9 M2 9.5 H7" stroke="#111"/><path d="M6 10 H11 V8 L16 11.5 L11 15 V13 H6 Z" fill="#10e8f0" stroke="#111" stroke-width="0.7"/></svg><svg class="a" style="left:70px;top:694px" width="17" height="15" viewBox="0 0 17 15"><circle cx="2.5" cy="7" r="2.3" fill="#ee0" stroke="#333" stroke-width="0.6"/><circle cx="2.5" cy="12" r="2.3" fill="#ee0" stroke="#333" stroke-width="0.6"/><circle cx="6.5" cy="9.5" r="2.3" fill="#8a8a20" stroke="#333" stroke-width="0.6"/><path d="M5 2 L15.5 14" stroke="#1f2a8e" stroke-width="2"/><path d="M5 2 L7.5 5" stroke="#ee0" stroke-width="2"/><circle cx="11" cy="3" r="1" fill="#111"/><circle cx="14" cy="6" r="1" fill="#111"/><circle cx="1" cy="0.8" r="0.7" fill="#111"/></svg><svg class="a" style="left:92px;top:694px" width="17" height="15" viewBox="0 0 17 15"><rect x="5.5" y="0.5" width="11" height="12" fill="#fff" stroke="#555"/><path d="M1 14 L8 6" stroke="#600" stroke-width="1.6"/><path d="M6 3 L9 1 L12 5 L10 7 L8 5 L6 6 Z" fill="#ee0" stroke="#333" stroke-width="0.6"/></svg><svg class="a" style="left:114px;top:699px" width="7" height="4" viewBox="0 0 7 4"><path d="M0 0 H6 L3.0 3 Z" fill="#1e2a4a"/></svg><div class="a" style="left:124px;top:692px;width:1px;height:19px;background:#7a8599"></div><div class="a" style="left:125px;top:692px;width:1px;height:19px;background:#f4f6fa"></div><svg class="a" style="left:130px;top:694px" width="17" height="15" viewBox="0 0 17 15"><path d="M1 0.5 L16 14.5 M16 0.5 L1 14.5" stroke="#111" stroke-width="2.2"/><circle cx="8.5" cy="7.5" r="4.2" fill="#ee0" stroke="#f010f0" stroke-width="2"/></svg><div class="a" style="left:152px;top:692px;width:1px;height:19px;background:#7a8599"></div><div class="a" style="left:153px;top:692px;width:1px;height:19px;background:#f4f6fa"></div><svg class="a" style="left:160px;top:694px" width="16" height="14" viewBox="0 0 16 14"><path d="M0.5 6 L4 2 L6 2" fill="none" stroke="#111" stroke-width="1.4"/><path d="M2 8 L7 2 L14 7 L9 13 Z" fill="#d8d8d8" stroke="#111"/><path d="M3.5 9 L6.5 5.5 L11 9 L8.5 12 Z" fill="#ee0"/><path d="M7 2 L14 7 L12 9 L5 4 Z" fill="#888"/></svg><svg class="a" style="left:181px;top:694px" width="17" height="15" viewBox="0 0 17 15"><path d="M0.5 3.5 H6 M3 0.5 V6" stroke="#111" stroke-width="1.6"/><circle cx="12" cy="3.8" r="3.4" fill="#ee0" stroke="#111" stroke-width="0.8"/><circle cx="4.5" cy="11" r="3.4" fill="#ee0" stroke="#111" stroke-width="0.8"/><circle cx="12" cy="11" r="3.4" fill="#ee0" stroke="#111" stroke-width="0.8"/></svg><svg class="a" style="left:203px;top:697px" width="17" height="10" viewBox="0 0 17 10"><path d="M0.5 4.5 H7 M4 1 V8" stroke="#111" stroke-width="1.8"/><path d="M7 4.5 H9" stroke="#111"/><circle cx="12" cy="4.5" r="3.4" fill="#ee0" stroke="#111" stroke-width="0.8"/></svg><svg class="a" style="left:225px;top:694px" width="17" height="15" viewBox="0 0 17 15"><circle cx="3.5" cy="11" r="2.6" fill="#fff" stroke="#111" stroke-width="0.9"/><circle cx="13" cy="11" r="2.6" fill="#fff" stroke="#111" stroke-width="0.9"/><path d="M5.5 3 Q6 0.5 8.5 0.5 Q11 0.5 11 3 Q11 5 8.5 6 V8" fill="none" stroke="#111" stroke-width="1.5"/><rect x="7.8" y="9.5" width="1.5" height="1.5" fill="#111"/></svg><svg class="a" style="left:247px;top:694px" width="17" height="15" viewBox="0 0 17 15"><rect x="3" y="2.5" width="11" height="10" fill="none" stroke="#1030f0" stroke-width="1.2"/><path d="M3 2.5 L14 12.5 M14 2.5 L3 12.5" stroke="#1030f0" stroke-width="1"/><circle cx="3" cy="2.5" r="2.2" fill="#fff" stroke="#111" stroke-width="0.8"/><circle cx="14" cy="2.5" r="2.2" fill="#fff" stroke="#111" stroke-width="0.8"/><circle cx="3" cy="12.5" r="2.2" fill="#fff" stroke="#111" stroke-width="0.8"/><circle cx="14" cy="12.5" r="2.2" fill="#fff" stroke="#111" stroke-width="0.8"/></svg><svg class="a" style="left:270px;top:694px" width="16" height="15" viewBox="0 0 16 15"><circle cx="3" cy="11.5" r="2.5" fill="#fff" stroke="#111" stroke-width="0.9"/><circle cx="12.5" cy="11.5" r="2.5" fill="#fff" stroke="#111" stroke-width="0.9"/><path d="M6 0.5 H10 V5 H12.5 L8 10 L3.5 5 H6 Z" fill="#fff" stroke="#111" stroke-width="0.9"/></svg><svg class="a" style="left:292px;top:694px" width="15" height="15" viewBox="0 0 15 15"><circle cx="7.5" cy="7.5" r="6.5" fill="none" stroke="#111" stroke-width="1" stroke-dasharray="1 1.2"/><circle cx="7.5" cy="7.5" r="4" fill="#807a10" stroke="#222" stroke-width="0.6"/></svg><svg class="a" style="left:313px;top:699px" width="7" height="4" viewBox="0 0 7 4"><path d="M0 0 H6 L3.0 3 Z" fill="#1e2a4a"/></svg><div class="a" style="left:323px;top:692px;width:1px;height:19px;background:#7a8599"></div><div class="a" style="left:324px;top:692px;width:1px;height:19px;background:#f4f6fa"></div><svg class="a" style="left:330px;top:694px" width="16" height="15" viewBox="0 0 16 15"><path d="M4 1 H12 L15.5 7.5 L12 14 H4 L0.5 7.5 Z" fill="none" stroke="#1030f0" stroke-width="1.8"/></svg><svg class="a" style="left:352px;top:694px" width="16" height="15" viewBox="0 0 16 15"><path d="M4 1 H12 L15.5 7.5 L12 14 H8" fill="none" stroke="#ee0" stroke-width="1.8"/><path d="M8 14 H4 L0.5 7.5 L4 1" fill="none" stroke="#1030f0" stroke-width="1.8"/></svg><svg class="a" style="left:374px;top:694px" width="17" height="15" viewBox="0 0 17 15"><path d="M4 1 H10 L12 3 L10 5 H4 L2 3 Z" fill="none" stroke="#1030f0" stroke-width="1.1"/><path d="M1.5 4.5 H12.5 V12.5 H1.5 Z M4 2 V10.5 H14" fill="none" stroke="#888" stroke-width="1.1"/><path d="M7 9 H13 L15.5 11.5 L13 14 H7 L4.5 11.5 Z" fill="none" stroke="#1030f0" stroke-width="1.1"/></svg><svg class="a" style="left:397px;top:694px" width="16" height="15" viewBox="0 0 16 15"><path d="M1.5 1.5 L8.5 13.5 M8.5 1.5 L1.5 13.5 M7.5 1.5 L14.5 13.5 M14.5 1.5 L7.5 13.5" stroke="#111" stroke-width="1.5"/><path d="M0.5 0.5 L2.5 3 M9 0.5 L7.5 3 M7 0.5 L8.5 3 M15.5 0.5 L13.5 3 M0.5 14.5 L2.5 12 M9 14.5 L7.5 12 M7 14.5 L8.5 12 M15.5 14.5 L13.5 12" stroke="#1030f0" stroke-width="2"/></svg><svg class="a" style="left:419px;top:694px" width="16" height="15" viewBox="0 0 16 15"><path d="M1.5 1.5 L8.5 13.5 M8.5 1.5 L1.5 13.5 M7.5 1.5 L14.5 13.5 M14.5 1.5 L7.5 13.5" stroke="#111" stroke-width="1.5"/><path d="M0.5 0.5 L2.5 3 M9 0.5 L7.5 3 M7 0.5 L8.5 3 M15.5 0.5 L13.5 3 M0.5 14.5 L2.5 12 M9 14.5 L7.5 12 M7 14.5 L8.5 12 M15.5 14.5 L13.5 12" stroke="#e01010" stroke-width="2"/></svg><div class="a" style="left:439px;top:692px;width:1px;height:19px;background:#7a8599"></div><div class="a" style="left:440px;top:692px;width:1px;height:19px;background:#f4f6fa"></div><svg class="a" style="left:446px;top:694px" width="16" height="15" viewBox="0 0 16 15"><path d="M4 11 L12 4" stroke="#1030f0" stroke-width="2.6"/><path d="M4 11 L12 4" stroke="#a8ccf0" stroke-width="0.9"/><circle cx="4" cy="11.5" r="3.2" fill="#b8d8f0" stroke="#111" stroke-width="0.8"/><circle cx="12" cy="3.5" r="3.2" fill="#ee0" stroke="#111" stroke-width="0.8"/></svg><svg class="a" style="left:468px;top:694px" width="17" height="15" viewBox="0 0 17 15"><path d="M5 5 H11 L13 8 L11 11 H5 L3 8 Z" fill="none" stroke="#111" stroke-width="1.1"/><path d="M1.5 1.5 L5 5 M15.5 1.5 L11 5 M1.5 13.5 L5 11 M15.5 13.5 L11 11" stroke="#1030f0" stroke-width="1.8"/><rect x="0" y="0" width="4" height="2.5" fill="#ee0"/><rect x="13" y="0" width="4" height="2.5" fill="#ee0"/><rect x="0" y="12.5" width="4" height="2.5" fill="#ee0"/><rect x="13" y="12.5" width="4" height="2.5" fill="#ee0"/></svg><svg class="a" style="left:490px;top:694px" width="17" height="15" viewBox="0 0 17 15"><path d="M6 0.8 H12 L14.5 3.8 L12 6.8 H6 L3.5 3.8 Z" fill="none" stroke="#ee0" stroke-width="1.1"/><path d="M3 8 H9 L11.5 11 L9 14 H3 L0.5 11 Z" fill="none" stroke="#111" stroke-width="1.1"/></svg><svg class="a" style="left:512px;top:694px" width="17" height="15" viewBox="0 0 17 15"><path d="M6 0.8 H12 L14.5 3.8 L12 6.8 H6 L3.5 3.8 Z" fill="none" stroke="#777" stroke-width="1.1"/><path d="M3 8 H9 L11.5 11 L9 14 H3 L0.5 11 Z" fill="none" stroke="#111" stroke-width="1.1"/></svg><div class="a" style="left:533px;top:692px;width:1px;height:19px;background:#7a8599"></div><div class="a" style="left:534px;top:692px;width:1px;height:19px;background:#f4f6fa"></div><svg class="a" style="left:540px;top:694px" width="17" height="15" viewBox="0 0 17 15"><rect x="4.5" y="0.5" width="11" height="10" fill="none" stroke="#111" stroke-width="1.4"/><rect x="0.8" y="3.8" width="11" height="10.5" fill="none" stroke="#1030f0" stroke-width="1.4"/><path d="M0.8 3.8 L4.5 0.5 M11.8 14.3 L15.5 10.5" stroke="#1030f0" stroke-width="1"/></svg><svg class="a" style="left:563px;top:694px" width="16" height="15" viewBox="0 0 16 15"><path d="M8 0.5 L15 7.5 L8 14.5 L1 7.5 Z" fill="#fff" stroke="#111" stroke-width="1.4"/><path d="M8 0.5 V14.5 M1 7.5 L8 9.5 L15 7.5" stroke="#111" stroke-width="0.8"/></svg><svg class="a" style="left:584px;top:694px" width="17" height="15" viewBox="0 0 17 15"><g fill="#ee0" stroke="#333" stroke-width="0.5"><circle cx="2.5" cy="3" r="2"/><circle cx="8" cy="3" r="2"/><circle cx="13.5" cy="3" r="2"/><circle cx="2.5" cy="10" r="2"/><circle cx="8" cy="9" r="2"/><circle cx="13.5" cy="10" r="2"/></g><path d="M0.5 6 H16 M3 6 L14 13 M2 13 L15 2" stroke="#1030f0" stroke-width="1"/><path d="M1 3.5 L16 10.5 M1.5 14 L15.5 3" stroke="#f01010" stroke-width="2.2"/></svg><svg class="a" style="left:606px;top:699px" width="7" height="4" viewBox="0 0 7 4"><path d="M0 0 H6 L3.0 3 Z" fill="#1e2a4a"/></svg><svg class="a" style="left:616px;top:694px" width="18" height="15" viewBox="0 0 18 15"><circle cx="3.8" cy="11" r="3" fill="#fff" stroke="#111" stroke-width="1"/><text x="6" y="7" font-family="Liberation Sans" font-weight="bold" font-size="8.5" fill="#111">Fe</text></svg><div class="a" style="left:638px;top:692px;width:1px;height:19px;background:#7a8599"></div><div class="a" style="left:639px;top:692px;width:1px;height:19px;background:#f4f6fa"></div><svg class="a" style="left:645px;top:694px" width="16" height="15" viewBox="0 0 16 15"><rect x="0.5" y="0.5" width="15" height="14" fill="#fff" stroke="#1030f0" stroke-width="1.2"/><path d="M8 1.5 V13.5 M2 7.5 H14" stroke="#111" stroke-width="1.6"/><path d="M8 1 L5.5 4 H10.5 Z M8 14 L5.5 11 H10.5 Z M1.5 7.5 L4.5 5 V10 Z M14.5 7.5 L11.5 5 V10 Z" fill="#111"/><circle cx="8" cy="7.5" r="2.2" fill="#ee0"/></svg><svg class="a" style="left:667px;top:699px" width="7" height="4" viewBox="0 0 7 4"><path d="M0 0 H6 L3.0 3 Z" fill="#1e2a4a"/></svg><div class="a" style="left:677px;top:692px;width:1px;height:19px;background:#7a8599"></div><div class="a" style="left:678px;top:692px;width:1px;height:19px;background:#f4f6fa"></div><svg class="a" style="left:685px;top:695px" width="16" height="13" viewBox="0 0 16 13"><text x="0" y="11.5" font-family="Liberation Serif" font-weight="bold" font-style="italic" font-size="14.5" fill="#0a1a90">M</text></svg><svg class="a" style="left:707px;top:694px" width="15" height="15" viewBox="0 0 15 15"><rect x="0.6" y="0.6" width="13.8" height="13.8" fill="#fff" stroke="#0a1a90" stroke-width="1.2"/><circle cx="5.5" cy="5.5" r="3.2" fill="none" stroke="#f01010" stroke-width="1"/><circle cx="8.5" cy="8.5" r="3.6" fill="#108080"/></svg><div class="a" style="left:727px;top:692px;width:1px;height:19px;background:#7a8599"></div><div class="a" style="left:728px;top:692px;width:1px;height:19px;background:#f4f6fa"></div><svg class="a" style="left:734px;top:694px" width="17" height="15" viewBox="0 0 17 15"><path d="M4 0.5 V14.5 M12 0.5 V14.5 M0.5 4 H16.5 M0.5 11 H16.5" stroke="#b4b0a4" stroke-width="1.1"/></svg><svg class="a" style="left:754px;top:704px" width="8" height="5" viewBox="0 0 8 5"><path d="M0 1 H7 L3.5 4.5 Z" fill="#222"/></svg><div class="a" style="left:765px;top:688px;width:1px;height:25px;background:#eef0f6"></div><svg class="a" style="left:0;top:0" width="1530" height="735" shape-rendering="crispEdges"><rect x="777" y="693" width="1" height="1" fill="#56627c"/><rect x="781" y="693" width="1" height="1" fill="#56627c"/><rect x="779" y="695" width="1" height="1" fill="#56627c"/><rect x="777" y="697" width="1" height="1" fill="#56627c"/><rect x="781" y="697" width="1" height="1" fill="#56627c"/><rect x="779" y="699" width="1" height="1" fill="#56627c"/><rect x="777" y="701" width="1" height="1" fill="#56627c"/><rect x="781" y="701" width="1" height="1" fill="#56627c"/><rect x="779" y="703" width="1" height="1" fill="#56627c"/><rect x="777" y="705" width="1" height="1" fill="#56627c"/><rect x="781" y="705" width="1" height="1" fill="#56627c"/><rect x="779" y="707" width="1" height="1" fill="#56627c"/><rect x="777" y="709" width="1" height="1" fill="#56627c"/><rect x="781" y="709" width="1" height="1" fill="#56627c"/></svg><svg class="a" style="left:794px;top:694px" width="10" height="15" viewBox="0 0 10 15"><path d="M1 0.5 L1 12 L4 9.5 L6.5 14.5 L8.5 13.5 L6 8.5 L9.5 8 Z" fill="#fff" stroke="#111" stroke-width="1"/></svg><svg class="a" style="left:813px;top:694px" width="17" height="15" viewBox="0 0 17 15"><path d="M8.5 0.5 L11 5 L16 7.5 L11 10 L8.5 14.5 L6 10 L1 7.5 L6 5 Z" fill="#111"/><circle cx="8.5" cy="7.5" r="2" fill="#fff"/><path d="M8.5 5.5 V9.5 M6.5 7.5 H10.5" stroke="#111"/></svg><svg class="a" style="left:836px;top:694px" width="14" height="15" viewBox="0 0 14 15"><path d="M11 6 A5 5 0 1 1 7 2.5" fill="none" stroke="#111" stroke-width="2"/><path d="M6 0 L11 2.5 L6.5 6 Z" fill="#111"/></svg><svg class="a" style="left:857px;top:694px" width="16" height="15" viewBox="0 0 16 15"><path d="M8 0.5 L11 4 H9.3 V6.2 H11.5 V4.5 L15.5 7.5 L11.5 10.5 V8.8 H9.3 V11 H11 L8 14.5 L5 11 H6.7 V8.8 H4.5 V10.5 L0.5 7.5 L4.5 4.5 V6.2 H6.7 V4 H5 Z" fill="#111"/></svg><svg class="a" style="left:879px;top:694px" width="15" height="15" viewBox="0 0 15 15"><path d="M1 5 V1 H5 M10 1 H14 V5 M14 10 V14 H10 M5 14 H1 V10 M1 1 L5 5 M14 1 L10 5 M1 14 L5 10 M14 14 L10 10" fill="none" stroke="#111" stroke-width="1.3"/><circle cx="7.5" cy="7.5" r="2.5" fill="none" stroke="#111" stroke-width="1.6"/></svg><svg class="a" style="left:900px;top:694px" width="16" height="14" viewBox="0 0 16 14"><path d="M15 1.5 L1.5 7.5 L15 13" fill="none" stroke="#111" stroke-width="2"/><path d="M12 4 V11" stroke="#111" stroke-width="1.5" stroke-dasharray="1.5 1"/></svg><svg class="a" style="left:923px;top:694px" width="14" height="15" viewBox="0 0 14 15"><path d="M7 1 V13 M1 13 H13 M7 4 L1.5 9 M7 4 L12.5 9 M3 9 H11" fill="none" stroke="#111" stroke-width="1.7"/><circle cx="7" cy="2.5" r="1.5" fill="#111"/></svg><svg class="a" style="left:945px;top:694px" width="15" height="15" viewBox="0 0 15 15"><circle cx="7.5" cy="7.5" r="6.3" fill="none" stroke="#111" stroke-width="1.8" stroke-dasharray="1.6 1.6"/><rect x="4" y="4" width="7" height="7" fill="#fff" stroke="#111" stroke-width="1.5"/></svg><svg class="a" style="left:966px;top:694px" width="16" height="15" viewBox="0 0 16 15"><circle cx="5" cy="4.5" r="3.5" fill="none" stroke="#111" stroke-width="1.8" stroke-dasharray="1.5 1.3"/><rect x="3" y="2.5" width="4" height="4" fill="#fff" stroke="#111" stroke-width="1.2"/><rect x="9.5" y="7.5" width="2.5" height="7" fill="#e0e0e0" stroke="#b0b0b0" stroke-width="0.8"/><rect x="13" y="7.5" width="2.5" height="7" fill="#e0e0e0" stroke="#b0b0b0" stroke-width="0.8"/></svg><svg class="a" style="left:988px;top:694px" width="16" height="15" viewBox="0 0 16 15"><circle cx="5" cy="4.5" r="3.5" fill="none" stroke="#111" stroke-width="1.8" stroke-dasharray="1.5 1.3"/><rect x="3" y="2.5" width="4" height="4" fill="#fff" stroke="#111" stroke-width="1.2"/><rect x="8.5" y="8" width="7" height="6.5" fill="#8a8a8a" stroke="#555" stroke-width="0.8"/></svg><svg class="a" style="left:1009px;top:704px" width="8" height="5" viewBox="0 0 8 5"><path d="M0 1 H7 L3.5 4.5 Z" fill="#222"/></svg><div class="a" style="left:1020px;top:688px;width:1px;height:25px;background:#eef0f6"></div><svg class="a" style="left:0;top:0" width="1530" height="735" shape-rendering="crispEdges"><rect x="1032" y="693" width="1" height="1" fill="#56627c"/><rect x="1036" y="693" width="1" height="1" fill="#56627c"/><rect x="1034" y="695" width="1" height="1" fill="#56627c"/><rect x="1032" y="697" width="1" height="1" fill="#56627c"/><rect x="1036" y="697" width="1" height="1" fill="#56627c"/><rect x="1034" y="699" width="1" height="1" fill="#56627c"/><rect x="1032" y="701" width="1" height="1" fill="#56627c"/><rect x="1036" y="701" width="1" height="1" fill="#56627c"/><rect x="1034" y="703" width="1" height="1" fill="#56627c"/><rect x="1032" y="705" width="1" height="1" fill="#56627c"/><rect x="1036" y="705" width="1" height="1" fill="#56627c"/><rect x="1034" y="707" width="1" height="1" fill="#56627c"/><rect x="1032" y="709" width="1" height="1" fill="#56627c"/><rect x="1036" y="709" width="1" height="1" fill="#56627c"/></svg><svg class="a" style="left:1046px;top:694px" width="15" height="15" viewBox="0 0 15 15"><path d="M1 1 V14 H14.5 M4.5 6 V14 M7.5 6 V14 M10.5 6 V14 M13.5 6 V14" fill="none" stroke="#111" stroke-width="1.3"/></svg><svg class="a" style="left:1068px;top:694px" width="15" height="15" viewBox="0 0 15 15"><path d="M7 1 L1 14 H14 Q13 8 9 5" fill="none" stroke="#111" stroke-width="1.3"/></svg><svg class="a" style="left:1090px;top:694px" width="15" height="15" viewBox="0 0 15 15"><circle cx="5" cy="10" r="4" fill="#fff" stroke="#111" stroke-width="1.6"/><path d="M3.5 6 V1 M7 6.5 L12.5 1" stroke="#111" stroke-width="1.8"/></svg><svg class="a" style="left:1112px;top:694px" width="16" height="15" viewBox="0 0 16 15"><path d="M1 6 L7 3 L15 2 V6 L9 8 L1 14 Z" fill="#fff" stroke="#111" stroke-width="1.2"/><path d="M1 6 L3 13 M7 3 L9 8" stroke="#111"/></svg><svg class="a" style="left:1132px;top:704px" width="8" height="5" viewBox="0 0 8 5"><path d="M0 1 H7 L3.5 4.5 Z" fill="#222"/></svg>
<svg class="a" style="left:887px;top:717px" width="17" height="15" viewBox="0 0 17 15"><rect x="4.5" y="4.5" width="11" height="10" fill="#c8e8f8" stroke="#6a8aa0"/><rect x="5" y="5" width="10" height="3" fill="#eaf6ff"/><circle cx="4" cy="4" r="2.3" fill="#ffff40"/><path d="M4 0 V8 M0 4 H8 M1 1 L7 7 M7 1 L1 7" stroke="#f0f020" stroke-width="0.8"/></svg><svg class="a" style="left:1016px;top:718px" width="14" height="13" viewBox="0 0 14 13"><rect x="0.5" y="0.5" width="13" height="12" fill="#3a5f88" stroke="#b0a080"/><path d="M7 1 V12 M1 6.5 H13" stroke="#c8b890" stroke-width="1.4"/><path d="M7 1 L5 3 H9 Z M7 12 L5 10 H9 Z M1 6.5 L3 4.5 V8.5 Z M13 6.5 L11 4.5 V8.5 Z" fill="#c8b890"/><path d="M2 2 L4 4 M12 2 L10 4 M2 11 L4 9 M12 11 L10 9" stroke="#c8b890" stroke-width="1.2"/></svg><svg class="a" style="left:1517px;top:724px" width="11" height="8" viewBox="0 0 11 8"><rect x="9" y="0" width="1.5" height="1.5" fill="#a8c0d8"/><rect x="6" y="3" width="1.5" height="1.5" fill="#a8c0d8"/><rect x="9" y="3" width="1.5" height="1.5" fill="#a8c0d8"/><rect x="3" y="6" width="1.5" height="1.5" fill="#a8c0d8"/><rect x="6" y="6" width="1.5" height="1.5" fill="#a8c0d8"/><rect x="9" y="6" width="1.5" height="1.5" fill="#a8c0d8"/></svg>
</body></html>
